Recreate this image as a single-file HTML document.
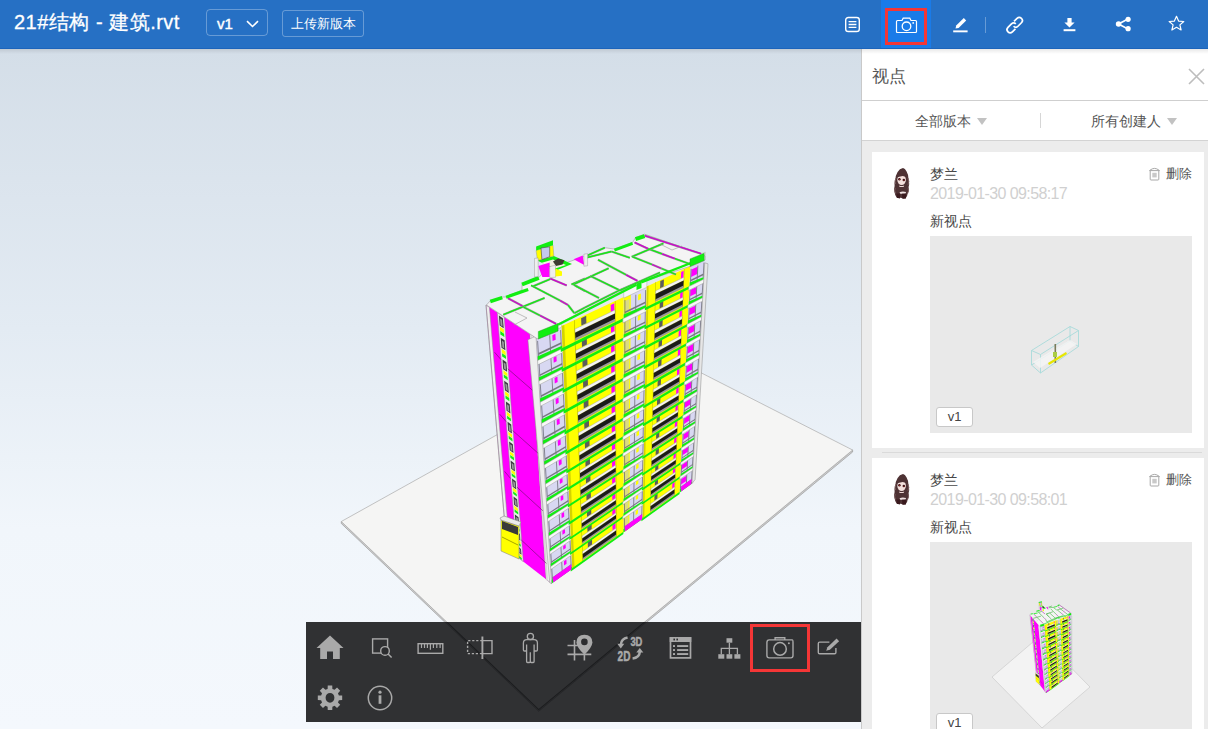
<!DOCTYPE html>
<html><head><meta charset="utf-8">
<style>
*{margin:0;padding:0;box-sizing:border-box}
html,body{width:1208px;height:729px;overflow:hidden;font-family:"Liberation Sans",sans-serif;background:#f3f7fc}
.abs{position:absolute}
#hdr{position:absolute;left:0;top:0;width:1208px;height:49px;background:#2670c4;border-bottom:1px solid #1c64bb}
#title{position:absolute;left:14px;top:9px;font-size:20px;letter-spacing:0.5px;-webkit-text-stroke:0.3px #fff;color:#fff;white-space:nowrap;line-height:26px}
#ver{position:absolute;left:206px;top:9px;width:62px;height:27px;border:1px solid rgba(255,255,255,.3);border-radius:4px}
#ver span{position:absolute;left:10px;top:5px;font-size:15px;font-weight:normal;-webkit-text-stroke:0.45px #fff;color:#fff;line-height:18px}
#upl{position:absolute;left:282px;top:10px;width:82px;height:27px;border:1px solid rgba(255,255,255,.3);border-radius:3px;color:#fff;font-size:12.5px;line-height:27px;text-align:center;white-space:nowrap}
#actbg{position:absolute;left:881px;top:0;width:50px;height:48px;background:#1a7be8}
#redtop{position:absolute;left:885px;top:8px;width:42px;height:37px;border:3px solid #f43636}
#vp{position:absolute;left:0;top:49px;width:861px;height:680px;background:linear-gradient(#d4dee8 0px,#e3ebf3 280px,#f1f6fb 480px,#f4f8fd 680px);overflow:hidden}
#shadow{position:absolute;left:0;top:49px;width:1208px;height:5px;background:linear-gradient(rgba(0,0,0,.09),rgba(0,0,0,0))}
#panel{position:absolute;left:861px;top:49px;width:347px;height:680px;background:#ececec;border-left:1px solid #c9c9c9;overflow:hidden}
#ph{position:absolute;left:0;top:0;width:346px;height:52px;background:#fff;border-bottom:1px solid #cfcfcf}
#ph .t{position:absolute;left:10px;top:18px;font-size:17px;color:#555;line-height:20px}
#pf{position:absolute;left:0;top:52px;width:346px;height:40px;background:#fff;border-bottom:1px solid #d3d3d3}
.ft{position:absolute;top:12px;font-size:14px;color:#555;line-height:16px;white-space:nowrap}
.tri{position:absolute;width:0;height:0;border-left:5px solid transparent;border-right:5px solid transparent;border-top:7px solid #c2c2c2}
.card{position:absolute;left:10px;width:332px;background:#fff}
.card .nm{position:absolute;left:58px;top:13px;font-size:14px;color:#484848;line-height:18px}
.card .dt{position:absolute;left:58px;top:33px;font-size:16px;letter-spacing:-0.6px;color:#d0d0d0;line-height:18px;white-space:nowrap}
.card .vn{position:absolute;left:58px;top:60px;font-size:14px;color:#484848;line-height:18px}
.card .del{position:absolute;left:294px;top:15px;font-size:12.5px;color:#555;line-height:14px}
.card .th{position:absolute;left:58px;top:84px;width:262px;height:197px;background:#e9e9e9;overflow:hidden}
.badge{position:absolute;left:6px;width:37px;height:20px;background:#fff;border:1px solid #c8c8c8;border-radius:3px;font-size:13px;color:#444;text-align:center;line-height:18px}
#tb{position:absolute;left:306px;top:622px;width:555px;height:100px;background:rgba(40,41,43,.96)}
#redtb{position:absolute;left:750px;top:624px;width:60px;height:48px;border:3px solid #f43636}
</style></head><body>
<div id="vp"></div><svg class="abs" style="left:0;top:49px" width="861" height="680" viewBox="0 49 861 680"><polygon points="341.3,523.5 538.7,711.6 852.6,452.0 852.6,450.0 538.7,709.6 341.3,521.5" fill="#cfcfcf" stroke="#9a9a9a" stroke-width="0.7"/><polygon points="341.3,521.5 652.6,348.1 852.6,450.0 538.7,709.6" fill="#f5f5f4" stroke="#aaaaaa" stroke-width="0.7"/><polygon points="486.0,305.0 536.0,338.0 551.6,583.6 507.0,549.0" fill="#ff00ff"/>
<polygon points="486.0,305.0 489.4,307.3 510.1,551.4 507.0,549.0" fill="#eeeeee" stroke="#8a8a8a" stroke-width="0.50"/>
<polygon points="497.3,312.4 504.2,317.0 523.3,561.6 517.1,556.8" fill="#ececec" stroke="#8a8a8a" stroke-width="0.50"/>
<polygon points="529.9,334.0 536.0,338.0 551.6,583.6 546.1,579.4" fill="#f0f0f0" stroke="#8a8a8a" stroke-width="0.50"/>
<polygon points="529.9,334.0 531.9,335.3 548.0,580.8 546.1,579.4" fill="#d8d8d8"/>
<polygon points="498.9,315.6 502.9,318.3 503.7,328.2 499.7,325.6" fill="#3a3a40"/>
<polygon points="500.1,318.5 502.1,319.8 502.6,326.5 500.6,325.2" fill="#9a9aa0"/>
<polygon points="499.8,326.7 503.8,329.3 504.1,333.3 500.1,330.7" fill="#ffff00"/>
<polygon points="500.2,331.1 504.1,333.7 504.4,337.0 500.4,334.4" fill="#11ee11"/>
<polygon points="500.7,337.7 504.6,340.3 505.4,350.3 501.5,347.7" fill="#3a3a40"/>
<polygon points="501.9,340.6 503.8,341.9 504.3,348.5 502.4,347.2" fill="#9a9aa0"/>
<polygon points="501.6,348.8 505.5,351.4 505.8,355.4 501.9,352.7" fill="#ffff00"/>
<polygon points="502.0,353.2 505.8,355.8 506.1,359.1 502.2,356.4" fill="#11ee11"/>
<polygon points="502.5,359.6 506.4,362.3 507.1,371.8 503.2,369.2" fill="#3a3a40"/>
<polygon points="503.6,362.4 505.6,363.8 506.1,370.1 504.1,368.8" fill="#9a9aa0"/>
<polygon points="503.3,370.2 507.2,372.9 507.5,376.6 503.6,374.0" fill="#ffff00"/>
<polygon points="503.7,374.4 507.5,377.1 507.8,380.2 503.9,377.5" fill="#11ee11"/>
<polygon points="504.2,380.7 508.0,383.4 508.8,392.9 504.9,390.2" fill="#3a3a40"/>
<polygon points="505.3,383.5 507.2,384.8 507.7,391.1 505.8,389.8" fill="#9a9aa0"/>
<polygon points="505.0,391.2 508.8,393.9 509.1,397.7 505.3,395.0" fill="#ffff00"/>
<polygon points="505.4,395.4 509.2,398.1 509.4,401.2 505.6,398.6" fill="#11ee11"/>
<polygon points="505.9,401.6 509.7,404.3 510.4,413.4 506.6,410.7" fill="#3a3a40"/>
<polygon points="507.0,404.3 508.9,405.7 509.3,411.7 507.4,410.4" fill="#9a9aa0"/>
<polygon points="506.7,411.7 510.4,414.4 510.7,418.0 506.9,415.3" fill="#ffff00"/>
<polygon points="507.0,415.7 510.8,418.4 511.0,421.3 507.2,418.7" fill="#11ee11"/>
<polygon points="507.5,421.7 511.2,424.4 511.9,433.4 508.2,430.7" fill="#3a3a40"/>
<polygon points="508.6,424.4 510.4,425.7 510.9,431.7 509.0,430.4" fill="#9a9aa0"/>
<polygon points="508.3,431.7 512.0,434.4 512.3,438.0 508.6,435.3" fill="#ffff00"/>
<polygon points="508.6,435.7 512.3,438.4 512.6,441.4 508.8,438.7" fill="#11ee11"/>
<polygon points="509.1,441.6 512.8,444.3 513.5,452.9 509.8,450.2" fill="#3a3a40"/>
<polygon points="510.1,444.2 512.0,445.5 512.5,451.3 510.6,449.9" fill="#9a9aa0"/>
<polygon points="509.8,451.2 513.6,453.9 513.8,457.3 510.1,454.6" fill="#ffff00"/>
<polygon points="510.1,454.9 513.9,457.6 514.1,460.5 510.4,457.8" fill="#11ee11"/>
<polygon points="510.6,460.5 514.3,463.2 514.9,471.4 511.2,468.7" fill="#3a3a40"/>
<polygon points="511.7,463.0 513.5,464.4 513.9,469.8 512.1,468.5" fill="#9a9aa0"/>
<polygon points="511.3,469.6 515.0,472.3 515.3,475.5 511.6,472.8" fill="#ffff00"/>
<polygon points="511.6,473.2 515.3,475.9 515.5,478.6 511.8,475.9" fill="#11ee11"/>
<polygon points="512.0,478.6 515.7,481.3 516.3,489.4 512.7,486.7" fill="#3a3a40"/>
<polygon points="513.1,481.1 514.9,482.4 515.4,487.8 513.5,486.5" fill="#9a9aa0"/>
<polygon points="512.8,487.6 516.4,490.3 516.7,493.6 513.0,490.8" fill="#ffff00"/>
<polygon points="513.0,491.2 516.7,493.9 516.9,496.6 513.3,493.9" fill="#11ee11"/>
<polygon points="513.5,496.6 517.1,499.3 517.8,507.5 514.1,504.7" fill="#3a3a40"/>
<polygon points="514.5,499.1 516.4,500.4 516.8,505.9 515.0,504.5" fill="#9a9aa0"/>
<polygon points="514.2,505.6 517.8,508.4 518.1,511.6 514.5,508.9" fill="#ffff00"/>
<polygon points="514.5,509.2 518.1,511.9 518.3,514.6 514.7,511.9" fill="#11ee11"/>
<polygon points="514.9,514.5 518.5,517.2 519.1,524.9 515.5,522.2" fill="#3a3a40"/>
<polygon points="516.0,516.9 517.8,518.3 518.2,523.4 516.4,522.0" fill="#9a9aa0"/>
<polygon points="515.6,523.0 519.2,525.8 519.4,528.8 515.9,526.1" fill="#ffff00"/>
<polygon points="515.9,526.4 519.5,529.2 519.7,531.7 516.1,529.0" fill="#11ee11"/>
<polygon points="516.3,531.3 519.9,534.1 520.4,540.8 516.8,538.1" fill="#3a3a40"/>
<polygon points="517.3,533.5 519.1,534.9 519.4,539.4 517.7,538.0" fill="#9a9aa0"/>
<polygon points="516.9,538.9 520.4,541.6 520.7,544.3 517.1,541.6" fill="#ffff00"/>
<polygon points="517.1,541.9 520.7,544.6 520.9,546.8 517.3,544.1" fill="#11ee11"/>
<polygon points="517.5,546.1 521.0,548.9 521.5,554.8 517.9,552.0" fill="#3a3a40"/>
<polygon points="518.5,548.1 520.2,549.5 520.5,553.4 518.8,552.0" fill="#9a9aa0"/>
<polygon points="518.0,552.7 521.5,555.4 521.7,557.7 518.2,555.0" fill="#ffff00"/>
<polygon points="518.2,555.3 521.7,558.0 521.9,559.9 518.4,557.2" fill="#11ee11"/>
<line x1="494.6" y1="352.3" x2="501.1" y2="359.7" stroke="#6a106a" stroke-width="0.60"/>
<line x1="507.8" y1="368.8" x2="535.2" y2="392.6" stroke="#6a106a" stroke-width="0.60"/>
<line x1="499.8" y1="414.3" x2="506.1" y2="421.6" stroke="#6a106a" stroke-width="0.60"/>
<line x1="512.6" y1="430.5" x2="539.2" y2="454.2" stroke="#6a106a" stroke-width="0.60"/>
<line x1="504.6" y1="471.4" x2="510.7" y2="478.6" stroke="#6a106a" stroke-width="0.60"/>
<line x1="517.0" y1="487.2" x2="542.9" y2="510.8" stroke="#6a106a" stroke-width="0.60"/>
<line x1="509.0" y1="524.4" x2="515.0" y2="531.5" stroke="#6a106a" stroke-width="0.60"/>
<line x1="521.2" y1="539.9" x2="546.4" y2="563.4" stroke="#6a106a" stroke-width="0.60"/>
<line x1="486.0" y1="305.0" x2="507.0" y2="549.0" stroke="#9a9a9a" stroke-width="0.60"/>
<polygon points="501.0,520.0 519.0,526.0 519.0,559.0 501.0,551.0" fill="#ffff00" stroke="#8a8a8a" stroke-width="0.60"/>
<polygon points="500.0,518.0 504.0,516.0 521.0,522.0 519.0,526.0 501.0,520.0" fill="#ececec" stroke="#8a8a8a" stroke-width="0.60"/>
<polygon points="502.0,521.0 518.0,527.0 518.0,535.0 502.0,529.0" fill="#3a3a3a"/>
<line x1="486.0" y1="305.0" x2="486.0" y2="305.0" stroke="#000" stroke-width="0" opacity="0"/>
<line x1="502" y1="537" x2="518" y2="545" stroke="#6a6a00" stroke-width="0.6"/>
<polygon points="536.0,336.0 705.0,257.5 692.0,483.6 551.6,583.6" fill="#e8e8e8"/>
<polygon points="550.6,567.0 571.6,552.4 572.3,568.8 551.6,583.6" fill="#d8d8f2"/>
<polygon points="563.9,561.2 566.4,559.5 566.6,563.8 564.1,565.5" fill="#ff00ff"/>
<line x1="551.8" y1="568.8" x2="552.5" y2="580.4" stroke="#6e6e78" stroke-width="0.80"/>
<line x1="561.7" y1="561.8" x2="562.3" y2="573.4" stroke="#6e6e78" stroke-width="0.80"/>
<line x1="570.7" y1="555.6" x2="571.2" y2="567.1" stroke="#6e6e78" stroke-width="0.80"/>
<polygon points="552.3,577.6 571.1,564.3 571.1,565.7 552.4,578.9" fill="#77777f"/>
<polygon points="551.4,580.3 572.2,566.6 572.3,568.8 551.6,583.6" fill="#11ee11"/>
<polygon points="549.6,552.0 570.9,537.5 571.6,552.4 550.6,567.0" fill="#d8d8f2"/>
<polygon points="563.1,546.0 565.6,544.2 565.8,548.1 563.3,549.8" fill="#ff00ff"/>
<line x1="550.8" y1="553.5" x2="551.5" y2="564.0" stroke="#6e6e78" stroke-width="0.80"/>
<line x1="560.9" y1="546.6" x2="561.5" y2="557.1" stroke="#6e6e78" stroke-width="0.80"/>
<line x1="570.0" y1="540.5" x2="570.5" y2="550.9" stroke="#6e6e78" stroke-width="0.80"/>
<polygon points="551.3,561.5 570.3,548.4 570.4,549.6 551.4,562.7" fill="#77777f"/>
<polygon points="550.4,564.0 571.5,550.3 571.6,552.4 550.6,567.0" fill="#11ee11"/>
<polygon points="549.7,567.3 573.2,551.0 573.3,553.8 549.9,570.1" fill="#f8f8f8" stroke="#9a9a9a" stroke-width="0.50"/>
<polygon points="548.6,536.5 570.3,522.1 570.9,537.5 549.6,552.0" fill="#d8d8f2"/>
<polygon points="562.3,530.6 564.9,528.9 565.1,532.9 562.5,534.7" fill="#ff00ff"/>
<line x1="549.9" y1="538.1" x2="550.6" y2="549.0" stroke="#6e6e78" stroke-width="0.80"/>
<line x1="560.1" y1="531.3" x2="560.7" y2="542.1" stroke="#6e6e78" stroke-width="0.80"/>
<line x1="569.3" y1="525.2" x2="569.8" y2="535.9" stroke="#6e6e78" stroke-width="0.80"/>
<polygon points="550.4,546.3 569.7,533.3 569.7,534.6 550.5,547.6" fill="#77777f"/>
<polygon points="549.4,548.9 570.8,535.4 570.9,537.5 549.6,552.0" fill="#11ee11"/>
<polygon points="548.8,552.3 572.5,536.1 572.6,539.0 548.9,555.2" fill="#f8f8f8" stroke="#9a9a9a" stroke-width="0.50"/>
<polygon points="547.5,519.0 569.5,504.8 570.3,522.1 548.6,536.5" fill="#d8d8f2"/>
<polygon points="561.4,513.6 564.0,511.9 564.3,516.5 561.7,518.2" fill="#ff00ff"/>
<line x1="548.8" y1="520.9" x2="549.6" y2="533.2" stroke="#6e6e78" stroke-width="0.80"/>
<line x1="559.2" y1="514.2" x2="559.9" y2="526.4" stroke="#6e6e78" stroke-width="0.80"/>
<line x1="568.5" y1="508.1" x2="569.1" y2="520.3" stroke="#6e6e78" stroke-width="0.80"/>
<polygon points="549.4,530.2 569.0,517.3 569.0,518.7 549.5,531.6" fill="#77777f"/>
<polygon points="548.4,533.0 570.2,519.7 570.3,522.1 548.6,536.5" fill="#11ee11"/>
<polygon points="547.8,536.7 571.9,520.7 572.0,523.9 548.0,540.0" fill="#f8f8f8" stroke="#9a9a9a" stroke-width="0.50"/>
<polygon points="546.5,502.0 568.8,488.0 569.5,504.8 547.5,519.0" fill="#d8d8f2"/>
<polygon points="560.6,496.6 563.2,495.0 563.4,499.4 560.8,501.1" fill="#ff00ff"/>
<line x1="547.8" y1="503.9" x2="548.5" y2="515.8" stroke="#6e6e78" stroke-width="0.80"/>
<line x1="558.3" y1="497.2" x2="558.9" y2="509.0" stroke="#6e6e78" stroke-width="0.80"/>
<line x1="567.8" y1="491.2" x2="568.3" y2="503.0" stroke="#6e6e78" stroke-width="0.80"/>
<polygon points="548.3,512.9 568.2,500.1 568.2,501.5 548.4,514.2" fill="#77777f"/>
<polygon points="547.3,515.6 569.4,502.5 569.5,504.8 547.5,519.0" fill="#11ee11"/>
<polygon points="546.6,519.2 571.1,503.4 571.3,506.5 546.8,522.4" fill="#f8f8f8" stroke="#9a9a9a" stroke-width="0.50"/>
<polygon points="545.4,484.6 568.0,470.7 568.8,488.0 546.5,502.0" fill="#d8d8f2"/>
<polygon points="559.7,479.4 562.4,477.8 562.6,482.3 559.9,483.9" fill="#ff00ff"/>
<line x1="546.7" y1="486.5" x2="547.4" y2="498.7" stroke="#6e6e78" stroke-width="0.80"/>
<line x1="557.4" y1="479.9" x2="558.0" y2="492.1" stroke="#6e6e78" stroke-width="0.80"/>
<line x1="567.0" y1="474.0" x2="567.6" y2="486.1" stroke="#6e6e78" stroke-width="0.80"/>
<polygon points="547.3,495.8 567.4,483.2 567.5,484.6 547.3,497.2" fill="#77777f"/>
<polygon points="546.2,498.6 568.7,485.6 568.8,488.0 546.5,502.0" fill="#11ee11"/>
<polygon points="545.6,502.2 570.4,486.6 570.6,489.8 545.8,505.5" fill="#f8f8f8" stroke="#9a9a9a" stroke-width="0.50"/>
<polygon points="544.2,465.4 567.2,451.7 568.0,470.7 545.4,484.6" fill="#d8d8f2"/>
<polygon points="558.7,460.7 561.5,459.1 561.7,464.1 559.0,465.7" fill="#ff00ff"/>
<line x1="545.5" y1="467.6" x2="546.3" y2="481.1" stroke="#6e6e78" stroke-width="0.80"/>
<line x1="556.4" y1="461.1" x2="557.1" y2="474.5" stroke="#6e6e78" stroke-width="0.80"/>
<line x1="566.2" y1="455.3" x2="566.8" y2="468.6" stroke="#6e6e78" stroke-width="0.80"/>
<polygon points="546.1,477.8 566.6,465.4 566.7,466.9 546.2,479.3" fill="#77777f"/>
<polygon points="545.1,480.8 567.9,468.1 568.0,470.7 545.4,484.6" fill="#11ee11"/>
<polygon points="544.4,484.8 569.7,469.3 569.8,472.9 544.7,488.4" fill="#f8f8f8" stroke="#9a9a9a" stroke-width="0.50"/>
<polygon points="542.9,445.0 566.3,431.6 567.2,451.7 544.2,465.4" fill="#d8d8f2"/>
<polygon points="557.7,440.7 560.5,439.1 560.8,444.4 558.0,446.0" fill="#ff00ff"/>
<line x1="544.3" y1="447.4" x2="545.1" y2="461.7" stroke="#6e6e78" stroke-width="0.80"/>
<line x1="555.3" y1="441.0" x2="556.1" y2="455.2" stroke="#6e6e78" stroke-width="0.80"/>
<line x1="565.3" y1="435.3" x2="565.9" y2="449.4" stroke="#6e6e78" stroke-width="0.80"/>
<polygon points="544.9,458.3 565.8,446.0 565.8,447.6 545.0,459.9" fill="#77777f"/>
<polygon points="543.9,461.4 567.0,449.0 567.2,451.7 544.2,465.4" fill="#11ee11"/>
<polygon points="543.2,465.5 568.9,450.3 569.0,454.1 543.5,469.3" fill="#f8f8f8" stroke="#9a9a9a" stroke-width="0.50"/>
<polygon points="541.5,423.8 565.4,410.7 566.3,431.6 542.9,445.0" fill="#d8d8f2"/>
<polygon points="556.7,419.8 559.5,418.3 559.8,423.8 556.9,425.3" fill="#ff00ff"/>
<line x1="543.0" y1="426.4" x2="543.9" y2="441.2" stroke="#6e6e78" stroke-width="0.80"/>
<line x1="554.2" y1="420.1" x2="555.0" y2="434.8" stroke="#6e6e78" stroke-width="0.80"/>
<line x1="564.3" y1="414.5" x2="565.0" y2="429.1" stroke="#6e6e78" stroke-width="0.80"/>
<polygon points="543.6,437.6 564.8,425.6 564.9,427.3 543.8,439.3" fill="#77777f"/>
<polygon points="542.6,440.8 566.2,428.7 566.3,431.6 542.9,445.0" fill="#11ee11"/>
<polygon points="541.9,445.1 568.0,430.2 568.2,434.1 542.2,449.1" fill="#f8f8f8" stroke="#9a9a9a" stroke-width="0.50"/>
<polygon points="540.2,402.7 564.5,389.8 565.4,410.7 541.5,423.8" fill="#d8d8f2"/>
<polygon points="555.6,398.9 558.5,397.4 558.7,402.8 555.9,404.4" fill="#ff00ff"/>
<line x1="541.6" y1="405.2" x2="542.6" y2="420.0" stroke="#6e6e78" stroke-width="0.80"/>
<line x1="553.1" y1="399.1" x2="553.9" y2="413.8" stroke="#6e6e78" stroke-width="0.80"/>
<line x1="563.4" y1="393.6" x2="564.1" y2="408.2" stroke="#6e6e78" stroke-width="0.80"/>
<polygon points="542.3,416.5 563.9,404.7 564.0,406.4 542.4,418.1" fill="#77777f"/>
<polygon points="541.3,419.6 565.2,407.8 565.4,410.7 541.5,423.8" fill="#11ee11"/>
<polygon points="540.6,423.9 567.1,409.3 567.3,413.1 540.8,427.8" fill="#f8f8f8" stroke="#9a9a9a" stroke-width="0.50"/>
<polygon points="538.9,381.5 563.5,368.9 564.5,389.8 540.2,402.7" fill="#d8d8f2"/>
<polygon points="554.5,377.9 557.4,376.4 557.7,381.9 554.8,383.4" fill="#ff00ff"/>
<line x1="540.3" y1="384.1" x2="541.2" y2="398.9" stroke="#6e6e78" stroke-width="0.80"/>
<line x1="552.0" y1="378.1" x2="552.8" y2="392.8" stroke="#6e6e78" stroke-width="0.80"/>
<line x1="562.5" y1="372.7" x2="563.1" y2="387.4" stroke="#6e6e78" stroke-width="0.80"/>
<polygon points="541.0,395.3 563.0,383.8 563.0,385.5 541.1,397.0" fill="#77777f"/>
<polygon points="539.9,398.5 564.3,386.9 564.5,389.8 540.2,402.7" fill="#11ee11"/>
<polygon points="539.2,402.8 566.3,388.5 566.4,392.4 539.5,406.7" fill="#f8f8f8" stroke="#9a9a9a" stroke-width="0.50"/>
<polygon points="537.6,361.0 562.7,348.7 563.5,368.9 538.9,381.5" fill="#d8d8f2"/>
<polygon points="553.5,357.4 556.4,356.0 556.7,361.3 553.7,362.7" fill="#ff00ff"/>
<line x1="539.1" y1="363.5" x2="539.9" y2="377.8" stroke="#6e6e78" stroke-width="0.80"/>
<line x1="550.9" y1="357.6" x2="551.7" y2="371.9" stroke="#6e6e78" stroke-width="0.80"/>
<line x1="561.6" y1="352.4" x2="562.2" y2="366.6" stroke="#6e6e78" stroke-width="0.80"/>
<polygon points="539.7,374.4 562.0,363.1 562.1,364.7 539.8,376.0" fill="#77777f"/>
<polygon points="538.6,377.5 563.4,366.1 563.5,368.9 538.9,381.5" fill="#11ee11"/>
<polygon points="537.9,381.6 565.4,367.6 565.5,371.4 538.1,385.4" fill="#f8f8f8" stroke="#9a9a9a" stroke-width="0.50"/>
<polygon points="536.1,338.0 561.7,326.1 562.7,348.7 537.6,361.0" fill="#d8d8f2"/>
<polygon points="552.3,335.2 555.4,333.7 555.7,339.7 552.6,341.1" fill="#ff00ff"/>
<line x1="537.6" y1="340.9" x2="538.6" y2="357.0" stroke="#6e6e78" stroke-width="0.80"/>
<line x1="549.7" y1="335.2" x2="550.6" y2="351.2" stroke="#6e6e78" stroke-width="0.80"/>
<line x1="560.6" y1="330.1" x2="561.3" y2="346.0" stroke="#6e6e78" stroke-width="0.80"/>
<polygon points="538.4,353.1 561.1,342.2 561.2,344.0 538.5,354.9" fill="#77777f"/>
<polygon points="537.3,356.5 562.5,345.6 562.7,348.7 537.6,361.0" fill="#11ee11"/>
<polygon points="536.6,361.0 564.5,347.4 564.7,351.6 536.8,365.3" fill="#f8f8f8" stroke="#9a9a9a" stroke-width="0.50"/>
<polygon points="535.6,329.9 561.3,318.1 561.7,327.1 536.2,339.0" fill="#f6f6f6" stroke="#999" stroke-width="0.40"/>
<polygon points="571.6,552.4 623.5,516.3 623.4,532.4 572.3,568.8" fill="#ffff00"/>
<polygon points="571.6,552.4 573.8,550.9 574.5,567.3 572.3,568.8" fill="#d4d400"/>
<polygon points="581.9,545.2 582.4,544.8 583.0,561.3 582.4,561.6" fill="#b8b800"/>
<polygon points="616.0,521.5 616.5,521.1 616.6,537.3 616.1,537.7" fill="#b8b800"/>
<polygon points="587.8,542.0 592.0,539.0 592.1,544.5 587.9,547.4" fill="#5c5c5c"/>
<polygon points="612.5,525.2 615.5,523.1 615.6,528.4 612.6,530.5" fill="#ff00ff"/>
<polygon points="582.6,551.5 616.1,528.0 616.1,530.6 582.7,554.1" fill="#f4f4f4" stroke="#9a9a9a" stroke-width="0.40"/>
<polygon points="582.7,554.1 616.1,530.6 616.1,535.4 582.9,559.0" fill="#1a1a1a"/>
<polygon points="582.9,558.0 616.1,534.5 616.1,536.4 582.9,560.0" fill="#9a9a9a"/>
<polygon points="570.7,569.3 623.4,531.8 623.4,534.0 570.8,571.6" fill="#11ee11"/>
<polygon points="570.9,537.5 623.5,501.8 623.5,516.3 571.6,552.4" fill="#ffff00"/>
<polygon points="570.9,537.5 573.1,536.0 573.8,550.9 571.6,552.4" fill="#d4d400"/>
<polygon points="581.4,530.4 581.9,530.0 582.4,544.8 581.9,545.2" fill="#b8b800"/>
<polygon points="615.9,506.9 616.5,506.5 616.5,521.1 616.0,521.5" fill="#b8b800"/>
<polygon points="587.3,527.1 591.6,524.2 591.7,529.1 587.5,532.0" fill="#5c5c5c"/>
<polygon points="612.4,510.5 615.4,508.4 615.5,513.1 612.4,515.2" fill="#ff00ff"/>
<polygon points="582.1,536.0 616.0,512.8 616.0,515.1 582.2,538.4" fill="#f4f4f4" stroke="#9a9a9a" stroke-width="0.40"/>
<polygon points="582.2,538.4 616.0,515.1 616.0,519.5 582.3,542.8" fill="#1a1a1a"/>
<polygon points="582.3,541.9 616.0,518.6 616.0,520.3 582.4,543.7" fill="#9a9a9a"/>
<polygon points="570.0,552.9 623.5,515.7 623.5,517.7 570.1,554.9" fill="#11ee11"/>
<polygon points="570.3,522.1 623.5,486.8 623.5,501.8 570.9,537.5" fill="#ffff00"/>
<polygon points="570.3,522.1 572.5,520.6 573.1,536.0 570.9,537.5" fill="#d4d400"/>
<polygon points="580.8,515.1 581.4,514.7 581.9,530.0 581.4,530.4" fill="#b8b800"/>
<polygon points="615.9,491.8 616.4,491.5 616.5,506.5 615.9,506.9" fill="#b8b800"/>
<polygon points="586.9,511.9 591.2,509.0 591.3,514.1 587.0,517.0" fill="#5c5c5c"/>
<polygon points="612.3,495.4 615.4,493.4 615.4,498.2 612.3,500.3" fill="#ff00ff"/>
<polygon points="581.6,520.9 615.9,497.9 615.9,500.3 581.7,523.4" fill="#f4f4f4" stroke="#9a9a9a" stroke-width="0.40"/>
<polygon points="581.7,523.4 615.9,500.3 615.9,504.8 581.8,527.9" fill="#1a1a1a"/>
<polygon points="581.8,527.0 615.9,503.9 615.9,505.7 581.9,528.8" fill="#9a9a9a"/>
<polygon points="569.3,538.0 623.5,501.2 623.5,503.2 569.4,540.1" fill="#11ee11"/>
<polygon points="569.5,504.8 623.5,469.8 623.5,486.8 570.3,522.1" fill="#ffff00"/>
<polygon points="569.5,504.8 571.8,503.3 572.5,520.6 570.3,522.1" fill="#d4d400"/>
<polygon points="580.2,497.8 580.8,497.5 581.4,514.7 580.8,515.1" fill="#b8b800"/>
<polygon points="615.8,474.8 616.3,474.5 616.4,491.5 615.9,491.8" fill="#b8b800"/>
<polygon points="586.4,494.8 590.8,491.9 590.9,497.6 586.5,500.5" fill="#5c5c5c"/>
<polygon points="612.1,478.6 615.3,476.6 615.3,482.0 612.2,484.1" fill="#ff00ff"/>
<polygon points="581.0,504.4 615.8,481.7 615.8,484.4 581.1,507.2" fill="#f4f4f4" stroke="#9a9a9a" stroke-width="0.40"/>
<polygon points="581.1,507.2 615.8,484.4 615.9,489.5 581.3,512.4" fill="#1a1a1a"/>
<polygon points="581.3,511.3 615.9,488.5 615.9,490.5 581.3,513.4" fill="#9a9a9a"/>
<polygon points="568.6,522.5 623.5,486.1 623.5,488.4 568.7,524.9" fill="#11ee11"/>
<polygon points="568.8,488.0 623.5,453.5 623.5,469.8 569.5,504.8" fill="#ffff00"/>
<polygon points="568.8,488.0 571.1,486.5 571.8,503.3 569.5,504.8" fill="#d4d400"/>
<polygon points="579.6,481.1 580.2,480.7 580.8,497.5 580.2,497.8" fill="#b8b800"/>
<polygon points="615.7,458.4 616.2,458.1 616.3,474.5 615.8,474.8" fill="#b8b800"/>
<polygon points="585.9,478.0 590.3,475.2 590.5,480.8 586.0,483.6" fill="#5c5c5c"/>
<polygon points="612.0,462.1 615.2,460.1 615.2,465.4 612.1,467.4" fill="#ff00ff"/>
<polygon points="580.4,487.5 615.7,465.0 615.7,467.7 580.5,490.2" fill="#f4f4f4" stroke="#9a9a9a" stroke-width="0.40"/>
<polygon points="580.5,490.2 615.7,467.7 615.8,472.6 580.7,495.2" fill="#1a1a1a"/>
<polygon points="580.7,494.2 615.8,471.6 615.8,473.5 580.7,496.2" fill="#9a9a9a"/>
<polygon points="567.8,505.2 623.5,469.2 623.5,471.5 567.9,507.5" fill="#11ee11"/>
<polygon points="568.0,470.7 623.6,436.7 623.5,453.5 568.8,488.0" fill="#ffff00"/>
<polygon points="568.0,470.7 570.4,469.3 571.1,486.5 568.8,488.0" fill="#d4d400"/>
<polygon points="579.1,464.0 579.6,463.6 580.2,480.7 579.6,481.1" fill="#b8b800"/>
<polygon points="615.6,441.6 616.1,441.3 616.2,458.1 615.7,458.4" fill="#b8b800"/>
<polygon points="585.4,461.0 589.9,458.2 590.0,463.9 585.5,466.7" fill="#5c5c5c"/>
<polygon points="611.9,445.2 615.1,443.3 615.1,448.7 611.9,450.7" fill="#ff00ff"/>
<polygon points="579.9,470.5 615.6,448.4 615.7,451.1 580.0,473.3" fill="#f4f4f4" stroke="#9a9a9a" stroke-width="0.40"/>
<polygon points="580.0,473.3 615.7,451.1 615.7,456.1 580.1,478.4" fill="#1a1a1a"/>
<polygon points="580.1,477.4 615.7,455.1 615.7,457.1 580.2,479.4" fill="#9a9a9a"/>
<polygon points="567.0,488.3 623.5,452.8 623.5,455.1 567.2,490.7" fill="#11ee11"/>
<polygon points="567.2,451.7 623.6,418.3 623.6,436.7 568.0,470.7" fill="#ffff00"/>
<polygon points="567.2,451.7 569.6,450.3 570.4,469.3 568.0,470.7" fill="#d4d400"/>
<polygon points="578.4,445.1 579.0,444.7 579.6,463.6 579.1,464.0" fill="#b8b800"/>
<polygon points="615.5,423.1 616.1,422.8 616.1,441.3 615.6,441.6" fill="#b8b800"/>
<polygon points="584.8,442.3 589.4,439.5 589.6,445.8 585.0,448.5" fill="#5c5c5c"/>
<polygon points="611.7,426.8 615.0,424.9 615.0,430.9 611.8,432.8" fill="#ff00ff"/>
<polygon points="579.2,452.4 615.6,430.5 615.6,433.5 579.3,455.4" fill="#f4f4f4" stroke="#9a9a9a" stroke-width="0.40"/>
<polygon points="579.3,455.4 615.6,433.5 615.6,439.0 579.5,461.0" fill="#1a1a1a"/>
<polygon points="579.5,459.9 615.6,437.9 615.6,440.1 579.6,462.1" fill="#9a9a9a"/>
<polygon points="566.3,471.0 623.6,436.0 623.6,438.5 566.4,473.6" fill="#11ee11"/>
<polygon points="566.3,431.6 623.6,398.8 623.6,418.3 567.2,451.7" fill="#ffff00"/>
<polygon points="566.3,431.6 568.7,430.2 569.6,450.3 567.2,451.7" fill="#d4d400"/>
<polygon points="577.7,425.1 578.3,424.7 579.0,444.7 578.4,445.1" fill="#b8b800"/>
<polygon points="615.4,403.5 616.0,403.1 616.1,422.8 615.5,423.1" fill="#b8b800"/>
<polygon points="584.2,422.4 588.9,419.7 589.1,426.3 584.4,429.0" fill="#5c5c5c"/>
<polygon points="611.6,407.3 614.9,405.4 614.9,411.7 611.6,413.6" fill="#ff00ff"/>
<polygon points="578.6,432.8 615.5,411.4 615.5,414.5 578.7,436.0" fill="#f4f4f4" stroke="#9a9a9a" stroke-width="0.40"/>
<polygon points="578.7,436.0 615.5,414.5 615.5,420.4 578.9,442.0" fill="#1a1a1a"/>
<polygon points="578.8,440.8 615.5,419.2 615.5,421.5 578.9,443.2" fill="#9a9a9a"/>
<polygon points="565.4,452.0 623.6,417.5 623.6,420.2 565.5,454.8" fill="#11ee11"/>
<polygon points="565.4,410.7 623.6,378.5 623.6,398.8 566.3,431.6" fill="#ffff00"/>
<polygon points="565.4,410.7 567.8,409.3 568.7,430.2 566.3,431.6" fill="#d4d400"/>
<polygon points="577.0,404.3 577.6,403.9 578.3,424.7 577.7,425.1" fill="#b8b800"/>
<polygon points="615.3,383.1 615.9,382.8 616.0,403.1 615.4,403.5" fill="#b8b800"/>
<polygon points="583.6,401.7 588.4,399.0 588.5,405.9 583.8,408.6" fill="#5c5c5c"/>
<polygon points="611.4,386.9 614.8,385.1 614.8,391.6 611.5,393.5" fill="#ff00ff"/>
<polygon points="577.9,412.3 615.4,391.3 615.4,394.6 578.0,415.6" fill="#f4f4f4" stroke="#9a9a9a" stroke-width="0.40"/>
<polygon points="578.0,415.6 615.4,394.6 615.4,400.6 578.2,421.8" fill="#1a1a1a"/>
<polygon points="578.2,420.6 615.4,399.4 615.4,401.8 578.2,423.1" fill="#9a9a9a"/>
<polygon points="564.5,431.8 623.6,398.0 623.6,400.8 564.6,434.7" fill="#11ee11"/>
<polygon points="564.5,389.8 623.7,358.4 623.6,378.5 565.4,410.7" fill="#ffff00"/>
<polygon points="564.5,389.8 567.0,388.5 567.8,409.3 565.4,410.7" fill="#d4d400"/>
<polygon points="576.3,383.6 576.9,383.2 577.6,403.9 577.0,404.3" fill="#b8b800"/>
<polygon points="615.2,362.9 615.8,362.6 615.9,382.8 615.3,383.1" fill="#b8b800"/>
<polygon points="583.0,381.1 587.8,378.5 588.0,385.3 583.2,387.9" fill="#5c5c5c"/>
<polygon points="611.2,366.7 614.7,364.8 614.7,371.4 611.3,373.2" fill="#ff00ff"/>
<polygon points="577.2,391.6 615.3,371.1 615.3,374.3 577.3,394.9" fill="#f4f4f4" stroke="#9a9a9a" stroke-width="0.40"/>
<polygon points="577.3,394.9 615.3,374.3 615.3,380.3 577.5,401.1" fill="#1a1a1a"/>
<polygon points="577.4,399.8 615.3,379.1 615.3,381.5 577.5,402.3" fill="#9a9a9a"/>
<polygon points="563.5,410.8 623.6,377.7 623.6,380.5 563.7,413.7" fill="#11ee11"/>
<polygon points="563.5,368.9 623.7,338.3 623.7,358.4 564.5,389.8" fill="#ffff00"/>
<polygon points="563.5,368.9 566.1,367.6 567.0,388.5 564.5,389.8" fill="#d4d400"/>
<polygon points="575.5,362.8 576.2,362.5 576.9,383.2 576.3,383.6" fill="#b8b800"/>
<polygon points="615.1,342.7 615.7,342.4 615.8,362.6 615.2,362.9" fill="#b8b800"/>
<polygon points="582.4,360.4 587.3,357.9 587.5,364.8 582.6,367.3" fill="#5c5c5c"/>
<polygon points="611.1,346.4 614.5,344.6 614.6,351.1 611.1,352.9" fill="#ff00ff"/>
<polygon points="576.4,370.9 615.2,350.8 615.2,354.1 576.6,374.2" fill="#f4f4f4" stroke="#9a9a9a" stroke-width="0.40"/>
<polygon points="576.6,374.2 615.2,354.1 615.2,360.1 576.8,380.4" fill="#1a1a1a"/>
<polygon points="576.7,379.1 615.2,358.9 615.2,361.3 576.8,381.6" fill="#9a9a9a"/>
<polygon points="562.6,390.0 623.7,357.6 623.6,360.4 562.7,392.9" fill="#11ee11"/>
<polygon points="562.7,348.7 623.7,318.9 623.7,338.3 563.5,368.9" fill="#ffff00"/>
<polygon points="562.7,348.7 565.2,347.5 566.1,367.6 563.5,368.9" fill="#d4d400"/>
<polygon points="574.8,342.8 575.5,342.5 576.2,362.5 575.5,362.8" fill="#b8b800"/>
<polygon points="615.0,323.1 615.6,322.8 615.7,342.4 615.1,342.7" fill="#b8b800"/>
<polygon points="581.8,340.4 586.8,338.0 586.9,344.6 582.0,347.0" fill="#5c5c5c"/>
<polygon points="610.9,326.7 614.4,325.0 614.5,331.3 611.0,333.0" fill="#ff00ff"/>
<polygon points="575.8,350.5 615.1,331.0 615.1,334.1 575.9,353.8" fill="#f4f4f4" stroke="#9a9a9a" stroke-width="0.40"/>
<polygon points="575.9,353.8 615.1,334.1 615.1,340.0 576.1,359.7" fill="#1a1a1a"/>
<polygon points="576.0,358.5 615.1,338.8 615.1,341.1 576.1,360.9" fill="#9a9a9a"/>
<polygon points="561.6,369.1 623.7,337.5 623.7,340.2 561.8,371.9" fill="#11ee11"/>
<polygon points="561.7,326.1 623.7,297.1 623.7,318.9 562.7,348.7" fill="#ffff00"/>
<polygon points="561.7,326.1 564.3,324.9 565.2,347.5 562.7,348.7" fill="#d4d400"/>
<polygon points="574.1,320.3 574.7,320.0 575.5,342.5 574.8,342.8" fill="#b8b800"/>
<polygon points="614.9,301.3 615.5,301.0 615.6,322.8 615.0,323.1" fill="#b8b800"/>
<polygon points="581.1,318.2 586.2,315.8 586.4,323.2 581.4,325.6" fill="#5c5c5c"/>
<polygon points="610.7,305.0 614.3,303.3 614.4,310.4 610.8,312.1" fill="#ff00ff"/>
<polygon points="575.0,329.1 614.9,310.1 615.0,313.6 575.1,332.7" fill="#f4f4f4" stroke="#9a9a9a" stroke-width="0.40"/>
<polygon points="575.1,332.7 615.0,313.6 615.0,320.1 575.4,339.4" fill="#1a1a1a"/>
<polygon points="575.3,338.0 615.0,318.8 615.0,321.4 575.4,340.7" fill="#9a9a9a"/>
<polygon points="560.7,348.8 623.7,318.0 623.7,321.0 560.9,351.9" fill="#11ee11"/>
<polygon points="623.5,516.3 643.0,502.7 642.7,518.7 623.4,532.4" fill="#d8d8f2"/>
<polygon points="635.6,511.0 638.0,509.4 637.9,513.6 635.6,515.2" fill="#ffff00"/>
<polygon points="623.5,516.3 629.4,512.2 629.3,528.3 623.4,532.4" fill="#ffff00"/>
<polygon points="624.4,518.9 628.4,516.1 628.4,525.8 624.4,528.5" fill="#dcdc80"/>
<line x1="624.4" y1="518.1" x2="624.4" y2="529.3" stroke="#6e6e78" stroke-width="0.80"/>
<line x1="633.7" y1="511.6" x2="633.6" y2="522.8" stroke="#6e6e78" stroke-width="0.80"/>
<line x1="642.0" y1="505.8" x2="641.8" y2="517.0" stroke="#6e6e78" stroke-width="0.80"/>
<polygon points="624.4,526.6 641.9,514.3 641.9,515.6 624.4,527.9" fill="#77777f"/>
<polygon points="623.4,529.2 642.8,516.5 642.7,518.7 623.4,532.4" fill="#11ee11"/>
<polygon points="623.5,501.8 643.3,488.3 643.0,502.7 623.5,516.3" fill="#d8d8f2"/>
<polygon points="635.8,496.3 638.2,494.7 638.1,498.4 635.8,500.0" fill="#ffff00"/>
<polygon points="623.5,501.8 629.5,497.7 629.4,512.2 623.5,516.3" fill="#ffff00"/>
<polygon points="624.5,504.0 628.5,501.3 628.4,510.0 624.5,512.7" fill="#dcdc80"/>
<line x1="624.5" y1="503.3" x2="624.5" y2="513.5" stroke="#6e6e78" stroke-width="0.80"/>
<line x1="633.8" y1="496.9" x2="633.7" y2="507.0" stroke="#6e6e78" stroke-width="0.80"/>
<line x1="642.3" y1="491.1" x2="642.1" y2="501.2" stroke="#6e6e78" stroke-width="0.80"/>
<polygon points="624.5,511.0 642.1,498.8 642.1,499.9 624.5,512.2" fill="#77777f"/>
<polygon points="623.5,513.4 643.1,500.7 643.0,502.7 623.5,516.3" fill="#11ee11"/>
<polygon points="622.7,516.5 644.4,501.5 644.3,504.2 622.7,519.2" fill="#f8f8f8" stroke="#9a9a9a" stroke-width="0.50"/>
<polygon points="623.5,486.8 643.5,473.4 643.3,488.3 623.5,501.8" fill="#d8d8f2"/>
<polygon points="636.0,481.4 638.4,479.9 638.3,483.7 635.9,485.3" fill="#ffff00"/>
<polygon points="623.5,486.8 629.6,482.7 629.5,497.7 623.5,501.8" fill="#ffff00"/>
<polygon points="624.5,489.1 628.6,486.4 628.5,495.4 624.5,498.1" fill="#dcdc80"/>
<line x1="624.5" y1="488.3" x2="624.5" y2="498.8" stroke="#6e6e78" stroke-width="0.80"/>
<line x1="634.0" y1="482.0" x2="633.9" y2="492.5" stroke="#6e6e78" stroke-width="0.80"/>
<line x1="642.5" y1="476.3" x2="642.3" y2="486.7" stroke="#6e6e78" stroke-width="0.80"/>
<polygon points="624.5,496.3 642.4,484.2 642.4,485.4 624.5,497.5" fill="#77777f"/>
<polygon points="623.5,498.8 643.3,486.2 643.3,488.3 623.5,501.8" fill="#11ee11"/>
<polygon points="622.8,501.9 644.7,487.1 644.6,489.8 622.8,504.8" fill="#f8f8f8" stroke="#9a9a9a" stroke-width="0.50"/>
<polygon points="623.5,469.8 643.8,456.7 643.5,473.4 623.5,486.8" fill="#d8d8f2"/>
<polygon points="636.2,465.0 638.6,463.5 638.5,467.8 636.1,469.4" fill="#ffff00"/>
<polygon points="623.5,469.8 629.7,465.8 629.6,482.7 623.5,486.8" fill="#ffff00"/>
<polygon points="624.5,472.6 628.7,469.9 628.6,480.0 624.5,482.7" fill="#dcdc80"/>
<line x1="624.5" y1="471.7" x2="624.5" y2="483.6" stroke="#6e6e78" stroke-width="0.80"/>
<line x1="634.2" y1="465.5" x2="634.0" y2="477.3" stroke="#6e6e78" stroke-width="0.80"/>
<line x1="642.8" y1="459.9" x2="642.6" y2="471.6" stroke="#6e6e78" stroke-width="0.80"/>
<polygon points="624.5,480.7 642.6,468.8 642.6,470.1 624.5,482.1" fill="#77777f"/>
<polygon points="623.5,483.4 643.6,471.1 643.5,473.4 623.5,486.8" fill="#11ee11"/>
<polygon points="622.8,486.9 644.9,472.2 644.9,475.3 622.8,490.1" fill="#f8f8f8" stroke="#9a9a9a" stroke-width="0.50"/>
<polygon points="623.5,453.5 644.1,440.5 643.8,456.7 623.5,469.8" fill="#d8d8f2"/>
<polygon points="636.4,448.7 638.8,447.1 638.7,451.3 636.3,452.9" fill="#ffff00"/>
<polygon points="623.5,453.5 629.8,449.5 629.7,465.8 623.5,469.8" fill="#ffff00"/>
<polygon points="624.6,456.1 628.7,453.5 628.7,463.3 624.6,465.9" fill="#dcdc80"/>
<line x1="624.6" y1="455.3" x2="624.6" y2="466.7" stroke="#6e6e78" stroke-width="0.80"/>
<line x1="634.3" y1="449.1" x2="634.2" y2="460.5" stroke="#6e6e78" stroke-width="0.80"/>
<line x1="643.1" y1="443.6" x2="642.9" y2="454.9" stroke="#6e6e78" stroke-width="0.80"/>
<polygon points="624.6,464.0 642.9,452.2 642.9,453.5 624.6,465.3" fill="#77777f"/>
<polygon points="623.5,466.6 643.9,454.5 643.8,456.7 623.5,469.8" fill="#11ee11"/>
<polygon points="622.8,470.0 645.2,455.5 645.2,458.5 622.8,473.1" fill="#f8f8f8" stroke="#9a9a9a" stroke-width="0.50"/>
<polygon points="623.6,436.7 644.4,424.0 644.1,440.5 623.5,453.5" fill="#d8d8f2"/>
<polygon points="636.5,432.1 639.0,430.6 639.0,434.9 636.5,436.4" fill="#ffff00"/>
<polygon points="623.6,436.7 629.9,432.8 629.8,449.5 623.5,453.5" fill="#ffff00"/>
<polygon points="624.6,439.5 628.8,436.9 628.8,446.9 624.6,449.5" fill="#dcdc80"/>
<line x1="624.6" y1="438.6" x2="624.6" y2="450.3" stroke="#6e6e78" stroke-width="0.80"/>
<line x1="634.5" y1="432.5" x2="634.4" y2="444.2" stroke="#6e6e78" stroke-width="0.80"/>
<line x1="643.3" y1="427.1" x2="643.1" y2="438.7" stroke="#6e6e78" stroke-width="0.80"/>
<polygon points="624.6,447.5 643.2,435.9 643.2,437.2 624.6,448.8" fill="#77777f"/>
<polygon points="623.5,450.1 644.1,438.2 644.1,440.5 623.5,453.5" fill="#11ee11"/>
<polygon points="622.8,453.6 645.5,439.3 645.5,442.4 622.8,456.7" fill="#f8f8f8" stroke="#9a9a9a" stroke-width="0.50"/>
<polygon points="623.6,418.3 644.7,405.8 644.4,424.0 623.6,436.7" fill="#d8d8f2"/>
<polygon points="636.8,414.2 639.3,412.7 639.2,417.4 636.7,418.9" fill="#ffff00"/>
<polygon points="623.6,418.3 630.0,414.5 629.9,432.8 623.6,436.7" fill="#ffff00"/>
<polygon points="624.6,421.4 628.9,418.8 628.9,429.8 624.6,432.4" fill="#dcdc80"/>
<line x1="624.7" y1="420.5" x2="624.6" y2="433.3" stroke="#6e6e78" stroke-width="0.80"/>
<line x1="634.7" y1="414.5" x2="634.5" y2="427.3" stroke="#6e6e78" stroke-width="0.80"/>
<line x1="643.6" y1="409.1" x2="643.4" y2="421.9" stroke="#6e6e78" stroke-width="0.80"/>
<polygon points="624.6,430.2 643.5,418.8 643.4,420.3 624.6,431.7" fill="#77777f"/>
<polygon points="623.6,433.1 644.4,421.4 644.4,424.0 623.6,436.7" fill="#11ee11"/>
<polygon points="622.8,436.8 645.9,422.7 645.8,426.1 622.8,440.3" fill="#f8f8f8" stroke="#9a9a9a" stroke-width="0.50"/>
<polygon points="623.6,398.8 645.1,386.5 644.7,405.8 623.6,418.3" fill="#d8d8f2"/>
<polygon points="637.0,395.0 639.5,393.5 639.4,398.6 636.9,400.1" fill="#ffff00"/>
<polygon points="623.6,398.8 630.1,395.0 630.0,414.5 623.6,418.3" fill="#ffff00"/>
<polygon points="624.7,402.1 629.0,399.6 629.0,411.3 624.7,413.8" fill="#dcdc80"/>
<line x1="624.7" y1="401.1" x2="624.7" y2="414.8" stroke="#6e6e78" stroke-width="0.80"/>
<line x1="634.8" y1="395.3" x2="634.7" y2="408.8" stroke="#6e6e78" stroke-width="0.80"/>
<line x1="644.0" y1="390.0" x2="643.7" y2="403.5" stroke="#6e6e78" stroke-width="0.80"/>
<polygon points="624.7,411.5 643.8,400.3 643.8,401.8 624.7,413.0" fill="#77777f"/>
<polygon points="623.6,414.4 644.8,403.1 644.7,405.8 623.6,418.3" fill="#11ee11"/>
<polygon points="622.8,418.4 646.2,404.5 646.1,408.1 622.8,422.0" fill="#f8f8f8" stroke="#9a9a9a" stroke-width="0.50"/>
<polygon points="623.6,378.5 645.4,366.5 645.1,386.5 623.6,398.8" fill="#d8d8f2"/>
<polygon points="637.2,375.1 639.8,373.6 639.7,378.9 637.1,380.3" fill="#ffff00"/>
<polygon points="623.6,378.5 630.3,374.9 630.1,395.0 623.6,398.8" fill="#ffff00"/>
<polygon points="624.7,382.0 629.1,379.6 629.1,391.7 624.7,394.1" fill="#dcdc80"/>
<line x1="624.7" y1="381.0" x2="624.7" y2="395.1" stroke="#6e6e78" stroke-width="0.80"/>
<line x1="635.0" y1="375.3" x2="634.9" y2="389.3" stroke="#6e6e78" stroke-width="0.80"/>
<line x1="644.3" y1="370.1" x2="644.1" y2="384.1" stroke="#6e6e78" stroke-width="0.80"/>
<polygon points="624.7,391.7 644.1,380.8 644.1,382.3 624.7,393.3" fill="#77777f"/>
<polygon points="623.6,394.8 645.1,383.7 645.1,386.5 623.6,398.8" fill="#11ee11"/>
<polygon points="622.8,398.8 646.6,385.2 646.5,389.0 622.8,402.6" fill="#f8f8f8" stroke="#9a9a9a" stroke-width="0.50"/>
<polygon points="623.7,358.4 645.8,346.7 645.4,366.5 623.6,378.5" fill="#d8d8f2"/>
<polygon points="637.4,355.1 640.0,353.7 640.0,358.9 637.4,360.3" fill="#ffff00"/>
<polygon points="623.7,358.4 630.4,354.9 630.3,374.9 623.6,378.5" fill="#ffff00"/>
<polygon points="624.8,361.9 629.3,359.5 629.2,371.5 624.7,373.9" fill="#dcdc80"/>
<line x1="624.8" y1="360.9" x2="624.7" y2="374.9" stroke="#6e6e78" stroke-width="0.80"/>
<line x1="635.2" y1="355.3" x2="635.1" y2="369.3" stroke="#6e6e78" stroke-width="0.80"/>
<line x1="644.6" y1="350.3" x2="644.4" y2="364.2" stroke="#6e6e78" stroke-width="0.80"/>
<polygon points="624.8,371.6 644.4,360.8 644.4,362.4 624.7,373.1" fill="#77777f"/>
<polygon points="623.6,374.6 645.5,363.8 645.4,366.5 623.6,378.5" fill="#11ee11"/>
<polygon points="622.8,378.6 646.9,365.3 646.9,369.0 622.8,382.3" fill="#f8f8f8" stroke="#9a9a9a" stroke-width="0.50"/>
<polygon points="623.7,338.3 646.1,326.9 645.8,346.7 623.7,358.4" fill="#d8d8f2"/>
<polygon points="637.7,335.2 640.3,333.8 640.2,339.0 637.6,340.4" fill="#ffff00"/>
<polygon points="623.7,338.3 630.5,334.8 630.4,354.9 623.7,358.4" fill="#ffff00"/>
<polygon points="624.8,341.8 629.4,339.4 629.3,351.5 624.8,353.9" fill="#dcdc80"/>
<line x1="624.8" y1="340.8" x2="624.8" y2="354.8" stroke="#6e6e78" stroke-width="0.80"/>
<line x1="635.4" y1="335.3" x2="635.3" y2="349.3" stroke="#6e6e78" stroke-width="0.80"/>
<line x1="645.0" y1="330.4" x2="644.7" y2="344.3" stroke="#6e6e78" stroke-width="0.80"/>
<polygon points="624.8,351.5 644.8,341.0 644.7,342.6 624.8,353.1" fill="#77777f"/>
<polygon points="623.7,354.4 645.8,344.0 645.8,346.7 623.7,358.4" fill="#11ee11"/>
<polygon points="622.8,358.5 647.3,345.5 647.2,349.2 622.8,362.2" fill="#f8f8f8" stroke="#9a9a9a" stroke-width="0.50"/>
<polygon points="623.7,318.9 646.4,307.7 646.1,326.9 623.7,338.3" fill="#d8d8f2"/>
<polygon points="637.9,315.8 640.6,314.5 640.5,319.5 637.8,320.8" fill="#ffff00"/>
<polygon points="623.7,318.9 630.6,315.5 630.5,334.8 623.7,338.3" fill="#ffff00"/>
<polygon points="624.9,322.2 629.5,320.0 629.4,331.6 624.8,333.9" fill="#dcdc80"/>
<line x1="624.9" y1="321.2" x2="624.8" y2="334.8" stroke="#6e6e78" stroke-width="0.80"/>
<line x1="635.6" y1="315.9" x2="635.5" y2="329.4" stroke="#6e6e78" stroke-width="0.80"/>
<line x1="645.3" y1="311.2" x2="645.1" y2="324.6" stroke="#6e6e78" stroke-width="0.80"/>
<polygon points="624.8,331.6 645.1,321.4 645.1,322.9 624.8,333.1" fill="#77777f"/>
<polygon points="623.7,334.5 646.1,324.2 646.1,326.9 623.7,338.3" fill="#11ee11"/>
<polygon points="622.9,338.3 647.7,325.7 647.6,329.3 622.9,342.0" fill="#f8f8f8" stroke="#9a9a9a" stroke-width="0.50"/>
<polygon points="623.7,297.1 646.8,286.4 646.4,307.7 623.7,318.9" fill="#d8d8f2"/>
<polygon points="638.1,294.8 640.9,293.5 640.8,299.1 638.1,300.4" fill="#ffff00"/>
<polygon points="623.7,297.1 630.8,293.9 630.6,315.5 623.7,318.9" fill="#ffff00"/>
<polygon points="624.9,301.0 629.6,298.8 629.5,311.8 624.9,314.0" fill="#dcdc80"/>
<line x1="624.9" y1="299.9" x2="624.9" y2="315.1" stroke="#6e6e78" stroke-width="0.80"/>
<line x1="635.8" y1="294.7" x2="635.7" y2="309.8" stroke="#6e6e78" stroke-width="0.80"/>
<line x1="645.6" y1="290.1" x2="645.4" y2="305.1" stroke="#6e6e78" stroke-width="0.80"/>
<polygon points="624.9,311.4 645.4,301.5 645.4,303.2 624.9,313.2" fill="#77777f"/>
<polygon points="623.7,314.6 646.5,304.8 646.4,307.7 623.7,318.9" fill="#11ee11"/>
<polygon points="622.9,318.8 648.0,306.6 648.0,310.5 622.9,322.9" fill="#f8f8f8" stroke="#9a9a9a" stroke-width="0.50"/>
<polygon points="623.7,289.5 646.9,278.9 646.8,287.3 623.7,298.1" fill="#f6f6f6" stroke="#999" stroke-width="0.40"/>
<polygon points="643.0,502.7 680.5,476.7 679.7,492.4 642.7,518.7" fill="#ffff00"/>
<polygon points="643.0,502.7 644.6,501.6 644.3,517.6 642.7,518.7" fill="#d4d400"/>
<polygon points="650.4,497.6 650.8,497.3 650.4,513.3 650.0,513.5" fill="#b8b800"/>
<polygon points="675.0,480.4 675.4,480.2 674.7,495.9 674.3,496.2" fill="#b8b800"/>
<polygon points="654.5,495.5 657.6,493.4 657.4,498.6 654.4,500.8" fill="#5c5c5c"/>
<polygon points="672.4,483.5 674.6,482.0 674.4,487.0 672.2,488.6" fill="#ff00ff"/>
<polygon points="650.6,503.7 674.8,486.8 674.6,489.3 650.5,506.3" fill="#f4f4f4" stroke="#9a9a9a" stroke-width="0.40"/>
<polygon points="650.5,506.3 674.6,489.3 674.4,494.0 650.4,511.0" fill="#1a1a1a"/>
<polygon points="650.4,510.1 674.5,493.1 674.4,494.9 650.4,512.0" fill="#9a9a9a"/>
<polygon points="641.4,519.0 679.7,491.7 679.6,493.9 641.4,521.2" fill="#11ee11"/>
<polygon points="643.3,488.3 681.1,462.5 680.5,476.7 643.0,502.7" fill="#ffff00"/>
<polygon points="643.3,488.3 644.8,487.2 644.6,501.6 643.0,502.7" fill="#d4d400"/>
<polygon points="650.7,483.2 651.1,483.0 650.8,497.3 650.4,497.6" fill="#b8b800"/>
<polygon points="675.6,466.3 676.0,466.0 675.4,480.2 675.0,480.4" fill="#b8b800"/>
<polygon points="654.9,481.1 658.0,479.0 657.9,483.7 654.8,485.8" fill="#5c5c5c"/>
<polygon points="673.0,469.2 675.2,467.7 675.0,472.2 672.8,473.7" fill="#ff00ff"/>
<polygon points="651.0,488.8 675.4,472.0 675.3,474.2 650.9,491.0" fill="#f4f4f4" stroke="#9a9a9a" stroke-width="0.40"/>
<polygon points="650.9,491.0 675.3,474.2 675.1,478.5 650.8,495.3" fill="#1a1a1a"/>
<polygon points="650.8,494.5 675.2,477.6 675.1,479.3 650.8,496.2" fill="#9a9a9a"/>
<polygon points="641.7,503.1 680.5,476.1 680.4,478.1 641.6,505.1" fill="#11ee11"/>
<polygon points="643.5,473.4 681.8,448.0 681.1,462.5 643.3,488.3" fill="#ffff00"/>
<polygon points="643.5,473.4 645.1,472.4 644.8,487.2 643.3,488.3" fill="#d4d400"/>
<polygon points="651.1,468.4 651.4,468.2 651.1,483.0 650.7,483.2" fill="#b8b800"/>
<polygon points="676.3,451.7 676.7,451.4 676.0,466.0 675.6,466.3" fill="#b8b800"/>
<polygon points="655.3,466.3 658.4,464.3 658.3,469.2 655.2,471.2" fill="#5c5c5c"/>
<polygon points="673.6,454.6 675.9,453.1 675.7,457.8 673.4,459.3" fill="#ff00ff"/>
<polygon points="651.3,474.1 676.0,457.5 675.9,459.9 651.2,476.5" fill="#f4f4f4" stroke="#9a9a9a" stroke-width="0.40"/>
<polygon points="651.2,476.5 675.9,459.9 675.7,464.2 651.1,480.9" fill="#1a1a1a"/>
<polygon points="651.2,480.0 675.8,463.4 675.7,465.1 651.1,481.8" fill="#9a9a9a"/>
<polygon points="641.9,488.6 681.2,462.0 681.1,464.0 641.9,490.7" fill="#11ee11"/>
<polygon points="643.8,456.7 682.6,431.6 681.8,448.0 643.5,473.4" fill="#ffff00"/>
<polygon points="643.8,456.7 645.4,455.7 645.1,472.4 643.5,473.4" fill="#d4d400"/>
<polygon points="651.4,451.8 651.8,451.5 651.4,468.2 651.1,468.4" fill="#b8b800"/>
<polygon points="677.0,435.2 677.4,435.0 676.7,451.4 676.3,451.7" fill="#b8b800"/>
<polygon points="655.8,449.8 658.9,447.8 658.8,453.3 655.6,455.3" fill="#5c5c5c"/>
<polygon points="674.3,438.3 676.6,436.8 676.3,442.1 674.1,443.6" fill="#ff00ff"/>
<polygon points="651.7,458.2 676.7,441.9 676.6,444.5 651.6,460.9" fill="#f4f4f4" stroke="#9a9a9a" stroke-width="0.40"/>
<polygon points="651.6,460.9 676.6,444.5 676.4,449.4 651.5,465.9" fill="#1a1a1a"/>
<polygon points="651.5,464.9 676.4,448.4 676.3,450.4 651.5,466.9" fill="#9a9a9a"/>
<polygon points="642.1,473.7 681.9,447.3 681.7,449.6 642.1,476.0" fill="#11ee11"/>
<polygon points="644.1,440.5 683.4,415.8 682.6,431.6 643.8,456.7" fill="#ffff00"/>
<polygon points="644.1,440.5 645.7,439.5 645.4,455.7 643.8,456.7" fill="#d4d400"/>
<polygon points="651.8,435.6 652.2,435.4 651.8,451.5 651.4,451.8" fill="#b8b800"/>
<polygon points="677.7,419.4 678.1,419.1 677.4,435.0 677.0,435.2" fill="#b8b800"/>
<polygon points="656.2,433.7 659.4,431.7 659.2,437.0 656.1,439.0" fill="#5c5c5c"/>
<polygon points="675.0,422.3 677.3,420.9 677.0,426.0 674.7,427.5" fill="#ff00ff"/>
<polygon points="652.1,441.9 677.4,425.8 677.3,428.3 652.0,444.5" fill="#f4f4f4" stroke="#9a9a9a" stroke-width="0.40"/>
<polygon points="652.0,444.5 677.3,428.3 677.1,433.0 651.9,449.3" fill="#1a1a1a"/>
<polygon points="651.9,448.3 677.1,432.1 677.1,434.0 651.9,450.2" fill="#9a9a9a"/>
<polygon points="642.4,457.0 682.6,431.0 682.5,433.2 642.4,459.2" fill="#11ee11"/>
<polygon points="644.4,424.0 684.1,399.6 683.4,415.8 644.1,440.5" fill="#ffff00"/>
<polygon points="644.4,424.0 646.1,422.9 645.7,439.5 644.1,440.5" fill="#d4d400"/>
<polygon points="652.2,419.2 652.6,418.9 652.2,435.4 651.8,435.6" fill="#b8b800"/>
<polygon points="678.4,403.1 678.8,402.9 678.1,419.1 677.7,419.4" fill="#b8b800"/>
<polygon points="656.7,417.3 659.9,415.3 659.7,420.7 656.5,422.7" fill="#5c5c5c"/>
<polygon points="675.6,406.1 677.9,404.7 677.7,409.9 675.4,411.3" fill="#ff00ff"/>
<polygon points="652.5,425.6 678.1,409.7 678.0,412.3 652.4,428.2" fill="#f4f4f4" stroke="#9a9a9a" stroke-width="0.40"/>
<polygon points="652.4,428.2 678.0,412.3 677.8,417.1 652.3,433.1" fill="#1a1a1a"/>
<polygon points="652.3,432.1 677.8,416.1 677.7,418.1 652.3,434.1" fill="#9a9a9a"/>
<polygon points="642.7,440.8 683.4,415.1 683.3,417.4 642.6,443.0" fill="#11ee11"/>
<polygon points="644.7,405.8 685.0,381.9 684.1,399.6 644.4,424.0" fill="#ffff00"/>
<polygon points="644.7,405.8 646.4,404.8 646.1,422.9 644.4,424.0" fill="#d4d400"/>
<polygon points="652.6,401.1 653.1,400.8 652.6,418.9 652.2,419.2" fill="#b8b800"/>
<polygon points="679.2,385.3 679.6,385.1 678.8,402.9 678.4,403.1" fill="#b8b800"/>
<polygon points="657.1,399.3 660.4,397.4 660.2,403.3 657.0,405.3" fill="#5c5c5c"/>
<polygon points="676.4,388.4 678.7,387.0 678.5,392.7 676.1,394.2" fill="#ff00ff"/>
<polygon points="652.9,408.1 678.9,392.5 678.7,395.4 652.8,411.0" fill="#f4f4f4" stroke="#9a9a9a" stroke-width="0.40"/>
<polygon points="652.8,411.0 678.7,395.4 678.5,400.7 652.7,416.4" fill="#1a1a1a"/>
<polygon points="652.7,415.3 678.5,399.6 678.5,401.7 652.7,417.5" fill="#9a9a9a"/>
<polygon points="642.9,424.1 684.2,398.9 684.1,401.4 642.9,426.6" fill="#11ee11"/>
<polygon points="645.1,386.5 685.9,363.1 685.0,381.9 644.7,405.8" fill="#ffff00"/>
<polygon points="645.1,386.5 646.8,385.5 646.4,404.8 644.7,405.8" fill="#d4d400"/>
<polygon points="653.1,381.9 653.5,381.6 653.1,400.8 652.6,401.1" fill="#b8b800"/>
<polygon points="680.0,366.5 680.4,366.3 679.6,385.1 679.2,385.3" fill="#b8b800"/>
<polygon points="657.7,380.2 661.0,378.3 660.8,384.7 657.5,386.6" fill="#5c5c5c"/>
<polygon points="677.1,369.6 679.5,368.2 679.3,374.3 676.9,375.7" fill="#ff00ff"/>
<polygon points="653.3,389.4 679.7,374.1 679.5,377.1 653.3,392.4" fill="#f4f4f4" stroke="#9a9a9a" stroke-width="0.40"/>
<polygon points="653.3,392.4 679.5,377.1 679.3,382.7 653.1,398.2" fill="#1a1a1a"/>
<polygon points="653.1,397.0 679.3,381.6 679.2,383.8 653.1,399.3" fill="#9a9a9a"/>
<polygon points="643.2,405.9 685.0,381.1 684.9,383.7 643.2,408.5" fill="#11ee11"/>
<polygon points="645.4,366.5 686.8,343.7 685.9,363.1 645.1,386.5" fill="#ffff00"/>
<polygon points="645.4,366.5 647.1,365.6 646.8,385.5 645.1,386.5" fill="#d4d400"/>
<polygon points="653.6,362.0 654.0,361.8 653.5,381.6 653.1,381.9" fill="#b8b800"/>
<polygon points="680.8,347.0 681.2,346.8 680.4,366.3 680.0,366.5" fill="#b8b800"/>
<polygon points="658.2,360.4 661.6,358.6 661.4,365.2 658.0,367.0" fill="#5c5c5c"/>
<polygon points="678.0,350.1 680.4,348.8 680.1,355.1 677.7,356.4" fill="#ff00ff"/>
<polygon points="653.8,369.8 680.5,354.8 680.4,358.0 653.7,373.0" fill="#f4f4f4" stroke="#9a9a9a" stroke-width="0.40"/>
<polygon points="653.7,373.0 680.4,358.0 680.1,363.8 653.6,378.9" fill="#1a1a1a"/>
<polygon points="653.6,377.7 680.2,362.6 680.1,364.9 653.6,380.1" fill="#9a9a9a"/>
<polygon points="643.6,386.6 685.9,362.3 685.8,365.0 643.5,389.3" fill="#11ee11"/>
<polygon points="645.8,346.7 687.7,324.4 686.8,343.7 645.4,366.5" fill="#ffff00"/>
<polygon points="645.8,346.7 647.5,345.8 647.1,365.6 645.4,366.5" fill="#d4d400"/>
<polygon points="654.0,342.3 654.5,342.1 654.0,361.8 653.6,362.0" fill="#b8b800"/>
<polygon points="681.7,327.6 682.1,327.4 681.2,346.8 680.8,347.0" fill="#b8b800"/>
<polygon points="658.7,340.8 662.1,339.0 661.9,345.5 658.5,347.3" fill="#5c5c5c"/>
<polygon points="678.8,330.7 681.2,329.4 680.9,335.7 678.5,337.0" fill="#ff00ff"/>
<polygon points="654.3,350.0 681.3,335.4 681.2,338.5 654.2,353.2" fill="#f4f4f4" stroke="#9a9a9a" stroke-width="0.40"/>
<polygon points="654.2,353.2 681.2,338.5 680.9,344.3 654.1,359.1" fill="#1a1a1a"/>
<polygon points="654.1,357.9 681.0,343.2 680.9,345.5 654.0,360.2" fill="#9a9a9a"/>
<polygon points="643.9,366.6 686.8,342.9 686.7,345.6 643.8,369.3" fill="#11ee11"/>
<polygon points="646.1,326.9 688.6,305.2 687.7,324.4 645.8,346.7" fill="#ffff00"/>
<polygon points="646.1,326.9 647.9,326.0 647.5,345.8 645.8,346.7" fill="#d4d400"/>
<polygon points="654.5,322.6 654.9,322.4 654.5,342.1 654.0,342.3" fill="#b8b800"/>
<polygon points="682.5,308.3 682.9,308.1 682.1,327.4 681.7,327.6" fill="#b8b800"/>
<polygon points="659.3,321.1 662.7,319.4 662.5,325.9 659.1,327.7" fill="#5c5c5c"/>
<polygon points="679.6,311.4 682.0,310.1 681.8,316.3 679.3,317.6" fill="#ff00ff"/>
<polygon points="654.7,330.3 682.2,316.1 682.0,319.2 654.7,333.5" fill="#f4f4f4" stroke="#9a9a9a" stroke-width="0.40"/>
<polygon points="654.7,333.5 682.0,319.2 681.8,325.0 654.5,339.4" fill="#1a1a1a"/>
<polygon points="654.6,338.2 681.8,323.8 681.7,326.1 654.5,340.5" fill="#9a9a9a"/>
<polygon points="644.2,346.7 687.8,323.7 687.6,326.3 644.2,349.5" fill="#11ee11"/>
<polygon points="646.4,307.7 689.5,286.7 688.6,305.2 646.1,326.9" fill="#ffff00"/>
<polygon points="646.4,307.7 648.2,306.9 647.9,326.0 646.1,326.9" fill="#d4d400"/>
<polygon points="654.9,303.6 655.4,303.4 654.9,322.4 654.5,322.6" fill="#b8b800"/>
<polygon points="683.3,289.7 683.7,289.5 682.9,308.1 682.5,308.3" fill="#b8b800"/>
<polygon points="659.8,302.2 663.3,300.5 663.1,306.7 659.6,308.5" fill="#5c5c5c"/>
<polygon points="680.3,292.6 682.8,291.4 682.6,297.4 680.1,298.7" fill="#ff00ff"/>
<polygon points="655.2,311.0 683.0,297.2 682.9,300.2 655.1,314.1" fill="#f4f4f4" stroke="#9a9a9a" stroke-width="0.40"/>
<polygon points="655.1,314.1 682.9,300.2 682.6,305.7 655.0,319.7" fill="#1a1a1a"/>
<polygon points="655.0,318.6 682.7,304.6 682.6,306.8 655.0,320.9" fill="#9a9a9a"/>
<polygon points="644.5,326.9 688.7,304.5 688.6,307.0 644.5,329.6" fill="#11ee11"/>
<polygon points="646.8,286.4 690.5,266.0 689.5,286.7 646.4,307.7" fill="#ffff00"/>
<polygon points="646.8,286.4 648.6,285.5 648.2,306.9 646.4,307.7" fill="#d4d400"/>
<polygon points="655.4,282.3 655.9,282.1 655.4,303.4 654.9,303.6" fill="#b8b800"/>
<polygon points="684.2,268.9 684.6,268.7 683.7,289.5 683.3,289.7" fill="#b8b800"/>
<polygon points="660.3,281.1 663.9,279.5 663.7,286.5 660.1,288.2" fill="#5c5c5c"/>
<polygon points="681.2,272.0 683.7,270.8 683.4,277.5 680.9,278.7" fill="#ff00ff"/>
<polygon points="655.7,290.7 683.9,277.3 683.7,280.6 655.6,294.1" fill="#f4f4f4" stroke="#9a9a9a" stroke-width="0.40"/>
<polygon points="655.6,294.1 683.7,280.6 683.4,286.8 655.5,300.4" fill="#1a1a1a"/>
<polygon points="655.5,299.2 683.5,285.6 683.4,288.1 655.4,301.7" fill="#9a9a9a"/>
<polygon points="644.9,307.7 689.6,285.9 689.4,288.7 644.8,310.6" fill="#11ee11"/>
<polygon points="680.5,476.7 692.9,468.0 692.0,483.6 679.7,492.4" fill="#d8d8f2"/>
<polygon points="681.3,479.1 686.6,475.5 686.3,481.0 681.0,484.6" fill="#ff00ff"/>
<line x1="681.0" y1="478.6" x2="680.4" y2="489.6" stroke="#6e6e78" stroke-width="0.80"/>
<line x1="686.8" y1="474.5" x2="686.3" y2="485.5" stroke="#6e6e78" stroke-width="0.80"/>
<line x1="692.1" y1="470.8" x2="691.5" y2="481.7" stroke="#6e6e78" stroke-width="0.80"/>
<polygon points="680.6,486.9 691.7,479.1 691.6,480.3 680.5,488.2" fill="#77777f"/>
<polygon points="679.9,489.2 692.1,481.4 692.0,483.6 679.7,492.4" fill="#11ee11"/>
<polygon points="681.1,462.5 693.7,454.0 692.9,468.0 680.5,476.7" fill="#d8d8f2"/>
<polygon points="682.0,464.7 687.3,461.1 687.1,466.0 681.8,469.6" fill="#ff00ff"/>
<line x1="681.7" y1="464.2" x2="681.2" y2="474.1" stroke="#6e6e78" stroke-width="0.80"/>
<line x1="687.6" y1="460.2" x2="687.1" y2="470.0" stroke="#6e6e78" stroke-width="0.80"/>
<line x1="693.0" y1="456.5" x2="692.4" y2="466.4" stroke="#6e6e78" stroke-width="0.80"/>
<polygon points="681.3,471.7 692.5,464.0 692.5,465.1 681.2,472.9" fill="#77777f"/>
<polygon points="680.6,473.9 693.0,466.1 692.9,468.0 680.5,476.7" fill="#11ee11"/>
<polygon points="679.8,476.8 694.1,466.9 694.0,469.5 679.7,479.5" fill="#f8f8f8" stroke="#9a9a9a" stroke-width="0.50"/>
<polygon points="681.8,448.0 694.5,439.5 693.7,454.0 681.1,462.5" fill="#d8d8f2"/>
<polygon points="682.7,450.2 688.1,446.7 687.8,451.7 682.5,455.3" fill="#ff00ff"/>
<line x1="682.4" y1="449.8" x2="681.9" y2="459.9" stroke="#6e6e78" stroke-width="0.80"/>
<line x1="688.4" y1="445.8" x2="687.8" y2="455.9" stroke="#6e6e78" stroke-width="0.80"/>
<line x1="693.8" y1="442.1" x2="693.2" y2="452.3" stroke="#6e6e78" stroke-width="0.80"/>
<polygon points="682.0,457.5 693.3,449.8 693.3,451.0 681.9,458.6" fill="#77777f"/>
<polygon points="681.3,459.7 693.8,452.0 693.7,454.0 681.1,462.5" fill="#11ee11"/>
<polygon points="680.5,462.7 695.0,452.9 694.8,455.6 680.4,465.4" fill="#f8f8f8" stroke="#9a9a9a" stroke-width="0.50"/>
<polygon points="682.6,431.6 695.5,423.3 694.5,439.5 681.8,448.0" fill="#d8d8f2"/>
<polygon points="683.5,434.3 688.9,430.7 688.6,436.4 683.2,440.0" fill="#ff00ff"/>
<line x1="683.1" y1="433.7" x2="682.6" y2="445.1" stroke="#6e6e78" stroke-width="0.80"/>
<line x1="689.2" y1="429.7" x2="688.6" y2="441.1" stroke="#6e6e78" stroke-width="0.80"/>
<line x1="694.7" y1="426.2" x2="694.0" y2="437.5" stroke="#6e6e78" stroke-width="0.80"/>
<polygon points="682.7,442.4 694.2,434.8 694.1,436.1 682.7,443.7" fill="#77777f"/>
<polygon points="682.0,444.7 694.7,437.3 694.5,439.5 681.8,448.0" fill="#11ee11"/>
<polygon points="681.2,448.1 695.8,438.4 695.6,441.4 681.1,451.2" fill="#f8f8f8" stroke="#9a9a9a" stroke-width="0.50"/>
<polygon points="683.4,415.8 696.4,407.6 695.5,423.3 682.6,431.6" fill="#d8d8f2"/>
<polygon points="684.3,418.3 689.7,414.8 689.5,420.4 684.0,423.9" fill="#ff00ff"/>
<line x1="683.9" y1="417.8" x2="683.4" y2="428.8" stroke="#6e6e78" stroke-width="0.80"/>
<line x1="690.0" y1="413.9" x2="689.5" y2="424.9" stroke="#6e6e78" stroke-width="0.80"/>
<line x1="695.6" y1="410.4" x2="695.0" y2="421.4" stroke="#6e6e78" stroke-width="0.80"/>
<polygon points="683.5,426.2 695.1,418.7 695.0,420.0 683.4,427.4" fill="#77777f"/>
<polygon points="682.8,428.5 695.6,421.1 695.5,423.3 682.6,431.6" fill="#11ee11"/>
<polygon points="682.0,431.7 696.8,422.2 696.6,425.1 681.8,434.7" fill="#f8f8f8" stroke="#9a9a9a" stroke-width="0.50"/>
<polygon points="684.1,399.6 697.3,391.6 696.4,407.6 683.4,415.8" fill="#d8d8f2"/>
<polygon points="685.0,402.2 690.6,398.8 690.3,404.5 684.8,407.9" fill="#ff00ff"/>
<line x1="684.7" y1="401.7" x2="684.1" y2="413.0" stroke="#6e6e78" stroke-width="0.80"/>
<line x1="690.9" y1="397.8" x2="690.3" y2="409.1" stroke="#6e6e78" stroke-width="0.80"/>
<line x1="696.5" y1="394.4" x2="695.9" y2="405.6" stroke="#6e6e78" stroke-width="0.80"/>
<polygon points="684.3,410.2 696.0,402.9 695.9,404.2 684.2,411.5" fill="#77777f"/>
<polygon points="683.5,412.6 696.5,405.4 696.4,407.6 683.4,415.8" fill="#11ee11"/>
<polygon points="682.7,415.9 697.7,406.5 697.5,409.5 682.6,418.9" fill="#f8f8f8" stroke="#9a9a9a" stroke-width="0.50"/>
<polygon points="685.0,381.9 698.3,374.0 697.3,391.6 684.1,399.6" fill="#d8d8f2"/>
<polygon points="685.9,384.8 691.5,381.5 691.2,387.7 685.6,391.1" fill="#ff00ff"/>
<line x1="685.5" y1="384.2" x2="684.9" y2="396.6" stroke="#6e6e78" stroke-width="0.80"/>
<line x1="691.8" y1="380.4" x2="691.2" y2="392.8" stroke="#6e6e78" stroke-width="0.80"/>
<line x1="697.5" y1="377.0" x2="696.8" y2="389.4" stroke="#6e6e78" stroke-width="0.80"/>
<polygon points="685.1,393.6 697.0,386.4 696.9,387.8 685.0,395.0" fill="#77777f"/>
<polygon points="684.3,396.1 697.4,389.1 697.3,391.6 684.1,399.6" fill="#11ee11"/>
<polygon points="683.5,399.7 698.6,390.4 698.4,393.7 683.3,403.0" fill="#f8f8f8" stroke="#9a9a9a" stroke-width="0.50"/>
<polygon points="685.9,363.1 699.4,355.4 698.3,374.0 685.0,381.9" fill="#d8d8f2"/>
<polygon points="686.8,366.3 692.5,363.0 692.1,369.6 686.5,372.9" fill="#ff00ff"/>
<line x1="686.4" y1="365.6" x2="685.8" y2="378.7" stroke="#6e6e78" stroke-width="0.80"/>
<line x1="692.8" y1="361.9" x2="692.1" y2="375.0" stroke="#6e6e78" stroke-width="0.80"/>
<line x1="698.5" y1="358.6" x2="697.8" y2="371.6" stroke="#6e6e78" stroke-width="0.80"/>
<polygon points="685.9,375.5 698.0,368.5 697.9,370.0 685.9,377.0" fill="#77777f"/>
<polygon points="685.2,378.2 698.5,371.4 698.3,374.0 685.0,381.9" fill="#11ee11"/>
<polygon points="684.3,381.9 699.6,372.8 699.4,376.3 684.2,385.4" fill="#f8f8f8" stroke="#9a9a9a" stroke-width="0.50"/>
<polygon points="686.8,343.7 700.5,336.1 699.4,355.4 685.9,363.1" fill="#d8d8f2"/>
<polygon points="687.7,347.0 693.5,343.8 693.1,350.6 687.4,353.8" fill="#ff00ff"/>
<line x1="687.4" y1="346.2" x2="686.7" y2="359.8" stroke="#6e6e78" stroke-width="0.80"/>
<line x1="693.8" y1="342.7" x2="693.1" y2="356.2" stroke="#6e6e78" stroke-width="0.80"/>
<line x1="699.6" y1="339.4" x2="698.9" y2="352.9" stroke="#6e6e78" stroke-width="0.80"/>
<polygon points="686.9,356.6 699.1,349.7 699.0,351.2 686.8,358.1" fill="#77777f"/>
<polygon points="686.1,359.3 699.5,352.7 699.4,355.4 685.9,363.1" fill="#11ee11"/>
<polygon points="685.2,363.1 700.7,354.2 700.5,357.8 685.0,366.7" fill="#f8f8f8" stroke="#9a9a9a" stroke-width="0.50"/>
<polygon points="687.7,324.4 701.6,317.1 700.5,336.1 686.8,343.7" fill="#d8d8f2"/>
<polygon points="688.7,327.7 694.5,324.6 694.1,331.3 688.3,334.5" fill="#ff00ff"/>
<line x1="688.3" y1="327.0" x2="687.6" y2="340.4" stroke="#6e6e78" stroke-width="0.80"/>
<line x1="694.8" y1="323.5" x2="694.1" y2="336.9" stroke="#6e6e78" stroke-width="0.80"/>
<line x1="700.7" y1="320.3" x2="700.0" y2="333.7" stroke="#6e6e78" stroke-width="0.80"/>
<polygon points="687.8,337.2 700.1,330.5 700.1,332.0 687.7,338.7" fill="#77777f"/>
<polygon points="687.0,339.9 700.6,333.5 700.5,336.1 686.8,343.7" fill="#11ee11"/>
<polygon points="686.1,343.7 701.8,335.0 701.6,338.6 686.0,347.3" fill="#f8f8f8" stroke="#9a9a9a" stroke-width="0.50"/>
<polygon points="688.6,305.2 702.7,298.0 701.6,317.1 687.7,324.4" fill="#d8d8f2"/>
<polygon points="689.6,308.5 695.5,305.5 695.2,312.2 689.3,315.3" fill="#ff00ff"/>
<line x1="689.2" y1="307.7" x2="688.6" y2="321.2" stroke="#6e6e78" stroke-width="0.80"/>
<line x1="695.8" y1="304.4" x2="695.1" y2="317.8" stroke="#6e6e78" stroke-width="0.80"/>
<line x1="701.8" y1="301.3" x2="701.1" y2="314.6" stroke="#6e6e78" stroke-width="0.80"/>
<polygon points="688.7,318.0 701.2,311.4 701.1,312.9 688.6,319.5" fill="#77777f"/>
<polygon points="687.9,320.6 701.7,314.5 701.6,317.1 687.7,324.4" fill="#11ee11"/>
<polygon points="687.0,324.4 703.0,316.0 702.7,319.6 686.9,328.0" fill="#f8f8f8" stroke="#9a9a9a" stroke-width="0.50"/>
<polygon points="689.5,286.7 703.7,279.7 702.7,298.0 688.6,305.2" fill="#d8d8f2"/>
<polygon points="690.5,289.8 696.5,286.9 696.1,293.4 690.2,296.3" fill="#ff00ff"/>
<line x1="690.1" y1="289.1" x2="689.5" y2="302.1" stroke="#6e6e78" stroke-width="0.80"/>
<line x1="696.8" y1="285.8" x2="696.1" y2="298.7" stroke="#6e6e78" stroke-width="0.80"/>
<line x1="702.9" y1="282.8" x2="702.1" y2="295.7" stroke="#6e6e78" stroke-width="0.80"/>
<polygon points="689.6,299.0 702.3,292.6 702.2,294.0 689.6,300.4" fill="#77777f"/>
<polygon points="688.8,301.5 702.8,295.5 702.7,298.0 688.6,305.2" fill="#11ee11"/>
<polygon points="687.9,305.2 704.1,297.0 703.9,300.4 687.8,308.7" fill="#f8f8f8" stroke="#9a9a9a" stroke-width="0.50"/>
<polygon points="690.5,266.0 704.9,259.3 703.7,279.7 689.5,286.7" fill="#d8d8f2"/>
<polygon points="691.5,269.6 697.5,266.8 697.2,274.0 691.1,276.9" fill="#ff00ff"/>
<line x1="691.1" y1="268.8" x2="690.4" y2="283.3" stroke="#6e6e78" stroke-width="0.80"/>
<line x1="697.9" y1="265.6" x2="697.1" y2="280.0" stroke="#6e6e78" stroke-width="0.80"/>
<line x1="704.0" y1="262.7" x2="703.2" y2="277.0" stroke="#6e6e78" stroke-width="0.80"/>
<polygon points="690.6,279.8 703.4,273.6 703.3,275.2 690.5,281.4" fill="#77777f"/>
<polygon points="689.7,282.6 703.9,276.9 703.7,279.7 689.5,286.7" fill="#11ee11"/>
<polygon points="688.8,286.6 705.1,278.6 704.9,282.5 688.6,290.5" fill="#f8f8f8" stroke="#9a9a9a" stroke-width="0.50"/>
<polygon points="690.9,258.7 705.3,252.1 704.8,260.2 690.5,266.9" fill="#f6f6f6" stroke="#999" stroke-width="0.40"/>
<polygon points="527.9,339.8 536.0,336.0 551.6,583.6 549.8,582.7" fill="#eeeeee" stroke="#8a8a8a" stroke-width="0.50"/>
<polygon points="704.7,262.8 708.0,263.8 695.1,479.5 692.0,483.6" fill="#e6e6e6" stroke="#8a8a8a" stroke-width="0.50"/>
<polygon points="552.9,577.2 571.3,564.2 571.5,569.4 553.2,582.4" fill="#ff00ff"/>
<polygon points="624.9,526.3 642.1,514.1 642.1,519.2 624.8,531.4" fill="#ff00ff"/>
<polygon points="681.2,486.5 691.7,479.1 691.4,484.0 681.0,491.5" fill="#ff00ff"/>
<polygon points="486.5,305.0 490.0,301.0 502.0,297.0 506.0,297.0 522.0,290.0 522.0,284.0 539.0,277.5 545.0,270.0 587.5,255.4 604.8,247.7 614.0,249.0 632.6,242.5 635.5,237.5 644.6,234.2 701.0,253.7 705.0,256.0 705.0,260.0 691.0,266.0 636.5,283.7 558.0,323.8 558.0,331.0 538.0,339.0 536.0,338.0" fill="#f4f4f4" stroke="#9a9a9a" stroke-width="0.60"/>
<line x1="503.3" y1="314.7" x2="544.6" y2="297.9" stroke="#9a9a9a" stroke-width="2.20"/>
<line x1="503.3" y1="314.7" x2="544.6" y2="297.9" stroke="#11ee11" stroke-width="1.30"/>
<line x1="508.0" y1="298.3" x2="522.5" y2="306.0" stroke="#9a9a9a" stroke-width="2.20"/>
<line x1="508.0" y1="298.3" x2="522.5" y2="306.0" stroke="#d000d0" stroke-width="1.30"/>
<line x1="523.4" y1="307.0" x2="540.0" y2="315.5" stroke="#9a9a9a" stroke-width="2.20"/>
<line x1="523.4" y1="307.0" x2="540.0" y2="315.5" stroke="#11ee11" stroke-width="1.30"/>
<line x1="540.0" y1="315.5" x2="556.1" y2="323.8" stroke="#9a9a9a" stroke-width="2.20"/>
<line x1="540.0" y1="315.5" x2="556.1" y2="323.8" stroke="#d000d0" stroke-width="1.30"/>
<line x1="531.1" y1="285.4" x2="560.0" y2="300.5" stroke="#9a9a9a" stroke-width="2.20"/>
<line x1="531.1" y1="285.4" x2="560.0" y2="300.5" stroke="#11ee11" stroke-width="1.30"/>
<line x1="560.0" y1="300.5" x2="568.0" y2="305.0" stroke="#9a9a9a" stroke-width="2.20"/>
<line x1="560.0" y1="300.5" x2="568.0" y2="305.0" stroke="#d000d0" stroke-width="1.30"/>
<line x1="568.0" y1="305.0" x2="574.3" y2="313.2" stroke="#9a9a9a" stroke-width="2.20"/>
<line x1="568.0" y1="305.0" x2="574.3" y2="313.2" stroke="#11ee11" stroke-width="1.30"/>
<line x1="533.0" y1="286.3" x2="550.3" y2="279.1" stroke="#9a9a9a" stroke-width="2.20"/>
<line x1="533.0" y1="286.3" x2="550.3" y2="279.1" stroke="#11ee11" stroke-width="1.30"/>
<line x1="550.3" y1="278.6" x2="566.7" y2="285.4" stroke="#9a9a9a" stroke-width="2.20"/>
<line x1="550.3" y1="278.6" x2="566.7" y2="285.4" stroke="#d000d0" stroke-width="1.30"/>
<line x1="571.5" y1="284.4" x2="585.0" y2="278.6" stroke="#9a9a9a" stroke-width="2.20"/>
<line x1="571.5" y1="284.4" x2="585.0" y2="278.6" stroke="#11ee11" stroke-width="1.30"/>
<line x1="573.4" y1="284.4" x2="585.0" y2="291.1" stroke="#9a9a9a" stroke-width="2.20"/>
<line x1="573.4" y1="284.4" x2="585.0" y2="291.1" stroke="#11ee11" stroke-width="1.30"/>
<line x1="574.3" y1="313.2" x2="585.0" y2="307.5" stroke="#9a9a9a" stroke-width="2.20"/>
<line x1="574.3" y1="313.2" x2="585.0" y2="307.5" stroke="#11ee11" stroke-width="1.30"/>
<line x1="587.5" y1="255.4" x2="604.8" y2="247.7" stroke="#9a9a9a" stroke-width="2.20"/>
<line x1="587.5" y1="255.4" x2="604.8" y2="247.7" stroke="#11ee11" stroke-width="1.30"/>
<line x1="644.6" y1="235.6" x2="701.0" y2="253.7" stroke="#9a9a9a" stroke-width="2.20"/>
<line x1="644.6" y1="235.6" x2="701.0" y2="253.7" stroke="#d000d0" stroke-width="1.30"/>
<line x1="634.6" y1="242.4" x2="648.0" y2="248.7" stroke="#9a9a9a" stroke-width="2.20"/>
<line x1="634.6" y1="242.4" x2="648.0" y2="248.7" stroke="#d000d0" stroke-width="1.30"/>
<line x1="648.0" y1="248.7" x2="662.0" y2="253.9" stroke="#9a9a9a" stroke-width="2.20"/>
<line x1="648.0" y1="248.7" x2="662.0" y2="253.9" stroke="#11ee11" stroke-width="1.30"/>
<line x1="662.0" y1="253.9" x2="675.0" y2="258.7" stroke="#9a9a9a" stroke-width="2.20"/>
<line x1="662.0" y1="253.9" x2="675.0" y2="258.7" stroke="#d000d0" stroke-width="1.30"/>
<line x1="675.0" y1="258.7" x2="690.0" y2="264.0" stroke="#9a9a9a" stroke-width="2.20"/>
<line x1="675.0" y1="258.7" x2="690.0" y2="264.0" stroke="#11ee11" stroke-width="1.30"/>
<line x1="631.7" y1="256.8" x2="663.4" y2="243.4" stroke="#9a9a9a" stroke-width="2.20"/>
<line x1="631.7" y1="256.8" x2="663.4" y2="243.4" stroke="#11ee11" stroke-width="1.30"/>
<line x1="611.5" y1="251.5" x2="629.8" y2="257.8" stroke="#9a9a9a" stroke-width="2.20"/>
<line x1="611.5" y1="251.5" x2="629.8" y2="257.8" stroke="#11ee11" stroke-width="1.30"/>
<line x1="585.0" y1="258.0" x2="611.5" y2="251.5" stroke="#9a9a9a" stroke-width="2.20"/>
<line x1="585.0" y1="258.0" x2="611.5" y2="251.5" stroke="#11ee11" stroke-width="1.30"/>
<line x1="598.0" y1="259.7" x2="626.0" y2="274.8" stroke="#9a9a9a" stroke-width="2.20"/>
<line x1="598.0" y1="259.7" x2="626.0" y2="274.8" stroke="#11ee11" stroke-width="1.30"/>
<line x1="626.0" y1="274.8" x2="637.4" y2="280.8" stroke="#9a9a9a" stroke-width="2.20"/>
<line x1="626.0" y1="274.8" x2="637.4" y2="280.8" stroke="#d000d0" stroke-width="1.30"/>
<line x1="575.0" y1="283.7" x2="608.6" y2="268.3" stroke="#9a9a9a" stroke-width="2.20"/>
<line x1="575.0" y1="283.7" x2="608.6" y2="268.3" stroke="#11ee11" stroke-width="1.30"/>
<line x1="590.4" y1="276.0" x2="620.1" y2="290.4" stroke="#9a9a9a" stroke-width="2.20"/>
<line x1="590.4" y1="276.0" x2="620.1" y2="290.4" stroke="#11ee11" stroke-width="1.30"/>
<line x1="632.6" y1="256.8" x2="652.0" y2="264.5" stroke="#9a9a9a" stroke-width="2.20"/>
<line x1="632.6" y1="256.8" x2="652.0" y2="264.5" stroke="#11ee11" stroke-width="1.30"/>
<line x1="652.0" y1="264.5" x2="661.5" y2="268.5" stroke="#9a9a9a" stroke-width="2.20"/>
<line x1="652.0" y1="264.5" x2="661.5" y2="268.5" stroke="#d000d0" stroke-width="1.30"/>
<line x1="661.5" y1="268.5" x2="676.0" y2="274.5" stroke="#9a9a9a" stroke-width="2.20"/>
<line x1="661.5" y1="268.5" x2="676.0" y2="274.5" stroke="#11ee11" stroke-width="1.30"/>
<line x1="585.0" y1="307.5" x2="618.0" y2="291.0" stroke="#9a9a9a" stroke-width="2.20"/>
<line x1="585.0" y1="307.5" x2="618.0" y2="291.0" stroke="#11ee11" stroke-width="1.30"/>
<line x1="618.0" y1="291.0" x2="660.0" y2="272.5" stroke="#9a9a9a" stroke-width="2.20"/>
<line x1="618.0" y1="291.0" x2="660.0" y2="272.5" stroke="#11ee11" stroke-width="1.30"/>
<line x1="575.0" y1="285.6" x2="599.0" y2="298.0" stroke="#9a9a9a" stroke-width="2.20"/>
<line x1="575.0" y1="285.6" x2="599.0" y2="298.0" stroke="#11ee11" stroke-width="1.30"/>
<line x1="620.0" y1="290.4" x2="641.0" y2="281.0" stroke="#9a9a9a" stroke-width="2.20"/>
<line x1="620.0" y1="290.4" x2="641.0" y2="281.0" stroke="#11ee11" stroke-width="1.30"/>
<polyline points="515.0,312.0 527.0,318.0 514.0,325.0" fill="none" stroke="#999" stroke-width="0.60"/>
<polyline points="660.0,244.0 672.0,250.0 682.0,246.0" fill="none" stroke="#999" stroke-width="0.60"/>
<line x1="490.3" y1="301.5" x2="502.3" y2="297.6" stroke="#11ee11" stroke-width="3.50"/>
<line x1="506.1" y1="297.2" x2="528.2" y2="289.5" stroke="#11ee11" stroke-width="3.20"/>
<line x1="522.0" y1="284.5" x2="538.8" y2="277.8" stroke="#11ee11" stroke-width="4.00"/>
<line x1="614.4" y1="250.2" x2="632.6" y2="243.4" stroke="#11ee11" stroke-width="3.00"/>
<line x1="635.5" y1="239.1" x2="644.6" y2="236.2" stroke="#11ee11" stroke-width="4.00"/>
<polygon points="538.3,331.5 558.0,323.5 558.0,331.0 538.3,339.0" fill="#11ee11" stroke="#2a8a2a" stroke-width="0.40"/>
<line x1="558.0" y1="324.8" x2="636.5" y2="284.8" stroke="#11ee11" stroke-width="2.40"/>
<line x1="641.3" y1="282.3" x2="691.0" y2="263.0" stroke="#11ee11" stroke-width="2.40"/>
<polygon points="690.0,258.9 704.2,253.3 704.2,260.5 690.0,266.5" fill="#11ee11" stroke="#2a8a2a" stroke-width="0.40"/>
<polygon points="636.5,283.7 641.5,281.5 641.5,288.0 636.5,290.0" fill="#11ee11"/>
<polygon points="537.4,260.4 553.8,255.9 572.0,264.0 556.0,270.5" fill="#11ee11"/>
<polygon points="541.0,263.0 553.0,259.6 566.0,265.0 556.0,268.2" fill="#f0f0e0"/>
<polygon points="553.0,261.5 558.0,258.6 564.5,260.2 562.5,264.5 556.0,266.0" fill="#3c3c30"/>
<polygon points="536.1,250.5 553.0,245.2 553.8,255.9 537.4,260.4" fill="#ffff00" stroke="#8a8a8a" stroke-width="0.40"/>
<polygon points="536.1,246.4 553.0,240.2 553.0,245.2 536.1,250.5" fill="#11ee11"/>
<polygon points="541.0,248.0 549.7,246.8 549.7,256.7 541.9,259.6" fill="#c4c8f0" stroke="#444" stroke-width="0.60"/>
<line opacity="0" x1="536.0" y1="336.0" x2="536.0" y2="336.0" stroke="#000" stroke-width="0.00"/>
<polygon points="538.2,266.0 549.7,262.5 549.7,277.0 542.3,277.0" fill="#ff00ff"/>
<polygon points="534.5,258.4 538.2,258.0 538.2,276.5 534.5,276.8" fill="#eeeeee" stroke="#8a8a8a" stroke-width="0.40"/>
<polygon points="549.7,266.6 555.5,265.2 555.5,277.3 549.7,277.5" fill="#eeeeee" stroke="#8a8a8a" stroke-width="0.40"/>
<polygon points="555.5,268.5 562.0,271.5 562.0,275.7 555.5,276.5" fill="#ffff00"/>
<polygon points="573.6,259.2 582.7,255.5 584.3,265.0" fill="#ff00ff"/>
<polygon points="583.9,254.2 587.6,253.6 587.6,265.8 583.9,266.2" fill="#eeeeee" stroke="#8a8a8a" stroke-width="0.40"/></svg><div id="tb"></div>
<svg class="abs" style="left:306px;top:622px" width="555" height="100" viewBox="306 622 555 100"><path d="M341.3 521.5L538.7 709.6L852.6 450" fill="none" stroke="#1c1d1f" stroke-width="1.1"/><path d="M341.3 523L538.7 711.1L852.6 451.5" fill="none" stroke="#252628" stroke-width="1"/></svg>
<svg class="abs" style="left:306px;top:622px" width="555" height="100" viewBox="306 622 555 100">
<g fill="#a9a9a9" stroke="none">
<!-- home -->
<path d="M330 635.5L343.5 648H339.8V659H333V651.5H327V659H320.2V648H316.5Z"/>
</g>
<g fill="none" stroke="#a9a9a9" stroke-width="1.4">
<!-- zoom-fit -->
<rect x="372.6" y="638.9" width="15" height="14.2"/>
<circle cx="385" cy="650.9" r="4.3" fill="#2c2d2f"/><path d="M388.1 654L391.6 657.6" stroke-width="1.5"/>
<!-- ruler -->
<rect x="418.1" y="643.7" width="24.7" height="9.6"/>
<path d="M421.5 643.7V648M424.5 643.7V648M427.4 643.7V648M430.4 643.7V649.8M433.4 643.7V648M436.8 643.7V648M440.1 643.7V648" stroke-width="1.2"/>
<!-- section -->
<path d="M482.4 636.5V659" stroke-width="1.9"/>
<path d="M482.4 640.6H492V653.6H482.4"/>
<path d="M482.4 640.6H467.6V653.6H482.4" stroke-dasharray="2.2 1.8"/>
<!-- person -->
<circle cx="530.4" cy="636.4" r="3.1" stroke-width="1.3"/>
<path d="M526.6 644.5V661.6Q526.6 662.5 527.5 662.5H529.4Q530.3 662.5 530.3 661.6V652.3V661.6Q530.3 662.5 531.2 662.5H533.2Q534.1 662.5 534.1 661.6V644.5M526.6 651H524.5Q523.4 651 523.4 649.9V643.2Q523.4 639.7 526.8 639.7H534Q537.4 639.7 537.4 643.2V649.9Q537.4 651 536.3 651H534.1" stroke-width="1.3"/>
<!-- grid + pin -->
<path d="M567.5 645.5H578M567.5 654.4H591.3M574.5 640V660.6M584.4 654V660.6" stroke-width="1.6"/>
</g>
<path d="M584.4 634.8Q592.2 635 592.4 642.4Q592.2 647 584.4 654.8Q576.6 647 576.4 642.4Q576.6 635 584.4 634.8Z" fill="#a9a9a9"/>
<circle cx="584.4" cy="641.9" r="3.3" fill="#2c2d2f"/>
<!-- 3D/2D -->
<text x="630.4" y="646.2" font-family="Liberation Sans" font-weight="bold" font-size="13.6" fill="#a9a9a9" stroke="#a9a9a9" stroke-width="0.5" textLength="12" lengthAdjust="spacingAndGlyphs">3D</text>
<text x="617.6" y="661.2" font-family="Liberation Sans" font-weight="bold" font-size="15.4" fill="#a9a9a9" stroke="#a9a9a9" stroke-width="0.5" textLength="12.8" lengthAdjust="spacingAndGlyphs">2D</text>
<path d="M627.6 637.6Q621.4 638.8 620.8 644.6" fill="none" stroke="#a9a9a9" stroke-width="2.5"/><path d="M617.3 643.8L620.8 648.4L624.3 643.8Z" fill="#a9a9a9"/>
<path d="M632.6 658.4Q639.4 657.6 639.8 651.8" fill="none" stroke="#a9a9a9" stroke-width="2.5"/><path d="M636.3 652.6L639.8 648L643.3 652.6Z" fill="#a9a9a9"/>
<!-- list window -->
<rect x="670.5" y="637.9" width="20" height="20" fill="none" stroke="#a9a9a9" stroke-width="1.7"/>
<rect x="669.7" y="637.1" width="21.6" height="4.9" fill="#a9a9a9"/>
<rect x="673.4" y="638.6" width="1.6" height="1.8" fill="#2c2d2f"/><rect x="676.4" y="638.6" width="1.6" height="1.8" fill="#2c2d2f"/>
<g fill="#a9a9a9"><rect x="673" y="645.1" width="2" height="1.9"/><rect x="677.1" y="645.1" width="11.1" height="1.9"/><rect x="673" y="649.1" width="2" height="1.9"/><rect x="677.1" y="649.1" width="11.1" height="1.9"/><rect x="673" y="653.1" width="2" height="1.9"/><rect x="677.1" y="653.1" width="11.1" height="1.9"/></g>
<!-- tree -->
<g fill="#a9a9a9"><rect x="726.5" y="638.2" width="5.8" height="4.5"/><rect x="718.3" y="654.2" width="6" height="4.5"/><rect x="726.5" y="654.2" width="5.8" height="4.5"/><rect x="734.4" y="654.2" width="6" height="4.5"/></g>
<path d="M729.4 642.7V654.2M721.3 654.2V648.3H737.4V654.2" fill="none" stroke="#a9a9a9" stroke-width="1.3"/>
<!-- camera -->
<g fill="none" stroke="#a9a9a9" stroke-width="1.4">
<path d="M769.2 639.9H792.2Q793 639.9 793 642.6V655.6Q793 657.9 790.7 657.9H769.2Q766.9 657.9 766.9 655.6V642.6Q766.9 639.9 769.2 639.9Z"/>
<path d="M775.1 639.9V637.7H784.8V639.9"/>
<circle cx="780" cy="648.9" r="6.3" stroke-width="1.5"/>
</g>
<circle cx="788.9" cy="643.3" r="1" fill="#a9a9a9"/>
<!-- edit -->
<path d="M829.4 642.1H819.6Q818.3 642.1 818.3 643.4V652.5Q818.3 653.8 819.6 653.8H834.6Q835.9 653.8 835.9 652.5V648" fill="none" stroke="#a9a9a9" stroke-width="1.4"/>
<path d="M826.2 650.8L827.4 647.2L836.6 638.6L839.1 641.2L829.9 649.8Z" fill="#a9a9a9"/>
<!-- gear -->
<g transform="translate(330 697.8)">
<path fill="#a9a9a9" fill-rule="evenodd" d="M-2.38 -8.89 L-2.26 -12.19 L2.26 -12.19 L2.38 -8.89 L4.60 -7.97 L7.02 -10.22 L10.22 -7.02 L7.97 -4.60 L8.89 -2.38 L12.19 -2.26 L12.19 2.26 L8.89 2.38 L7.97 4.60 L10.22 7.02 L7.02 10.22 L4.60 7.97 L2.38 8.89 L2.26 12.19 L-2.26 12.19 L-2.38 8.89 L-4.60 7.97 L-7.02 10.22 L-10.22 7.02 L-7.97 4.60 L-8.89 2.38 L-12.19 2.26 L-12.19 -2.26 L-8.89 -2.38 L-7.97 -4.60 L-10.22 -7.02 L-7.02 -10.22 L-4.60 -7.97Z M0 -4.9 A4.4 4.9 0 1 0 0 4.9 A4.4 4.9 0 1 0 0 -4.9Z"/>
</g>
<!-- info -->
<circle cx="380" cy="698" r="11.7" fill="none" stroke="#a9a9a9" stroke-width="1.5"/>
<circle cx="380" cy="692.2" r="1.6" fill="#a9a9a9"/>
<rect x="378.6" y="695.3" width="2.8" height="8.5" fill="#a9a9a9"/>
</svg>

<div id="redtb"></div>
<div id="panel">
<div id="ph"><div class="t">视点</div>
<svg class="abs" style="left:326px;top:19px" width="17" height="17" viewBox="0 0 17 17"><path d="M1 1L16 16M16 1L1 16" stroke="#bdbdbd" stroke-width="1.6"/></svg>
</div>
<div id="pf">
<div class="ft" style="left:53px">全部版本</div><div class="tri" style="left:115px;top:17px"></div>
<div class="abs" style="left:178px;top:12px;width:1px;height:15px;background:#d6d6d6"></div>
<div class="ft" style="left:229px">所有创建人</div><div class="tri" style="left:305px;top:17px"></div>
</div>
<div class="card" style="top:103px;height:296px">
<svg class="abs" style="left:19px;top:14px" width="22" height="34" viewBox="0 0 22 34">
<path d="M12 2Q8.5 2.6 6.6 6Q4.4 9.5 4.3 14Q3 17 3.6 20Q2.6 23 3.5 26Q4 29.5 5.6 31.5Q7 32.6 8.3 31.4L10.5 32Q12.5 33.4 14.5 32.3Q16.6 30 16.8 27Q18.6 24.5 17.6 21Q18.7 17.5 17.6 14Q17.8 9 15.6 5.5Q14 2.2 12 2Z" fill="#4e3234"/>
<path d="M5 12Q3.2 15 4.5 18M17 12Q18.6 15.5 17 19M4.2 22Q3 25 4.6 27.5M17.2 22Q18.4 25 16.4 28" stroke="#7a5c5e" stroke-width="0.9" fill="none"/>
<ellipse cx="10.6" cy="13.8" rx="4.3" ry="5.2" fill="#f4e0dc"/>
<path d="M6 11.5Q7.5 7.5 11.5 7.6Q14.8 8 15.6 11.6Q13 9.6 10.5 10.2Q8 10.6 6 11.5Z" fill="#4e3234"/>
<circle cx="8.4" cy="13.2" r="1.25" fill="#3a1416"/><circle cx="12.8" cy="13.9" r="1.25" fill="#3a1416"/>
<circle cx="8.6" cy="13.6" r="0.5" fill="#b03030"/><circle cx="13" cy="14.3" r="0.5" fill="#b03030"/>
<path d="M8 19.6Q10.6 20.6 13.2 19.6L12.6 21H8.6Z" fill="#eed8d6"/>
<path d="M8.6 26.2Q11.5 25 15 26L14.6 27.8H9Z" fill="#efe2e2"/>
<path d="M5.4 27.5L9.2 27.6L9 32.4L6 31.8Z M11 27.8L15.2 27.6L15 32.6L11.4 32.4Z" fill="#3a1a1e"/>
</svg>
<div class="nm">梦兰</div>
<div class="dt">2019-01-30 09:58:17</div>
<div class="vn">新视点</div>
<svg class="abs" style="left:276px;top:14px" width="13" height="15" viewBox="0 0 13 15"><path d="M2 4.2Q6.5 0.6 11 4.2" fill="none" stroke="#a8a8a8" stroke-width="1"/><path d="M1.2 4.6H11.8" stroke="#a8a8a8" stroke-width="1"/><path d="M2.2 4.8V13.2Q2.2 14 3 14H10Q10.8 14 10.8 13.2V4.8" fill="none" stroke="#a8a8a8" stroke-width="1"/><rect x="4.3" y="6.8" width="4.4" height="4.6" fill="#c9c9c9"/></svg><div class="del">删除</div>
<div class="th"><svg class="abs" style="left:0;top:0" width="262" height="197" viewBox="930 236 262 197">
<g fill="none" stroke="#9fd8d8" stroke-width="0.8">
<path d="M1031.5 350.5L1070 326.5L1078.5 330.5L1040.5 354.5Z"/>
<path d="M1031.5 350.5V365L1040.5 373V354.5M1078.5 330.5V346.5L1040.5 373"/>
<path d="M1031.5 365L1070 341L1078.5 346.5M1070 326.5V341"/>
</g>
<path d="M1033 362L1070 340L1077 344L1040 368Z" fill="#f4f4f4" opacity=".85"/>
<rect x="1054.5" y="344" width="1.6" height="19" fill="#7a7a5a"/>
<path d="M1048 363L1066 352L1067 354L1049 365Z" fill="#e6e600"/>
<rect x="1053" y="352" width="4" height="5" fill="#aacc44"/>
</svg><div class="badge" style="top:171px">v1</div></div>
</div><div class="card" style="top:409px;height:296px">
<svg class="abs" style="left:19px;top:14px" width="22" height="34" viewBox="0 0 22 34">
<path d="M12 2Q8.5 2.6 6.6 6Q4.4 9.5 4.3 14Q3 17 3.6 20Q2.6 23 3.5 26Q4 29.5 5.6 31.5Q7 32.6 8.3 31.4L10.5 32Q12.5 33.4 14.5 32.3Q16.6 30 16.8 27Q18.6 24.5 17.6 21Q18.7 17.5 17.6 14Q17.8 9 15.6 5.5Q14 2.2 12 2Z" fill="#4e3234"/>
<path d="M5 12Q3.2 15 4.5 18M17 12Q18.6 15.5 17 19M4.2 22Q3 25 4.6 27.5M17.2 22Q18.4 25 16.4 28" stroke="#7a5c5e" stroke-width="0.9" fill="none"/>
<ellipse cx="10.6" cy="13.8" rx="4.3" ry="5.2" fill="#f4e0dc"/>
<path d="M6 11.5Q7.5 7.5 11.5 7.6Q14.8 8 15.6 11.6Q13 9.6 10.5 10.2Q8 10.6 6 11.5Z" fill="#4e3234"/>
<circle cx="8.4" cy="13.2" r="1.25" fill="#3a1416"/><circle cx="12.8" cy="13.9" r="1.25" fill="#3a1416"/>
<circle cx="8.6" cy="13.6" r="0.5" fill="#b03030"/><circle cx="13" cy="14.3" r="0.5" fill="#b03030"/>
<path d="M8 19.6Q10.6 20.6 13.2 19.6L12.6 21H8.6Z" fill="#eed8d6"/>
<path d="M8.6 26.2Q11.5 25 15 26L14.6 27.8H9Z" fill="#efe2e2"/>
<path d="M5.4 27.5L9.2 27.6L9 32.4L6 31.8Z M11 27.8L15.2 27.6L15 32.6L11.4 32.4Z" fill="#3a1a1e"/>
</svg>
<div class="nm">梦兰</div>
<div class="dt">2019-01-30 09:58:01</div>
<div class="vn">新视点</div>
<svg class="abs" style="left:276px;top:14px" width="13" height="15" viewBox="0 0 13 15"><path d="M2 4.2Q6.5 0.6 11 4.2" fill="none" stroke="#a8a8a8" stroke-width="1"/><path d="M1.2 4.6H11.8" stroke="#a8a8a8" stroke-width="1"/><path d="M2.2 4.8V13.2Q2.2 14 3 14H10Q10.8 14 10.8 13.2V4.8" fill="none" stroke="#a8a8a8" stroke-width="1"/><rect x="4.3" y="6.8" width="4.4" height="4.6" fill="#c9c9c9"/></svg><div class="del">删除</div>
<div class="th"><svg class="abs" style="left:0;top:0" width="262" height="197" viewBox="0 0 262 197"><polygon points="62,135 110,94 160,145 112,186" fill="#f3f3f3" stroke="#cfcfcf" stroke-width="0.8"/><g transform="matrix(0.19223 0.05532 0.01289 0.26766 2.448 -35.721)"><polygon points="486.0,305.0 536.0,338.0 551.6,583.6 507.0,549.0" fill="#ff00ff"/>
<polygon points="486.0,305.0 489.4,307.3 510.1,551.4 507.0,549.0" fill="#eeeeee" stroke="#8a8a8a" stroke-width="0.50"/>
<polygon points="497.3,312.4 504.2,317.0 523.3,561.6 517.1,556.8" fill="#ececec" stroke="#8a8a8a" stroke-width="0.50"/>
<polygon points="529.9,334.0 536.0,338.0 551.6,583.6 546.1,579.4" fill="#f0f0f0" stroke="#8a8a8a" stroke-width="0.50"/>
<polygon points="529.9,334.0 531.9,335.3 548.0,580.8 546.1,579.4" fill="#d8d8d8"/>
<polygon points="498.9,315.6 502.9,318.3 503.7,328.2 499.7,325.6" fill="#3a3a40"/>
<polygon points="500.1,318.5 502.1,319.8 502.6,326.5 500.6,325.2" fill="#9a9aa0"/>
<polygon points="499.8,326.7 503.8,329.3 504.1,333.3 500.1,330.7" fill="#ffff00"/>
<polygon points="500.2,331.1 504.1,333.7 504.4,337.0 500.4,334.4" fill="#11ee11"/>
<polygon points="500.7,337.7 504.6,340.3 505.4,350.3 501.5,347.7" fill="#3a3a40"/>
<polygon points="501.9,340.6 503.8,341.9 504.3,348.5 502.4,347.2" fill="#9a9aa0"/>
<polygon points="501.6,348.8 505.5,351.4 505.8,355.4 501.9,352.7" fill="#ffff00"/>
<polygon points="502.0,353.2 505.8,355.8 506.1,359.1 502.2,356.4" fill="#11ee11"/>
<polygon points="502.5,359.6 506.4,362.3 507.1,371.8 503.2,369.2" fill="#3a3a40"/>
<polygon points="503.6,362.4 505.6,363.8 506.1,370.1 504.1,368.8" fill="#9a9aa0"/>
<polygon points="503.3,370.2 507.2,372.9 507.5,376.6 503.6,374.0" fill="#ffff00"/>
<polygon points="503.7,374.4 507.5,377.1 507.8,380.2 503.9,377.5" fill="#11ee11"/>
<polygon points="504.2,380.7 508.0,383.4 508.8,392.9 504.9,390.2" fill="#3a3a40"/>
<polygon points="505.3,383.5 507.2,384.8 507.7,391.1 505.8,389.8" fill="#9a9aa0"/>
<polygon points="505.0,391.2 508.8,393.9 509.1,397.7 505.3,395.0" fill="#ffff00"/>
<polygon points="505.4,395.4 509.2,398.1 509.4,401.2 505.6,398.6" fill="#11ee11"/>
<polygon points="505.9,401.6 509.7,404.3 510.4,413.4 506.6,410.7" fill="#3a3a40"/>
<polygon points="507.0,404.3 508.9,405.7 509.3,411.7 507.4,410.4" fill="#9a9aa0"/>
<polygon points="506.7,411.7 510.4,414.4 510.7,418.0 506.9,415.3" fill="#ffff00"/>
<polygon points="507.0,415.7 510.8,418.4 511.0,421.3 507.2,418.7" fill="#11ee11"/>
<polygon points="507.5,421.7 511.2,424.4 511.9,433.4 508.2,430.7" fill="#3a3a40"/>
<polygon points="508.6,424.4 510.4,425.7 510.9,431.7 509.0,430.4" fill="#9a9aa0"/>
<polygon points="508.3,431.7 512.0,434.4 512.3,438.0 508.6,435.3" fill="#ffff00"/>
<polygon points="508.6,435.7 512.3,438.4 512.6,441.4 508.8,438.7" fill="#11ee11"/>
<polygon points="509.1,441.6 512.8,444.3 513.5,452.9 509.8,450.2" fill="#3a3a40"/>
<polygon points="510.1,444.2 512.0,445.5 512.5,451.3 510.6,449.9" fill="#9a9aa0"/>
<polygon points="509.8,451.2 513.6,453.9 513.8,457.3 510.1,454.6" fill="#ffff00"/>
<polygon points="510.1,454.9 513.9,457.6 514.1,460.5 510.4,457.8" fill="#11ee11"/>
<polygon points="510.6,460.5 514.3,463.2 514.9,471.4 511.2,468.7" fill="#3a3a40"/>
<polygon points="511.7,463.0 513.5,464.4 513.9,469.8 512.1,468.5" fill="#9a9aa0"/>
<polygon points="511.3,469.6 515.0,472.3 515.3,475.5 511.6,472.8" fill="#ffff00"/>
<polygon points="511.6,473.2 515.3,475.9 515.5,478.6 511.8,475.9" fill="#11ee11"/>
<polygon points="512.0,478.6 515.7,481.3 516.3,489.4 512.7,486.7" fill="#3a3a40"/>
<polygon points="513.1,481.1 514.9,482.4 515.4,487.8 513.5,486.5" fill="#9a9aa0"/>
<polygon points="512.8,487.6 516.4,490.3 516.7,493.6 513.0,490.8" fill="#ffff00"/>
<polygon points="513.0,491.2 516.7,493.9 516.9,496.6 513.3,493.9" fill="#11ee11"/>
<polygon points="513.5,496.6 517.1,499.3 517.8,507.5 514.1,504.7" fill="#3a3a40"/>
<polygon points="514.5,499.1 516.4,500.4 516.8,505.9 515.0,504.5" fill="#9a9aa0"/>
<polygon points="514.2,505.6 517.8,508.4 518.1,511.6 514.5,508.9" fill="#ffff00"/>
<polygon points="514.5,509.2 518.1,511.9 518.3,514.6 514.7,511.9" fill="#11ee11"/>
<polygon points="514.9,514.5 518.5,517.2 519.1,524.9 515.5,522.2" fill="#3a3a40"/>
<polygon points="516.0,516.9 517.8,518.3 518.2,523.4 516.4,522.0" fill="#9a9aa0"/>
<polygon points="515.6,523.0 519.2,525.8 519.4,528.8 515.9,526.1" fill="#ffff00"/>
<polygon points="515.9,526.4 519.5,529.2 519.7,531.7 516.1,529.0" fill="#11ee11"/>
<polygon points="516.3,531.3 519.9,534.1 520.4,540.8 516.8,538.1" fill="#3a3a40"/>
<polygon points="517.3,533.5 519.1,534.9 519.4,539.4 517.7,538.0" fill="#9a9aa0"/>
<polygon points="516.9,538.9 520.4,541.6 520.7,544.3 517.1,541.6" fill="#ffff00"/>
<polygon points="517.1,541.9 520.7,544.6 520.9,546.8 517.3,544.1" fill="#11ee11"/>
<polygon points="517.5,546.1 521.0,548.9 521.5,554.8 517.9,552.0" fill="#3a3a40"/>
<polygon points="518.5,548.1 520.2,549.5 520.5,553.4 518.8,552.0" fill="#9a9aa0"/>
<polygon points="518.0,552.7 521.5,555.4 521.7,557.7 518.2,555.0" fill="#ffff00"/>
<polygon points="518.2,555.3 521.7,558.0 521.9,559.9 518.4,557.2" fill="#11ee11"/>
<line x1="494.6" y1="352.3" x2="501.1" y2="359.7" stroke="#6a106a" stroke-width="0.60"/>
<line x1="507.8" y1="368.8" x2="535.2" y2="392.6" stroke="#6a106a" stroke-width="0.60"/>
<line x1="499.8" y1="414.3" x2="506.1" y2="421.6" stroke="#6a106a" stroke-width="0.60"/>
<line x1="512.6" y1="430.5" x2="539.2" y2="454.2" stroke="#6a106a" stroke-width="0.60"/>
<line x1="504.6" y1="471.4" x2="510.7" y2="478.6" stroke="#6a106a" stroke-width="0.60"/>
<line x1="517.0" y1="487.2" x2="542.9" y2="510.8" stroke="#6a106a" stroke-width="0.60"/>
<line x1="509.0" y1="524.4" x2="515.0" y2="531.5" stroke="#6a106a" stroke-width="0.60"/>
<line x1="521.2" y1="539.9" x2="546.4" y2="563.4" stroke="#6a106a" stroke-width="0.60"/>
<line x1="486.0" y1="305.0" x2="507.0" y2="549.0" stroke="#9a9a9a" stroke-width="0.60"/>
<polygon points="501.0,520.0 519.0,526.0 519.0,559.0 501.0,551.0" fill="#ffff00" stroke="#8a8a8a" stroke-width="0.60"/>
<polygon points="500.0,518.0 504.0,516.0 521.0,522.0 519.0,526.0 501.0,520.0" fill="#ececec" stroke="#8a8a8a" stroke-width="0.60"/>
<polygon points="502.0,521.0 518.0,527.0 518.0,535.0 502.0,529.0" fill="#3a3a3a"/>
<line x1="486.0" y1="305.0" x2="486.0" y2="305.0" stroke="#000" stroke-width="0" opacity="0"/>
<line x1="502" y1="537" x2="518" y2="545" stroke="#6a6a00" stroke-width="0.6"/>
<polygon points="536.0,336.0 705.0,257.5 692.0,483.6 551.6,583.6" fill="#e8e8e8"/>
<polygon points="550.6,567.0 571.6,552.4 572.3,568.8 551.6,583.6" fill="#d8d8f2"/>
<polygon points="563.9,561.2 566.4,559.5 566.6,563.8 564.1,565.5" fill="#ff00ff"/>
<line x1="551.8" y1="568.8" x2="552.5" y2="580.4" stroke="#6e6e78" stroke-width="0.80"/>
<line x1="561.7" y1="561.8" x2="562.3" y2="573.4" stroke="#6e6e78" stroke-width="0.80"/>
<line x1="570.7" y1="555.6" x2="571.2" y2="567.1" stroke="#6e6e78" stroke-width="0.80"/>
<polygon points="552.3,577.6 571.1,564.3 571.1,565.7 552.4,578.9" fill="#77777f"/>
<polygon points="551.4,580.3 572.2,566.6 572.3,568.8 551.6,583.6" fill="#11ee11"/>
<polygon points="549.6,552.0 570.9,537.5 571.6,552.4 550.6,567.0" fill="#d8d8f2"/>
<polygon points="563.1,546.0 565.6,544.2 565.8,548.1 563.3,549.8" fill="#ff00ff"/>
<line x1="550.8" y1="553.5" x2="551.5" y2="564.0" stroke="#6e6e78" stroke-width="0.80"/>
<line x1="560.9" y1="546.6" x2="561.5" y2="557.1" stroke="#6e6e78" stroke-width="0.80"/>
<line x1="570.0" y1="540.5" x2="570.5" y2="550.9" stroke="#6e6e78" stroke-width="0.80"/>
<polygon points="551.3,561.5 570.3,548.4 570.4,549.6 551.4,562.7" fill="#77777f"/>
<polygon points="550.4,564.0 571.5,550.3 571.6,552.4 550.6,567.0" fill="#11ee11"/>
<polygon points="549.7,567.3 573.2,551.0 573.3,553.8 549.9,570.1" fill="#f8f8f8" stroke="#9a9a9a" stroke-width="0.50"/>
<polygon points="548.6,536.5 570.3,522.1 570.9,537.5 549.6,552.0" fill="#d8d8f2"/>
<polygon points="562.3,530.6 564.9,528.9 565.1,532.9 562.5,534.7" fill="#ff00ff"/>
<line x1="549.9" y1="538.1" x2="550.6" y2="549.0" stroke="#6e6e78" stroke-width="0.80"/>
<line x1="560.1" y1="531.3" x2="560.7" y2="542.1" stroke="#6e6e78" stroke-width="0.80"/>
<line x1="569.3" y1="525.2" x2="569.8" y2="535.9" stroke="#6e6e78" stroke-width="0.80"/>
<polygon points="550.4,546.3 569.7,533.3 569.7,534.6 550.5,547.6" fill="#77777f"/>
<polygon points="549.4,548.9 570.8,535.4 570.9,537.5 549.6,552.0" fill="#11ee11"/>
<polygon points="548.8,552.3 572.5,536.1 572.6,539.0 548.9,555.2" fill="#f8f8f8" stroke="#9a9a9a" stroke-width="0.50"/>
<polygon points="547.5,519.0 569.5,504.8 570.3,522.1 548.6,536.5" fill="#d8d8f2"/>
<polygon points="561.4,513.6 564.0,511.9 564.3,516.5 561.7,518.2" fill="#ff00ff"/>
<line x1="548.8" y1="520.9" x2="549.6" y2="533.2" stroke="#6e6e78" stroke-width="0.80"/>
<line x1="559.2" y1="514.2" x2="559.9" y2="526.4" stroke="#6e6e78" stroke-width="0.80"/>
<line x1="568.5" y1="508.1" x2="569.1" y2="520.3" stroke="#6e6e78" stroke-width="0.80"/>
<polygon points="549.4,530.2 569.0,517.3 569.0,518.7 549.5,531.6" fill="#77777f"/>
<polygon points="548.4,533.0 570.2,519.7 570.3,522.1 548.6,536.5" fill="#11ee11"/>
<polygon points="547.8,536.7 571.9,520.7 572.0,523.9 548.0,540.0" fill="#f8f8f8" stroke="#9a9a9a" stroke-width="0.50"/>
<polygon points="546.5,502.0 568.8,488.0 569.5,504.8 547.5,519.0" fill="#d8d8f2"/>
<polygon points="560.6,496.6 563.2,495.0 563.4,499.4 560.8,501.1" fill="#ff00ff"/>
<line x1="547.8" y1="503.9" x2="548.5" y2="515.8" stroke="#6e6e78" stroke-width="0.80"/>
<line x1="558.3" y1="497.2" x2="558.9" y2="509.0" stroke="#6e6e78" stroke-width="0.80"/>
<line x1="567.8" y1="491.2" x2="568.3" y2="503.0" stroke="#6e6e78" stroke-width="0.80"/>
<polygon points="548.3,512.9 568.2,500.1 568.2,501.5 548.4,514.2" fill="#77777f"/>
<polygon points="547.3,515.6 569.4,502.5 569.5,504.8 547.5,519.0" fill="#11ee11"/>
<polygon points="546.6,519.2 571.1,503.4 571.3,506.5 546.8,522.4" fill="#f8f8f8" stroke="#9a9a9a" stroke-width="0.50"/>
<polygon points="545.4,484.6 568.0,470.7 568.8,488.0 546.5,502.0" fill="#d8d8f2"/>
<polygon points="559.7,479.4 562.4,477.8 562.6,482.3 559.9,483.9" fill="#ff00ff"/>
<line x1="546.7" y1="486.5" x2="547.4" y2="498.7" stroke="#6e6e78" stroke-width="0.80"/>
<line x1="557.4" y1="479.9" x2="558.0" y2="492.1" stroke="#6e6e78" stroke-width="0.80"/>
<line x1="567.0" y1="474.0" x2="567.6" y2="486.1" stroke="#6e6e78" stroke-width="0.80"/>
<polygon points="547.3,495.8 567.4,483.2 567.5,484.6 547.3,497.2" fill="#77777f"/>
<polygon points="546.2,498.6 568.7,485.6 568.8,488.0 546.5,502.0" fill="#11ee11"/>
<polygon points="545.6,502.2 570.4,486.6 570.6,489.8 545.8,505.5" fill="#f8f8f8" stroke="#9a9a9a" stroke-width="0.50"/>
<polygon points="544.2,465.4 567.2,451.7 568.0,470.7 545.4,484.6" fill="#d8d8f2"/>
<polygon points="558.7,460.7 561.5,459.1 561.7,464.1 559.0,465.7" fill="#ff00ff"/>
<line x1="545.5" y1="467.6" x2="546.3" y2="481.1" stroke="#6e6e78" stroke-width="0.80"/>
<line x1="556.4" y1="461.1" x2="557.1" y2="474.5" stroke="#6e6e78" stroke-width="0.80"/>
<line x1="566.2" y1="455.3" x2="566.8" y2="468.6" stroke="#6e6e78" stroke-width="0.80"/>
<polygon points="546.1,477.8 566.6,465.4 566.7,466.9 546.2,479.3" fill="#77777f"/>
<polygon points="545.1,480.8 567.9,468.1 568.0,470.7 545.4,484.6" fill="#11ee11"/>
<polygon points="544.4,484.8 569.7,469.3 569.8,472.9 544.7,488.4" fill="#f8f8f8" stroke="#9a9a9a" stroke-width="0.50"/>
<polygon points="542.9,445.0 566.3,431.6 567.2,451.7 544.2,465.4" fill="#d8d8f2"/>
<polygon points="557.7,440.7 560.5,439.1 560.8,444.4 558.0,446.0" fill="#ff00ff"/>
<line x1="544.3" y1="447.4" x2="545.1" y2="461.7" stroke="#6e6e78" stroke-width="0.80"/>
<line x1="555.3" y1="441.0" x2="556.1" y2="455.2" stroke="#6e6e78" stroke-width="0.80"/>
<line x1="565.3" y1="435.3" x2="565.9" y2="449.4" stroke="#6e6e78" stroke-width="0.80"/>
<polygon points="544.9,458.3 565.8,446.0 565.8,447.6 545.0,459.9" fill="#77777f"/>
<polygon points="543.9,461.4 567.0,449.0 567.2,451.7 544.2,465.4" fill="#11ee11"/>
<polygon points="543.2,465.5 568.9,450.3 569.0,454.1 543.5,469.3" fill="#f8f8f8" stroke="#9a9a9a" stroke-width="0.50"/>
<polygon points="541.5,423.8 565.4,410.7 566.3,431.6 542.9,445.0" fill="#d8d8f2"/>
<polygon points="556.7,419.8 559.5,418.3 559.8,423.8 556.9,425.3" fill="#ff00ff"/>
<line x1="543.0" y1="426.4" x2="543.9" y2="441.2" stroke="#6e6e78" stroke-width="0.80"/>
<line x1="554.2" y1="420.1" x2="555.0" y2="434.8" stroke="#6e6e78" stroke-width="0.80"/>
<line x1="564.3" y1="414.5" x2="565.0" y2="429.1" stroke="#6e6e78" stroke-width="0.80"/>
<polygon points="543.6,437.6 564.8,425.6 564.9,427.3 543.8,439.3" fill="#77777f"/>
<polygon points="542.6,440.8 566.2,428.7 566.3,431.6 542.9,445.0" fill="#11ee11"/>
<polygon points="541.9,445.1 568.0,430.2 568.2,434.1 542.2,449.1" fill="#f8f8f8" stroke="#9a9a9a" stroke-width="0.50"/>
<polygon points="540.2,402.7 564.5,389.8 565.4,410.7 541.5,423.8" fill="#d8d8f2"/>
<polygon points="555.6,398.9 558.5,397.4 558.7,402.8 555.9,404.4" fill="#ff00ff"/>
<line x1="541.6" y1="405.2" x2="542.6" y2="420.0" stroke="#6e6e78" stroke-width="0.80"/>
<line x1="553.1" y1="399.1" x2="553.9" y2="413.8" stroke="#6e6e78" stroke-width="0.80"/>
<line x1="563.4" y1="393.6" x2="564.1" y2="408.2" stroke="#6e6e78" stroke-width="0.80"/>
<polygon points="542.3,416.5 563.9,404.7 564.0,406.4 542.4,418.1" fill="#77777f"/>
<polygon points="541.3,419.6 565.2,407.8 565.4,410.7 541.5,423.8" fill="#11ee11"/>
<polygon points="540.6,423.9 567.1,409.3 567.3,413.1 540.8,427.8" fill="#f8f8f8" stroke="#9a9a9a" stroke-width="0.50"/>
<polygon points="538.9,381.5 563.5,368.9 564.5,389.8 540.2,402.7" fill="#d8d8f2"/>
<polygon points="554.5,377.9 557.4,376.4 557.7,381.9 554.8,383.4" fill="#ff00ff"/>
<line x1="540.3" y1="384.1" x2="541.2" y2="398.9" stroke="#6e6e78" stroke-width="0.80"/>
<line x1="552.0" y1="378.1" x2="552.8" y2="392.8" stroke="#6e6e78" stroke-width="0.80"/>
<line x1="562.5" y1="372.7" x2="563.1" y2="387.4" stroke="#6e6e78" stroke-width="0.80"/>
<polygon points="541.0,395.3 563.0,383.8 563.0,385.5 541.1,397.0" fill="#77777f"/>
<polygon points="539.9,398.5 564.3,386.9 564.5,389.8 540.2,402.7" fill="#11ee11"/>
<polygon points="539.2,402.8 566.3,388.5 566.4,392.4 539.5,406.7" fill="#f8f8f8" stroke="#9a9a9a" stroke-width="0.50"/>
<polygon points="537.6,361.0 562.7,348.7 563.5,368.9 538.9,381.5" fill="#d8d8f2"/>
<polygon points="553.5,357.4 556.4,356.0 556.7,361.3 553.7,362.7" fill="#ff00ff"/>
<line x1="539.1" y1="363.5" x2="539.9" y2="377.8" stroke="#6e6e78" stroke-width="0.80"/>
<line x1="550.9" y1="357.6" x2="551.7" y2="371.9" stroke="#6e6e78" stroke-width="0.80"/>
<line x1="561.6" y1="352.4" x2="562.2" y2="366.6" stroke="#6e6e78" stroke-width="0.80"/>
<polygon points="539.7,374.4 562.0,363.1 562.1,364.7 539.8,376.0" fill="#77777f"/>
<polygon points="538.6,377.5 563.4,366.1 563.5,368.9 538.9,381.5" fill="#11ee11"/>
<polygon points="537.9,381.6 565.4,367.6 565.5,371.4 538.1,385.4" fill="#f8f8f8" stroke="#9a9a9a" stroke-width="0.50"/>
<polygon points="536.1,338.0 561.7,326.1 562.7,348.7 537.6,361.0" fill="#d8d8f2"/>
<polygon points="552.3,335.2 555.4,333.7 555.7,339.7 552.6,341.1" fill="#ff00ff"/>
<line x1="537.6" y1="340.9" x2="538.6" y2="357.0" stroke="#6e6e78" stroke-width="0.80"/>
<line x1="549.7" y1="335.2" x2="550.6" y2="351.2" stroke="#6e6e78" stroke-width="0.80"/>
<line x1="560.6" y1="330.1" x2="561.3" y2="346.0" stroke="#6e6e78" stroke-width="0.80"/>
<polygon points="538.4,353.1 561.1,342.2 561.2,344.0 538.5,354.9" fill="#77777f"/>
<polygon points="537.3,356.5 562.5,345.6 562.7,348.7 537.6,361.0" fill="#11ee11"/>
<polygon points="536.6,361.0 564.5,347.4 564.7,351.6 536.8,365.3" fill="#f8f8f8" stroke="#9a9a9a" stroke-width="0.50"/>
<polygon points="535.6,329.9 561.3,318.1 561.7,327.1 536.2,339.0" fill="#f6f6f6" stroke="#999" stroke-width="0.40"/>
<polygon points="571.6,552.4 623.5,516.3 623.4,532.4 572.3,568.8" fill="#ffff00"/>
<polygon points="571.6,552.4 573.8,550.9 574.5,567.3 572.3,568.8" fill="#d4d400"/>
<polygon points="581.9,545.2 582.4,544.8 583.0,561.3 582.4,561.6" fill="#b8b800"/>
<polygon points="616.0,521.5 616.5,521.1 616.6,537.3 616.1,537.7" fill="#b8b800"/>
<polygon points="587.8,542.0 592.0,539.0 592.1,544.5 587.9,547.4" fill="#5c5c5c"/>
<polygon points="612.5,525.2 615.5,523.1 615.6,528.4 612.6,530.5" fill="#ff00ff"/>
<polygon points="582.6,551.5 616.1,528.0 616.1,530.6 582.7,554.1" fill="#f4f4f4" stroke="#9a9a9a" stroke-width="0.40"/>
<polygon points="582.7,554.1 616.1,530.6 616.1,535.4 582.9,559.0" fill="#1a1a1a"/>
<polygon points="582.9,558.0 616.1,534.5 616.1,536.4 582.9,560.0" fill="#9a9a9a"/>
<polygon points="570.7,569.3 623.4,531.8 623.4,534.0 570.8,571.6" fill="#11ee11"/>
<polygon points="570.9,537.5 623.5,501.8 623.5,516.3 571.6,552.4" fill="#ffff00"/>
<polygon points="570.9,537.5 573.1,536.0 573.8,550.9 571.6,552.4" fill="#d4d400"/>
<polygon points="581.4,530.4 581.9,530.0 582.4,544.8 581.9,545.2" fill="#b8b800"/>
<polygon points="615.9,506.9 616.5,506.5 616.5,521.1 616.0,521.5" fill="#b8b800"/>
<polygon points="587.3,527.1 591.6,524.2 591.7,529.1 587.5,532.0" fill="#5c5c5c"/>
<polygon points="612.4,510.5 615.4,508.4 615.5,513.1 612.4,515.2" fill="#ff00ff"/>
<polygon points="582.1,536.0 616.0,512.8 616.0,515.1 582.2,538.4" fill="#f4f4f4" stroke="#9a9a9a" stroke-width="0.40"/>
<polygon points="582.2,538.4 616.0,515.1 616.0,519.5 582.3,542.8" fill="#1a1a1a"/>
<polygon points="582.3,541.9 616.0,518.6 616.0,520.3 582.4,543.7" fill="#9a9a9a"/>
<polygon points="570.0,552.9 623.5,515.7 623.5,517.7 570.1,554.9" fill="#11ee11"/>
<polygon points="570.3,522.1 623.5,486.8 623.5,501.8 570.9,537.5" fill="#ffff00"/>
<polygon points="570.3,522.1 572.5,520.6 573.1,536.0 570.9,537.5" fill="#d4d400"/>
<polygon points="580.8,515.1 581.4,514.7 581.9,530.0 581.4,530.4" fill="#b8b800"/>
<polygon points="615.9,491.8 616.4,491.5 616.5,506.5 615.9,506.9" fill="#b8b800"/>
<polygon points="586.9,511.9 591.2,509.0 591.3,514.1 587.0,517.0" fill="#5c5c5c"/>
<polygon points="612.3,495.4 615.4,493.4 615.4,498.2 612.3,500.3" fill="#ff00ff"/>
<polygon points="581.6,520.9 615.9,497.9 615.9,500.3 581.7,523.4" fill="#f4f4f4" stroke="#9a9a9a" stroke-width="0.40"/>
<polygon points="581.7,523.4 615.9,500.3 615.9,504.8 581.8,527.9" fill="#1a1a1a"/>
<polygon points="581.8,527.0 615.9,503.9 615.9,505.7 581.9,528.8" fill="#9a9a9a"/>
<polygon points="569.3,538.0 623.5,501.2 623.5,503.2 569.4,540.1" fill="#11ee11"/>
<polygon points="569.5,504.8 623.5,469.8 623.5,486.8 570.3,522.1" fill="#ffff00"/>
<polygon points="569.5,504.8 571.8,503.3 572.5,520.6 570.3,522.1" fill="#d4d400"/>
<polygon points="580.2,497.8 580.8,497.5 581.4,514.7 580.8,515.1" fill="#b8b800"/>
<polygon points="615.8,474.8 616.3,474.5 616.4,491.5 615.9,491.8" fill="#b8b800"/>
<polygon points="586.4,494.8 590.8,491.9 590.9,497.6 586.5,500.5" fill="#5c5c5c"/>
<polygon points="612.1,478.6 615.3,476.6 615.3,482.0 612.2,484.1" fill="#ff00ff"/>
<polygon points="581.0,504.4 615.8,481.7 615.8,484.4 581.1,507.2" fill="#f4f4f4" stroke="#9a9a9a" stroke-width="0.40"/>
<polygon points="581.1,507.2 615.8,484.4 615.9,489.5 581.3,512.4" fill="#1a1a1a"/>
<polygon points="581.3,511.3 615.9,488.5 615.9,490.5 581.3,513.4" fill="#9a9a9a"/>
<polygon points="568.6,522.5 623.5,486.1 623.5,488.4 568.7,524.9" fill="#11ee11"/>
<polygon points="568.8,488.0 623.5,453.5 623.5,469.8 569.5,504.8" fill="#ffff00"/>
<polygon points="568.8,488.0 571.1,486.5 571.8,503.3 569.5,504.8" fill="#d4d400"/>
<polygon points="579.6,481.1 580.2,480.7 580.8,497.5 580.2,497.8" fill="#b8b800"/>
<polygon points="615.7,458.4 616.2,458.1 616.3,474.5 615.8,474.8" fill="#b8b800"/>
<polygon points="585.9,478.0 590.3,475.2 590.5,480.8 586.0,483.6" fill="#5c5c5c"/>
<polygon points="612.0,462.1 615.2,460.1 615.2,465.4 612.1,467.4" fill="#ff00ff"/>
<polygon points="580.4,487.5 615.7,465.0 615.7,467.7 580.5,490.2" fill="#f4f4f4" stroke="#9a9a9a" stroke-width="0.40"/>
<polygon points="580.5,490.2 615.7,467.7 615.8,472.6 580.7,495.2" fill="#1a1a1a"/>
<polygon points="580.7,494.2 615.8,471.6 615.8,473.5 580.7,496.2" fill="#9a9a9a"/>
<polygon points="567.8,505.2 623.5,469.2 623.5,471.5 567.9,507.5" fill="#11ee11"/>
<polygon points="568.0,470.7 623.6,436.7 623.5,453.5 568.8,488.0" fill="#ffff00"/>
<polygon points="568.0,470.7 570.4,469.3 571.1,486.5 568.8,488.0" fill="#d4d400"/>
<polygon points="579.1,464.0 579.6,463.6 580.2,480.7 579.6,481.1" fill="#b8b800"/>
<polygon points="615.6,441.6 616.1,441.3 616.2,458.1 615.7,458.4" fill="#b8b800"/>
<polygon points="585.4,461.0 589.9,458.2 590.0,463.9 585.5,466.7" fill="#5c5c5c"/>
<polygon points="611.9,445.2 615.1,443.3 615.1,448.7 611.9,450.7" fill="#ff00ff"/>
<polygon points="579.9,470.5 615.6,448.4 615.7,451.1 580.0,473.3" fill="#f4f4f4" stroke="#9a9a9a" stroke-width="0.40"/>
<polygon points="580.0,473.3 615.7,451.1 615.7,456.1 580.1,478.4" fill="#1a1a1a"/>
<polygon points="580.1,477.4 615.7,455.1 615.7,457.1 580.2,479.4" fill="#9a9a9a"/>
<polygon points="567.0,488.3 623.5,452.8 623.5,455.1 567.2,490.7" fill="#11ee11"/>
<polygon points="567.2,451.7 623.6,418.3 623.6,436.7 568.0,470.7" fill="#ffff00"/>
<polygon points="567.2,451.7 569.6,450.3 570.4,469.3 568.0,470.7" fill="#d4d400"/>
<polygon points="578.4,445.1 579.0,444.7 579.6,463.6 579.1,464.0" fill="#b8b800"/>
<polygon points="615.5,423.1 616.1,422.8 616.1,441.3 615.6,441.6" fill="#b8b800"/>
<polygon points="584.8,442.3 589.4,439.5 589.6,445.8 585.0,448.5" fill="#5c5c5c"/>
<polygon points="611.7,426.8 615.0,424.9 615.0,430.9 611.8,432.8" fill="#ff00ff"/>
<polygon points="579.2,452.4 615.6,430.5 615.6,433.5 579.3,455.4" fill="#f4f4f4" stroke="#9a9a9a" stroke-width="0.40"/>
<polygon points="579.3,455.4 615.6,433.5 615.6,439.0 579.5,461.0" fill="#1a1a1a"/>
<polygon points="579.5,459.9 615.6,437.9 615.6,440.1 579.6,462.1" fill="#9a9a9a"/>
<polygon points="566.3,471.0 623.6,436.0 623.6,438.5 566.4,473.6" fill="#11ee11"/>
<polygon points="566.3,431.6 623.6,398.8 623.6,418.3 567.2,451.7" fill="#ffff00"/>
<polygon points="566.3,431.6 568.7,430.2 569.6,450.3 567.2,451.7" fill="#d4d400"/>
<polygon points="577.7,425.1 578.3,424.7 579.0,444.7 578.4,445.1" fill="#b8b800"/>
<polygon points="615.4,403.5 616.0,403.1 616.1,422.8 615.5,423.1" fill="#b8b800"/>
<polygon points="584.2,422.4 588.9,419.7 589.1,426.3 584.4,429.0" fill="#5c5c5c"/>
<polygon points="611.6,407.3 614.9,405.4 614.9,411.7 611.6,413.6" fill="#ff00ff"/>
<polygon points="578.6,432.8 615.5,411.4 615.5,414.5 578.7,436.0" fill="#f4f4f4" stroke="#9a9a9a" stroke-width="0.40"/>
<polygon points="578.7,436.0 615.5,414.5 615.5,420.4 578.9,442.0" fill="#1a1a1a"/>
<polygon points="578.8,440.8 615.5,419.2 615.5,421.5 578.9,443.2" fill="#9a9a9a"/>
<polygon points="565.4,452.0 623.6,417.5 623.6,420.2 565.5,454.8" fill="#11ee11"/>
<polygon points="565.4,410.7 623.6,378.5 623.6,398.8 566.3,431.6" fill="#ffff00"/>
<polygon points="565.4,410.7 567.8,409.3 568.7,430.2 566.3,431.6" fill="#d4d400"/>
<polygon points="577.0,404.3 577.6,403.9 578.3,424.7 577.7,425.1" fill="#b8b800"/>
<polygon points="615.3,383.1 615.9,382.8 616.0,403.1 615.4,403.5" fill="#b8b800"/>
<polygon points="583.6,401.7 588.4,399.0 588.5,405.9 583.8,408.6" fill="#5c5c5c"/>
<polygon points="611.4,386.9 614.8,385.1 614.8,391.6 611.5,393.5" fill="#ff00ff"/>
<polygon points="577.9,412.3 615.4,391.3 615.4,394.6 578.0,415.6" fill="#f4f4f4" stroke="#9a9a9a" stroke-width="0.40"/>
<polygon points="578.0,415.6 615.4,394.6 615.4,400.6 578.2,421.8" fill="#1a1a1a"/>
<polygon points="578.2,420.6 615.4,399.4 615.4,401.8 578.2,423.1" fill="#9a9a9a"/>
<polygon points="564.5,431.8 623.6,398.0 623.6,400.8 564.6,434.7" fill="#11ee11"/>
<polygon points="564.5,389.8 623.7,358.4 623.6,378.5 565.4,410.7" fill="#ffff00"/>
<polygon points="564.5,389.8 567.0,388.5 567.8,409.3 565.4,410.7" fill="#d4d400"/>
<polygon points="576.3,383.6 576.9,383.2 577.6,403.9 577.0,404.3" fill="#b8b800"/>
<polygon points="615.2,362.9 615.8,362.6 615.9,382.8 615.3,383.1" fill="#b8b800"/>
<polygon points="583.0,381.1 587.8,378.5 588.0,385.3 583.2,387.9" fill="#5c5c5c"/>
<polygon points="611.2,366.7 614.7,364.8 614.7,371.4 611.3,373.2" fill="#ff00ff"/>
<polygon points="577.2,391.6 615.3,371.1 615.3,374.3 577.3,394.9" fill="#f4f4f4" stroke="#9a9a9a" stroke-width="0.40"/>
<polygon points="577.3,394.9 615.3,374.3 615.3,380.3 577.5,401.1" fill="#1a1a1a"/>
<polygon points="577.4,399.8 615.3,379.1 615.3,381.5 577.5,402.3" fill="#9a9a9a"/>
<polygon points="563.5,410.8 623.6,377.7 623.6,380.5 563.7,413.7" fill="#11ee11"/>
<polygon points="563.5,368.9 623.7,338.3 623.7,358.4 564.5,389.8" fill="#ffff00"/>
<polygon points="563.5,368.9 566.1,367.6 567.0,388.5 564.5,389.8" fill="#d4d400"/>
<polygon points="575.5,362.8 576.2,362.5 576.9,383.2 576.3,383.6" fill="#b8b800"/>
<polygon points="615.1,342.7 615.7,342.4 615.8,362.6 615.2,362.9" fill="#b8b800"/>
<polygon points="582.4,360.4 587.3,357.9 587.5,364.8 582.6,367.3" fill="#5c5c5c"/>
<polygon points="611.1,346.4 614.5,344.6 614.6,351.1 611.1,352.9" fill="#ff00ff"/>
<polygon points="576.4,370.9 615.2,350.8 615.2,354.1 576.6,374.2" fill="#f4f4f4" stroke="#9a9a9a" stroke-width="0.40"/>
<polygon points="576.6,374.2 615.2,354.1 615.2,360.1 576.8,380.4" fill="#1a1a1a"/>
<polygon points="576.7,379.1 615.2,358.9 615.2,361.3 576.8,381.6" fill="#9a9a9a"/>
<polygon points="562.6,390.0 623.7,357.6 623.6,360.4 562.7,392.9" fill="#11ee11"/>
<polygon points="562.7,348.7 623.7,318.9 623.7,338.3 563.5,368.9" fill="#ffff00"/>
<polygon points="562.7,348.7 565.2,347.5 566.1,367.6 563.5,368.9" fill="#d4d400"/>
<polygon points="574.8,342.8 575.5,342.5 576.2,362.5 575.5,362.8" fill="#b8b800"/>
<polygon points="615.0,323.1 615.6,322.8 615.7,342.4 615.1,342.7" fill="#b8b800"/>
<polygon points="581.8,340.4 586.8,338.0 586.9,344.6 582.0,347.0" fill="#5c5c5c"/>
<polygon points="610.9,326.7 614.4,325.0 614.5,331.3 611.0,333.0" fill="#ff00ff"/>
<polygon points="575.8,350.5 615.1,331.0 615.1,334.1 575.9,353.8" fill="#f4f4f4" stroke="#9a9a9a" stroke-width="0.40"/>
<polygon points="575.9,353.8 615.1,334.1 615.1,340.0 576.1,359.7" fill="#1a1a1a"/>
<polygon points="576.0,358.5 615.1,338.8 615.1,341.1 576.1,360.9" fill="#9a9a9a"/>
<polygon points="561.6,369.1 623.7,337.5 623.7,340.2 561.8,371.9" fill="#11ee11"/>
<polygon points="561.7,326.1 623.7,297.1 623.7,318.9 562.7,348.7" fill="#ffff00"/>
<polygon points="561.7,326.1 564.3,324.9 565.2,347.5 562.7,348.7" fill="#d4d400"/>
<polygon points="574.1,320.3 574.7,320.0 575.5,342.5 574.8,342.8" fill="#b8b800"/>
<polygon points="614.9,301.3 615.5,301.0 615.6,322.8 615.0,323.1" fill="#b8b800"/>
<polygon points="581.1,318.2 586.2,315.8 586.4,323.2 581.4,325.6" fill="#5c5c5c"/>
<polygon points="610.7,305.0 614.3,303.3 614.4,310.4 610.8,312.1" fill="#ff00ff"/>
<polygon points="575.0,329.1 614.9,310.1 615.0,313.6 575.1,332.7" fill="#f4f4f4" stroke="#9a9a9a" stroke-width="0.40"/>
<polygon points="575.1,332.7 615.0,313.6 615.0,320.1 575.4,339.4" fill="#1a1a1a"/>
<polygon points="575.3,338.0 615.0,318.8 615.0,321.4 575.4,340.7" fill="#9a9a9a"/>
<polygon points="560.7,348.8 623.7,318.0 623.7,321.0 560.9,351.9" fill="#11ee11"/>
<polygon points="623.5,516.3 643.0,502.7 642.7,518.7 623.4,532.4" fill="#d8d8f2"/>
<polygon points="635.6,511.0 638.0,509.4 637.9,513.6 635.6,515.2" fill="#ffff00"/>
<polygon points="623.5,516.3 629.4,512.2 629.3,528.3 623.4,532.4" fill="#ffff00"/>
<polygon points="624.4,518.9 628.4,516.1 628.4,525.8 624.4,528.5" fill="#dcdc80"/>
<line x1="624.4" y1="518.1" x2="624.4" y2="529.3" stroke="#6e6e78" stroke-width="0.80"/>
<line x1="633.7" y1="511.6" x2="633.6" y2="522.8" stroke="#6e6e78" stroke-width="0.80"/>
<line x1="642.0" y1="505.8" x2="641.8" y2="517.0" stroke="#6e6e78" stroke-width="0.80"/>
<polygon points="624.4,526.6 641.9,514.3 641.9,515.6 624.4,527.9" fill="#77777f"/>
<polygon points="623.4,529.2 642.8,516.5 642.7,518.7 623.4,532.4" fill="#11ee11"/>
<polygon points="623.5,501.8 643.3,488.3 643.0,502.7 623.5,516.3" fill="#d8d8f2"/>
<polygon points="635.8,496.3 638.2,494.7 638.1,498.4 635.8,500.0" fill="#ffff00"/>
<polygon points="623.5,501.8 629.5,497.7 629.4,512.2 623.5,516.3" fill="#ffff00"/>
<polygon points="624.5,504.0 628.5,501.3 628.4,510.0 624.5,512.7" fill="#dcdc80"/>
<line x1="624.5" y1="503.3" x2="624.5" y2="513.5" stroke="#6e6e78" stroke-width="0.80"/>
<line x1="633.8" y1="496.9" x2="633.7" y2="507.0" stroke="#6e6e78" stroke-width="0.80"/>
<line x1="642.3" y1="491.1" x2="642.1" y2="501.2" stroke="#6e6e78" stroke-width="0.80"/>
<polygon points="624.5,511.0 642.1,498.8 642.1,499.9 624.5,512.2" fill="#77777f"/>
<polygon points="623.5,513.4 643.1,500.7 643.0,502.7 623.5,516.3" fill="#11ee11"/>
<polygon points="622.7,516.5 644.4,501.5 644.3,504.2 622.7,519.2" fill="#f8f8f8" stroke="#9a9a9a" stroke-width="0.50"/>
<polygon points="623.5,486.8 643.5,473.4 643.3,488.3 623.5,501.8" fill="#d8d8f2"/>
<polygon points="636.0,481.4 638.4,479.9 638.3,483.7 635.9,485.3" fill="#ffff00"/>
<polygon points="623.5,486.8 629.6,482.7 629.5,497.7 623.5,501.8" fill="#ffff00"/>
<polygon points="624.5,489.1 628.6,486.4 628.5,495.4 624.5,498.1" fill="#dcdc80"/>
<line x1="624.5" y1="488.3" x2="624.5" y2="498.8" stroke="#6e6e78" stroke-width="0.80"/>
<line x1="634.0" y1="482.0" x2="633.9" y2="492.5" stroke="#6e6e78" stroke-width="0.80"/>
<line x1="642.5" y1="476.3" x2="642.3" y2="486.7" stroke="#6e6e78" stroke-width="0.80"/>
<polygon points="624.5,496.3 642.4,484.2 642.4,485.4 624.5,497.5" fill="#77777f"/>
<polygon points="623.5,498.8 643.3,486.2 643.3,488.3 623.5,501.8" fill="#11ee11"/>
<polygon points="622.8,501.9 644.7,487.1 644.6,489.8 622.8,504.8" fill="#f8f8f8" stroke="#9a9a9a" stroke-width="0.50"/>
<polygon points="623.5,469.8 643.8,456.7 643.5,473.4 623.5,486.8" fill="#d8d8f2"/>
<polygon points="636.2,465.0 638.6,463.5 638.5,467.8 636.1,469.4" fill="#ffff00"/>
<polygon points="623.5,469.8 629.7,465.8 629.6,482.7 623.5,486.8" fill="#ffff00"/>
<polygon points="624.5,472.6 628.7,469.9 628.6,480.0 624.5,482.7" fill="#dcdc80"/>
<line x1="624.5" y1="471.7" x2="624.5" y2="483.6" stroke="#6e6e78" stroke-width="0.80"/>
<line x1="634.2" y1="465.5" x2="634.0" y2="477.3" stroke="#6e6e78" stroke-width="0.80"/>
<line x1="642.8" y1="459.9" x2="642.6" y2="471.6" stroke="#6e6e78" stroke-width="0.80"/>
<polygon points="624.5,480.7 642.6,468.8 642.6,470.1 624.5,482.1" fill="#77777f"/>
<polygon points="623.5,483.4 643.6,471.1 643.5,473.4 623.5,486.8" fill="#11ee11"/>
<polygon points="622.8,486.9 644.9,472.2 644.9,475.3 622.8,490.1" fill="#f8f8f8" stroke="#9a9a9a" stroke-width="0.50"/>
<polygon points="623.5,453.5 644.1,440.5 643.8,456.7 623.5,469.8" fill="#d8d8f2"/>
<polygon points="636.4,448.7 638.8,447.1 638.7,451.3 636.3,452.9" fill="#ffff00"/>
<polygon points="623.5,453.5 629.8,449.5 629.7,465.8 623.5,469.8" fill="#ffff00"/>
<polygon points="624.6,456.1 628.7,453.5 628.7,463.3 624.6,465.9" fill="#dcdc80"/>
<line x1="624.6" y1="455.3" x2="624.6" y2="466.7" stroke="#6e6e78" stroke-width="0.80"/>
<line x1="634.3" y1="449.1" x2="634.2" y2="460.5" stroke="#6e6e78" stroke-width="0.80"/>
<line x1="643.1" y1="443.6" x2="642.9" y2="454.9" stroke="#6e6e78" stroke-width="0.80"/>
<polygon points="624.6,464.0 642.9,452.2 642.9,453.5 624.6,465.3" fill="#77777f"/>
<polygon points="623.5,466.6 643.9,454.5 643.8,456.7 623.5,469.8" fill="#11ee11"/>
<polygon points="622.8,470.0 645.2,455.5 645.2,458.5 622.8,473.1" fill="#f8f8f8" stroke="#9a9a9a" stroke-width="0.50"/>
<polygon points="623.6,436.7 644.4,424.0 644.1,440.5 623.5,453.5" fill="#d8d8f2"/>
<polygon points="636.5,432.1 639.0,430.6 639.0,434.9 636.5,436.4" fill="#ffff00"/>
<polygon points="623.6,436.7 629.9,432.8 629.8,449.5 623.5,453.5" fill="#ffff00"/>
<polygon points="624.6,439.5 628.8,436.9 628.8,446.9 624.6,449.5" fill="#dcdc80"/>
<line x1="624.6" y1="438.6" x2="624.6" y2="450.3" stroke="#6e6e78" stroke-width="0.80"/>
<line x1="634.5" y1="432.5" x2="634.4" y2="444.2" stroke="#6e6e78" stroke-width="0.80"/>
<line x1="643.3" y1="427.1" x2="643.1" y2="438.7" stroke="#6e6e78" stroke-width="0.80"/>
<polygon points="624.6,447.5 643.2,435.9 643.2,437.2 624.6,448.8" fill="#77777f"/>
<polygon points="623.5,450.1 644.1,438.2 644.1,440.5 623.5,453.5" fill="#11ee11"/>
<polygon points="622.8,453.6 645.5,439.3 645.5,442.4 622.8,456.7" fill="#f8f8f8" stroke="#9a9a9a" stroke-width="0.50"/>
<polygon points="623.6,418.3 644.7,405.8 644.4,424.0 623.6,436.7" fill="#d8d8f2"/>
<polygon points="636.8,414.2 639.3,412.7 639.2,417.4 636.7,418.9" fill="#ffff00"/>
<polygon points="623.6,418.3 630.0,414.5 629.9,432.8 623.6,436.7" fill="#ffff00"/>
<polygon points="624.6,421.4 628.9,418.8 628.9,429.8 624.6,432.4" fill="#dcdc80"/>
<line x1="624.7" y1="420.5" x2="624.6" y2="433.3" stroke="#6e6e78" stroke-width="0.80"/>
<line x1="634.7" y1="414.5" x2="634.5" y2="427.3" stroke="#6e6e78" stroke-width="0.80"/>
<line x1="643.6" y1="409.1" x2="643.4" y2="421.9" stroke="#6e6e78" stroke-width="0.80"/>
<polygon points="624.6,430.2 643.5,418.8 643.4,420.3 624.6,431.7" fill="#77777f"/>
<polygon points="623.6,433.1 644.4,421.4 644.4,424.0 623.6,436.7" fill="#11ee11"/>
<polygon points="622.8,436.8 645.9,422.7 645.8,426.1 622.8,440.3" fill="#f8f8f8" stroke="#9a9a9a" stroke-width="0.50"/>
<polygon points="623.6,398.8 645.1,386.5 644.7,405.8 623.6,418.3" fill="#d8d8f2"/>
<polygon points="637.0,395.0 639.5,393.5 639.4,398.6 636.9,400.1" fill="#ffff00"/>
<polygon points="623.6,398.8 630.1,395.0 630.0,414.5 623.6,418.3" fill="#ffff00"/>
<polygon points="624.7,402.1 629.0,399.6 629.0,411.3 624.7,413.8" fill="#dcdc80"/>
<line x1="624.7" y1="401.1" x2="624.7" y2="414.8" stroke="#6e6e78" stroke-width="0.80"/>
<line x1="634.8" y1="395.3" x2="634.7" y2="408.8" stroke="#6e6e78" stroke-width="0.80"/>
<line x1="644.0" y1="390.0" x2="643.7" y2="403.5" stroke="#6e6e78" stroke-width="0.80"/>
<polygon points="624.7,411.5 643.8,400.3 643.8,401.8 624.7,413.0" fill="#77777f"/>
<polygon points="623.6,414.4 644.8,403.1 644.7,405.8 623.6,418.3" fill="#11ee11"/>
<polygon points="622.8,418.4 646.2,404.5 646.1,408.1 622.8,422.0" fill="#f8f8f8" stroke="#9a9a9a" stroke-width="0.50"/>
<polygon points="623.6,378.5 645.4,366.5 645.1,386.5 623.6,398.8" fill="#d8d8f2"/>
<polygon points="637.2,375.1 639.8,373.6 639.7,378.9 637.1,380.3" fill="#ffff00"/>
<polygon points="623.6,378.5 630.3,374.9 630.1,395.0 623.6,398.8" fill="#ffff00"/>
<polygon points="624.7,382.0 629.1,379.6 629.1,391.7 624.7,394.1" fill="#dcdc80"/>
<line x1="624.7" y1="381.0" x2="624.7" y2="395.1" stroke="#6e6e78" stroke-width="0.80"/>
<line x1="635.0" y1="375.3" x2="634.9" y2="389.3" stroke="#6e6e78" stroke-width="0.80"/>
<line x1="644.3" y1="370.1" x2="644.1" y2="384.1" stroke="#6e6e78" stroke-width="0.80"/>
<polygon points="624.7,391.7 644.1,380.8 644.1,382.3 624.7,393.3" fill="#77777f"/>
<polygon points="623.6,394.8 645.1,383.7 645.1,386.5 623.6,398.8" fill="#11ee11"/>
<polygon points="622.8,398.8 646.6,385.2 646.5,389.0 622.8,402.6" fill="#f8f8f8" stroke="#9a9a9a" stroke-width="0.50"/>
<polygon points="623.7,358.4 645.8,346.7 645.4,366.5 623.6,378.5" fill="#d8d8f2"/>
<polygon points="637.4,355.1 640.0,353.7 640.0,358.9 637.4,360.3" fill="#ffff00"/>
<polygon points="623.7,358.4 630.4,354.9 630.3,374.9 623.6,378.5" fill="#ffff00"/>
<polygon points="624.8,361.9 629.3,359.5 629.2,371.5 624.7,373.9" fill="#dcdc80"/>
<line x1="624.8" y1="360.9" x2="624.7" y2="374.9" stroke="#6e6e78" stroke-width="0.80"/>
<line x1="635.2" y1="355.3" x2="635.1" y2="369.3" stroke="#6e6e78" stroke-width="0.80"/>
<line x1="644.6" y1="350.3" x2="644.4" y2="364.2" stroke="#6e6e78" stroke-width="0.80"/>
<polygon points="624.8,371.6 644.4,360.8 644.4,362.4 624.7,373.1" fill="#77777f"/>
<polygon points="623.6,374.6 645.5,363.8 645.4,366.5 623.6,378.5" fill="#11ee11"/>
<polygon points="622.8,378.6 646.9,365.3 646.9,369.0 622.8,382.3" fill="#f8f8f8" stroke="#9a9a9a" stroke-width="0.50"/>
<polygon points="623.7,338.3 646.1,326.9 645.8,346.7 623.7,358.4" fill="#d8d8f2"/>
<polygon points="637.7,335.2 640.3,333.8 640.2,339.0 637.6,340.4" fill="#ffff00"/>
<polygon points="623.7,338.3 630.5,334.8 630.4,354.9 623.7,358.4" fill="#ffff00"/>
<polygon points="624.8,341.8 629.4,339.4 629.3,351.5 624.8,353.9" fill="#dcdc80"/>
<line x1="624.8" y1="340.8" x2="624.8" y2="354.8" stroke="#6e6e78" stroke-width="0.80"/>
<line x1="635.4" y1="335.3" x2="635.3" y2="349.3" stroke="#6e6e78" stroke-width="0.80"/>
<line x1="645.0" y1="330.4" x2="644.7" y2="344.3" stroke="#6e6e78" stroke-width="0.80"/>
<polygon points="624.8,351.5 644.8,341.0 644.7,342.6 624.8,353.1" fill="#77777f"/>
<polygon points="623.7,354.4 645.8,344.0 645.8,346.7 623.7,358.4" fill="#11ee11"/>
<polygon points="622.8,358.5 647.3,345.5 647.2,349.2 622.8,362.2" fill="#f8f8f8" stroke="#9a9a9a" stroke-width="0.50"/>
<polygon points="623.7,318.9 646.4,307.7 646.1,326.9 623.7,338.3" fill="#d8d8f2"/>
<polygon points="637.9,315.8 640.6,314.5 640.5,319.5 637.8,320.8" fill="#ffff00"/>
<polygon points="623.7,318.9 630.6,315.5 630.5,334.8 623.7,338.3" fill="#ffff00"/>
<polygon points="624.9,322.2 629.5,320.0 629.4,331.6 624.8,333.9" fill="#dcdc80"/>
<line x1="624.9" y1="321.2" x2="624.8" y2="334.8" stroke="#6e6e78" stroke-width="0.80"/>
<line x1="635.6" y1="315.9" x2="635.5" y2="329.4" stroke="#6e6e78" stroke-width="0.80"/>
<line x1="645.3" y1="311.2" x2="645.1" y2="324.6" stroke="#6e6e78" stroke-width="0.80"/>
<polygon points="624.8,331.6 645.1,321.4 645.1,322.9 624.8,333.1" fill="#77777f"/>
<polygon points="623.7,334.5 646.1,324.2 646.1,326.9 623.7,338.3" fill="#11ee11"/>
<polygon points="622.9,338.3 647.7,325.7 647.6,329.3 622.9,342.0" fill="#f8f8f8" stroke="#9a9a9a" stroke-width="0.50"/>
<polygon points="623.7,297.1 646.8,286.4 646.4,307.7 623.7,318.9" fill="#d8d8f2"/>
<polygon points="638.1,294.8 640.9,293.5 640.8,299.1 638.1,300.4" fill="#ffff00"/>
<polygon points="623.7,297.1 630.8,293.9 630.6,315.5 623.7,318.9" fill="#ffff00"/>
<polygon points="624.9,301.0 629.6,298.8 629.5,311.8 624.9,314.0" fill="#dcdc80"/>
<line x1="624.9" y1="299.9" x2="624.9" y2="315.1" stroke="#6e6e78" stroke-width="0.80"/>
<line x1="635.8" y1="294.7" x2="635.7" y2="309.8" stroke="#6e6e78" stroke-width="0.80"/>
<line x1="645.6" y1="290.1" x2="645.4" y2="305.1" stroke="#6e6e78" stroke-width="0.80"/>
<polygon points="624.9,311.4 645.4,301.5 645.4,303.2 624.9,313.2" fill="#77777f"/>
<polygon points="623.7,314.6 646.5,304.8 646.4,307.7 623.7,318.9" fill="#11ee11"/>
<polygon points="622.9,318.8 648.0,306.6 648.0,310.5 622.9,322.9" fill="#f8f8f8" stroke="#9a9a9a" stroke-width="0.50"/>
<polygon points="623.7,289.5 646.9,278.9 646.8,287.3 623.7,298.1" fill="#f6f6f6" stroke="#999" stroke-width="0.40"/>
<polygon points="643.0,502.7 680.5,476.7 679.7,492.4 642.7,518.7" fill="#ffff00"/>
<polygon points="643.0,502.7 644.6,501.6 644.3,517.6 642.7,518.7" fill="#d4d400"/>
<polygon points="650.4,497.6 650.8,497.3 650.4,513.3 650.0,513.5" fill="#b8b800"/>
<polygon points="675.0,480.4 675.4,480.2 674.7,495.9 674.3,496.2" fill="#b8b800"/>
<polygon points="654.5,495.5 657.6,493.4 657.4,498.6 654.4,500.8" fill="#5c5c5c"/>
<polygon points="672.4,483.5 674.6,482.0 674.4,487.0 672.2,488.6" fill="#ff00ff"/>
<polygon points="650.6,503.7 674.8,486.8 674.6,489.3 650.5,506.3" fill="#f4f4f4" stroke="#9a9a9a" stroke-width="0.40"/>
<polygon points="650.5,506.3 674.6,489.3 674.4,494.0 650.4,511.0" fill="#1a1a1a"/>
<polygon points="650.4,510.1 674.5,493.1 674.4,494.9 650.4,512.0" fill="#9a9a9a"/>
<polygon points="641.4,519.0 679.7,491.7 679.6,493.9 641.4,521.2" fill="#11ee11"/>
<polygon points="643.3,488.3 681.1,462.5 680.5,476.7 643.0,502.7" fill="#ffff00"/>
<polygon points="643.3,488.3 644.8,487.2 644.6,501.6 643.0,502.7" fill="#d4d400"/>
<polygon points="650.7,483.2 651.1,483.0 650.8,497.3 650.4,497.6" fill="#b8b800"/>
<polygon points="675.6,466.3 676.0,466.0 675.4,480.2 675.0,480.4" fill="#b8b800"/>
<polygon points="654.9,481.1 658.0,479.0 657.9,483.7 654.8,485.8" fill="#5c5c5c"/>
<polygon points="673.0,469.2 675.2,467.7 675.0,472.2 672.8,473.7" fill="#ff00ff"/>
<polygon points="651.0,488.8 675.4,472.0 675.3,474.2 650.9,491.0" fill="#f4f4f4" stroke="#9a9a9a" stroke-width="0.40"/>
<polygon points="650.9,491.0 675.3,474.2 675.1,478.5 650.8,495.3" fill="#1a1a1a"/>
<polygon points="650.8,494.5 675.2,477.6 675.1,479.3 650.8,496.2" fill="#9a9a9a"/>
<polygon points="641.7,503.1 680.5,476.1 680.4,478.1 641.6,505.1" fill="#11ee11"/>
<polygon points="643.5,473.4 681.8,448.0 681.1,462.5 643.3,488.3" fill="#ffff00"/>
<polygon points="643.5,473.4 645.1,472.4 644.8,487.2 643.3,488.3" fill="#d4d400"/>
<polygon points="651.1,468.4 651.4,468.2 651.1,483.0 650.7,483.2" fill="#b8b800"/>
<polygon points="676.3,451.7 676.7,451.4 676.0,466.0 675.6,466.3" fill="#b8b800"/>
<polygon points="655.3,466.3 658.4,464.3 658.3,469.2 655.2,471.2" fill="#5c5c5c"/>
<polygon points="673.6,454.6 675.9,453.1 675.7,457.8 673.4,459.3" fill="#ff00ff"/>
<polygon points="651.3,474.1 676.0,457.5 675.9,459.9 651.2,476.5" fill="#f4f4f4" stroke="#9a9a9a" stroke-width="0.40"/>
<polygon points="651.2,476.5 675.9,459.9 675.7,464.2 651.1,480.9" fill="#1a1a1a"/>
<polygon points="651.2,480.0 675.8,463.4 675.7,465.1 651.1,481.8" fill="#9a9a9a"/>
<polygon points="641.9,488.6 681.2,462.0 681.1,464.0 641.9,490.7" fill="#11ee11"/>
<polygon points="643.8,456.7 682.6,431.6 681.8,448.0 643.5,473.4" fill="#ffff00"/>
<polygon points="643.8,456.7 645.4,455.7 645.1,472.4 643.5,473.4" fill="#d4d400"/>
<polygon points="651.4,451.8 651.8,451.5 651.4,468.2 651.1,468.4" fill="#b8b800"/>
<polygon points="677.0,435.2 677.4,435.0 676.7,451.4 676.3,451.7" fill="#b8b800"/>
<polygon points="655.8,449.8 658.9,447.8 658.8,453.3 655.6,455.3" fill="#5c5c5c"/>
<polygon points="674.3,438.3 676.6,436.8 676.3,442.1 674.1,443.6" fill="#ff00ff"/>
<polygon points="651.7,458.2 676.7,441.9 676.6,444.5 651.6,460.9" fill="#f4f4f4" stroke="#9a9a9a" stroke-width="0.40"/>
<polygon points="651.6,460.9 676.6,444.5 676.4,449.4 651.5,465.9" fill="#1a1a1a"/>
<polygon points="651.5,464.9 676.4,448.4 676.3,450.4 651.5,466.9" fill="#9a9a9a"/>
<polygon points="642.1,473.7 681.9,447.3 681.7,449.6 642.1,476.0" fill="#11ee11"/>
<polygon points="644.1,440.5 683.4,415.8 682.6,431.6 643.8,456.7" fill="#ffff00"/>
<polygon points="644.1,440.5 645.7,439.5 645.4,455.7 643.8,456.7" fill="#d4d400"/>
<polygon points="651.8,435.6 652.2,435.4 651.8,451.5 651.4,451.8" fill="#b8b800"/>
<polygon points="677.7,419.4 678.1,419.1 677.4,435.0 677.0,435.2" fill="#b8b800"/>
<polygon points="656.2,433.7 659.4,431.7 659.2,437.0 656.1,439.0" fill="#5c5c5c"/>
<polygon points="675.0,422.3 677.3,420.9 677.0,426.0 674.7,427.5" fill="#ff00ff"/>
<polygon points="652.1,441.9 677.4,425.8 677.3,428.3 652.0,444.5" fill="#f4f4f4" stroke="#9a9a9a" stroke-width="0.40"/>
<polygon points="652.0,444.5 677.3,428.3 677.1,433.0 651.9,449.3" fill="#1a1a1a"/>
<polygon points="651.9,448.3 677.1,432.1 677.1,434.0 651.9,450.2" fill="#9a9a9a"/>
<polygon points="642.4,457.0 682.6,431.0 682.5,433.2 642.4,459.2" fill="#11ee11"/>
<polygon points="644.4,424.0 684.1,399.6 683.4,415.8 644.1,440.5" fill="#ffff00"/>
<polygon points="644.4,424.0 646.1,422.9 645.7,439.5 644.1,440.5" fill="#d4d400"/>
<polygon points="652.2,419.2 652.6,418.9 652.2,435.4 651.8,435.6" fill="#b8b800"/>
<polygon points="678.4,403.1 678.8,402.9 678.1,419.1 677.7,419.4" fill="#b8b800"/>
<polygon points="656.7,417.3 659.9,415.3 659.7,420.7 656.5,422.7" fill="#5c5c5c"/>
<polygon points="675.6,406.1 677.9,404.7 677.7,409.9 675.4,411.3" fill="#ff00ff"/>
<polygon points="652.5,425.6 678.1,409.7 678.0,412.3 652.4,428.2" fill="#f4f4f4" stroke="#9a9a9a" stroke-width="0.40"/>
<polygon points="652.4,428.2 678.0,412.3 677.8,417.1 652.3,433.1" fill="#1a1a1a"/>
<polygon points="652.3,432.1 677.8,416.1 677.7,418.1 652.3,434.1" fill="#9a9a9a"/>
<polygon points="642.7,440.8 683.4,415.1 683.3,417.4 642.6,443.0" fill="#11ee11"/>
<polygon points="644.7,405.8 685.0,381.9 684.1,399.6 644.4,424.0" fill="#ffff00"/>
<polygon points="644.7,405.8 646.4,404.8 646.1,422.9 644.4,424.0" fill="#d4d400"/>
<polygon points="652.6,401.1 653.1,400.8 652.6,418.9 652.2,419.2" fill="#b8b800"/>
<polygon points="679.2,385.3 679.6,385.1 678.8,402.9 678.4,403.1" fill="#b8b800"/>
<polygon points="657.1,399.3 660.4,397.4 660.2,403.3 657.0,405.3" fill="#5c5c5c"/>
<polygon points="676.4,388.4 678.7,387.0 678.5,392.7 676.1,394.2" fill="#ff00ff"/>
<polygon points="652.9,408.1 678.9,392.5 678.7,395.4 652.8,411.0" fill="#f4f4f4" stroke="#9a9a9a" stroke-width="0.40"/>
<polygon points="652.8,411.0 678.7,395.4 678.5,400.7 652.7,416.4" fill="#1a1a1a"/>
<polygon points="652.7,415.3 678.5,399.6 678.5,401.7 652.7,417.5" fill="#9a9a9a"/>
<polygon points="642.9,424.1 684.2,398.9 684.1,401.4 642.9,426.6" fill="#11ee11"/>
<polygon points="645.1,386.5 685.9,363.1 685.0,381.9 644.7,405.8" fill="#ffff00"/>
<polygon points="645.1,386.5 646.8,385.5 646.4,404.8 644.7,405.8" fill="#d4d400"/>
<polygon points="653.1,381.9 653.5,381.6 653.1,400.8 652.6,401.1" fill="#b8b800"/>
<polygon points="680.0,366.5 680.4,366.3 679.6,385.1 679.2,385.3" fill="#b8b800"/>
<polygon points="657.7,380.2 661.0,378.3 660.8,384.7 657.5,386.6" fill="#5c5c5c"/>
<polygon points="677.1,369.6 679.5,368.2 679.3,374.3 676.9,375.7" fill="#ff00ff"/>
<polygon points="653.3,389.4 679.7,374.1 679.5,377.1 653.3,392.4" fill="#f4f4f4" stroke="#9a9a9a" stroke-width="0.40"/>
<polygon points="653.3,392.4 679.5,377.1 679.3,382.7 653.1,398.2" fill="#1a1a1a"/>
<polygon points="653.1,397.0 679.3,381.6 679.2,383.8 653.1,399.3" fill="#9a9a9a"/>
<polygon points="643.2,405.9 685.0,381.1 684.9,383.7 643.2,408.5" fill="#11ee11"/>
<polygon points="645.4,366.5 686.8,343.7 685.9,363.1 645.1,386.5" fill="#ffff00"/>
<polygon points="645.4,366.5 647.1,365.6 646.8,385.5 645.1,386.5" fill="#d4d400"/>
<polygon points="653.6,362.0 654.0,361.8 653.5,381.6 653.1,381.9" fill="#b8b800"/>
<polygon points="680.8,347.0 681.2,346.8 680.4,366.3 680.0,366.5" fill="#b8b800"/>
<polygon points="658.2,360.4 661.6,358.6 661.4,365.2 658.0,367.0" fill="#5c5c5c"/>
<polygon points="678.0,350.1 680.4,348.8 680.1,355.1 677.7,356.4" fill="#ff00ff"/>
<polygon points="653.8,369.8 680.5,354.8 680.4,358.0 653.7,373.0" fill="#f4f4f4" stroke="#9a9a9a" stroke-width="0.40"/>
<polygon points="653.7,373.0 680.4,358.0 680.1,363.8 653.6,378.9" fill="#1a1a1a"/>
<polygon points="653.6,377.7 680.2,362.6 680.1,364.9 653.6,380.1" fill="#9a9a9a"/>
<polygon points="643.6,386.6 685.9,362.3 685.8,365.0 643.5,389.3" fill="#11ee11"/>
<polygon points="645.8,346.7 687.7,324.4 686.8,343.7 645.4,366.5" fill="#ffff00"/>
<polygon points="645.8,346.7 647.5,345.8 647.1,365.6 645.4,366.5" fill="#d4d400"/>
<polygon points="654.0,342.3 654.5,342.1 654.0,361.8 653.6,362.0" fill="#b8b800"/>
<polygon points="681.7,327.6 682.1,327.4 681.2,346.8 680.8,347.0" fill="#b8b800"/>
<polygon points="658.7,340.8 662.1,339.0 661.9,345.5 658.5,347.3" fill="#5c5c5c"/>
<polygon points="678.8,330.7 681.2,329.4 680.9,335.7 678.5,337.0" fill="#ff00ff"/>
<polygon points="654.3,350.0 681.3,335.4 681.2,338.5 654.2,353.2" fill="#f4f4f4" stroke="#9a9a9a" stroke-width="0.40"/>
<polygon points="654.2,353.2 681.2,338.5 680.9,344.3 654.1,359.1" fill="#1a1a1a"/>
<polygon points="654.1,357.9 681.0,343.2 680.9,345.5 654.0,360.2" fill="#9a9a9a"/>
<polygon points="643.9,366.6 686.8,342.9 686.7,345.6 643.8,369.3" fill="#11ee11"/>
<polygon points="646.1,326.9 688.6,305.2 687.7,324.4 645.8,346.7" fill="#ffff00"/>
<polygon points="646.1,326.9 647.9,326.0 647.5,345.8 645.8,346.7" fill="#d4d400"/>
<polygon points="654.5,322.6 654.9,322.4 654.5,342.1 654.0,342.3" fill="#b8b800"/>
<polygon points="682.5,308.3 682.9,308.1 682.1,327.4 681.7,327.6" fill="#b8b800"/>
<polygon points="659.3,321.1 662.7,319.4 662.5,325.9 659.1,327.7" fill="#5c5c5c"/>
<polygon points="679.6,311.4 682.0,310.1 681.8,316.3 679.3,317.6" fill="#ff00ff"/>
<polygon points="654.7,330.3 682.2,316.1 682.0,319.2 654.7,333.5" fill="#f4f4f4" stroke="#9a9a9a" stroke-width="0.40"/>
<polygon points="654.7,333.5 682.0,319.2 681.8,325.0 654.5,339.4" fill="#1a1a1a"/>
<polygon points="654.6,338.2 681.8,323.8 681.7,326.1 654.5,340.5" fill="#9a9a9a"/>
<polygon points="644.2,346.7 687.8,323.7 687.6,326.3 644.2,349.5" fill="#11ee11"/>
<polygon points="646.4,307.7 689.5,286.7 688.6,305.2 646.1,326.9" fill="#ffff00"/>
<polygon points="646.4,307.7 648.2,306.9 647.9,326.0 646.1,326.9" fill="#d4d400"/>
<polygon points="654.9,303.6 655.4,303.4 654.9,322.4 654.5,322.6" fill="#b8b800"/>
<polygon points="683.3,289.7 683.7,289.5 682.9,308.1 682.5,308.3" fill="#b8b800"/>
<polygon points="659.8,302.2 663.3,300.5 663.1,306.7 659.6,308.5" fill="#5c5c5c"/>
<polygon points="680.3,292.6 682.8,291.4 682.6,297.4 680.1,298.7" fill="#ff00ff"/>
<polygon points="655.2,311.0 683.0,297.2 682.9,300.2 655.1,314.1" fill="#f4f4f4" stroke="#9a9a9a" stroke-width="0.40"/>
<polygon points="655.1,314.1 682.9,300.2 682.6,305.7 655.0,319.7" fill="#1a1a1a"/>
<polygon points="655.0,318.6 682.7,304.6 682.6,306.8 655.0,320.9" fill="#9a9a9a"/>
<polygon points="644.5,326.9 688.7,304.5 688.6,307.0 644.5,329.6" fill="#11ee11"/>
<polygon points="646.8,286.4 690.5,266.0 689.5,286.7 646.4,307.7" fill="#ffff00"/>
<polygon points="646.8,286.4 648.6,285.5 648.2,306.9 646.4,307.7" fill="#d4d400"/>
<polygon points="655.4,282.3 655.9,282.1 655.4,303.4 654.9,303.6" fill="#b8b800"/>
<polygon points="684.2,268.9 684.6,268.7 683.7,289.5 683.3,289.7" fill="#b8b800"/>
<polygon points="660.3,281.1 663.9,279.5 663.7,286.5 660.1,288.2" fill="#5c5c5c"/>
<polygon points="681.2,272.0 683.7,270.8 683.4,277.5 680.9,278.7" fill="#ff00ff"/>
<polygon points="655.7,290.7 683.9,277.3 683.7,280.6 655.6,294.1" fill="#f4f4f4" stroke="#9a9a9a" stroke-width="0.40"/>
<polygon points="655.6,294.1 683.7,280.6 683.4,286.8 655.5,300.4" fill="#1a1a1a"/>
<polygon points="655.5,299.2 683.5,285.6 683.4,288.1 655.4,301.7" fill="#9a9a9a"/>
<polygon points="644.9,307.7 689.6,285.9 689.4,288.7 644.8,310.6" fill="#11ee11"/>
<polygon points="680.5,476.7 692.9,468.0 692.0,483.6 679.7,492.4" fill="#d8d8f2"/>
<polygon points="681.3,479.1 686.6,475.5 686.3,481.0 681.0,484.6" fill="#ff00ff"/>
<line x1="681.0" y1="478.6" x2="680.4" y2="489.6" stroke="#6e6e78" stroke-width="0.80"/>
<line x1="686.8" y1="474.5" x2="686.3" y2="485.5" stroke="#6e6e78" stroke-width="0.80"/>
<line x1="692.1" y1="470.8" x2="691.5" y2="481.7" stroke="#6e6e78" stroke-width="0.80"/>
<polygon points="680.6,486.9 691.7,479.1 691.6,480.3 680.5,488.2" fill="#77777f"/>
<polygon points="679.9,489.2 692.1,481.4 692.0,483.6 679.7,492.4" fill="#11ee11"/>
<polygon points="681.1,462.5 693.7,454.0 692.9,468.0 680.5,476.7" fill="#d8d8f2"/>
<polygon points="682.0,464.7 687.3,461.1 687.1,466.0 681.8,469.6" fill="#ff00ff"/>
<line x1="681.7" y1="464.2" x2="681.2" y2="474.1" stroke="#6e6e78" stroke-width="0.80"/>
<line x1="687.6" y1="460.2" x2="687.1" y2="470.0" stroke="#6e6e78" stroke-width="0.80"/>
<line x1="693.0" y1="456.5" x2="692.4" y2="466.4" stroke="#6e6e78" stroke-width="0.80"/>
<polygon points="681.3,471.7 692.5,464.0 692.5,465.1 681.2,472.9" fill="#77777f"/>
<polygon points="680.6,473.9 693.0,466.1 692.9,468.0 680.5,476.7" fill="#11ee11"/>
<polygon points="679.8,476.8 694.1,466.9 694.0,469.5 679.7,479.5" fill="#f8f8f8" stroke="#9a9a9a" stroke-width="0.50"/>
<polygon points="681.8,448.0 694.5,439.5 693.7,454.0 681.1,462.5" fill="#d8d8f2"/>
<polygon points="682.7,450.2 688.1,446.7 687.8,451.7 682.5,455.3" fill="#ff00ff"/>
<line x1="682.4" y1="449.8" x2="681.9" y2="459.9" stroke="#6e6e78" stroke-width="0.80"/>
<line x1="688.4" y1="445.8" x2="687.8" y2="455.9" stroke="#6e6e78" stroke-width="0.80"/>
<line x1="693.8" y1="442.1" x2="693.2" y2="452.3" stroke="#6e6e78" stroke-width="0.80"/>
<polygon points="682.0,457.5 693.3,449.8 693.3,451.0 681.9,458.6" fill="#77777f"/>
<polygon points="681.3,459.7 693.8,452.0 693.7,454.0 681.1,462.5" fill="#11ee11"/>
<polygon points="680.5,462.7 695.0,452.9 694.8,455.6 680.4,465.4" fill="#f8f8f8" stroke="#9a9a9a" stroke-width="0.50"/>
<polygon points="682.6,431.6 695.5,423.3 694.5,439.5 681.8,448.0" fill="#d8d8f2"/>
<polygon points="683.5,434.3 688.9,430.7 688.6,436.4 683.2,440.0" fill="#ff00ff"/>
<line x1="683.1" y1="433.7" x2="682.6" y2="445.1" stroke="#6e6e78" stroke-width="0.80"/>
<line x1="689.2" y1="429.7" x2="688.6" y2="441.1" stroke="#6e6e78" stroke-width="0.80"/>
<line x1="694.7" y1="426.2" x2="694.0" y2="437.5" stroke="#6e6e78" stroke-width="0.80"/>
<polygon points="682.7,442.4 694.2,434.8 694.1,436.1 682.7,443.7" fill="#77777f"/>
<polygon points="682.0,444.7 694.7,437.3 694.5,439.5 681.8,448.0" fill="#11ee11"/>
<polygon points="681.2,448.1 695.8,438.4 695.6,441.4 681.1,451.2" fill="#f8f8f8" stroke="#9a9a9a" stroke-width="0.50"/>
<polygon points="683.4,415.8 696.4,407.6 695.5,423.3 682.6,431.6" fill="#d8d8f2"/>
<polygon points="684.3,418.3 689.7,414.8 689.5,420.4 684.0,423.9" fill="#ff00ff"/>
<line x1="683.9" y1="417.8" x2="683.4" y2="428.8" stroke="#6e6e78" stroke-width="0.80"/>
<line x1="690.0" y1="413.9" x2="689.5" y2="424.9" stroke="#6e6e78" stroke-width="0.80"/>
<line x1="695.6" y1="410.4" x2="695.0" y2="421.4" stroke="#6e6e78" stroke-width="0.80"/>
<polygon points="683.5,426.2 695.1,418.7 695.0,420.0 683.4,427.4" fill="#77777f"/>
<polygon points="682.8,428.5 695.6,421.1 695.5,423.3 682.6,431.6" fill="#11ee11"/>
<polygon points="682.0,431.7 696.8,422.2 696.6,425.1 681.8,434.7" fill="#f8f8f8" stroke="#9a9a9a" stroke-width="0.50"/>
<polygon points="684.1,399.6 697.3,391.6 696.4,407.6 683.4,415.8" fill="#d8d8f2"/>
<polygon points="685.0,402.2 690.6,398.8 690.3,404.5 684.8,407.9" fill="#ff00ff"/>
<line x1="684.7" y1="401.7" x2="684.1" y2="413.0" stroke="#6e6e78" stroke-width="0.80"/>
<line x1="690.9" y1="397.8" x2="690.3" y2="409.1" stroke="#6e6e78" stroke-width="0.80"/>
<line x1="696.5" y1="394.4" x2="695.9" y2="405.6" stroke="#6e6e78" stroke-width="0.80"/>
<polygon points="684.3,410.2 696.0,402.9 695.9,404.2 684.2,411.5" fill="#77777f"/>
<polygon points="683.5,412.6 696.5,405.4 696.4,407.6 683.4,415.8" fill="#11ee11"/>
<polygon points="682.7,415.9 697.7,406.5 697.5,409.5 682.6,418.9" fill="#f8f8f8" stroke="#9a9a9a" stroke-width="0.50"/>
<polygon points="685.0,381.9 698.3,374.0 697.3,391.6 684.1,399.6" fill="#d8d8f2"/>
<polygon points="685.9,384.8 691.5,381.5 691.2,387.7 685.6,391.1" fill="#ff00ff"/>
<line x1="685.5" y1="384.2" x2="684.9" y2="396.6" stroke="#6e6e78" stroke-width="0.80"/>
<line x1="691.8" y1="380.4" x2="691.2" y2="392.8" stroke="#6e6e78" stroke-width="0.80"/>
<line x1="697.5" y1="377.0" x2="696.8" y2="389.4" stroke="#6e6e78" stroke-width="0.80"/>
<polygon points="685.1,393.6 697.0,386.4 696.9,387.8 685.0,395.0" fill="#77777f"/>
<polygon points="684.3,396.1 697.4,389.1 697.3,391.6 684.1,399.6" fill="#11ee11"/>
<polygon points="683.5,399.7 698.6,390.4 698.4,393.7 683.3,403.0" fill="#f8f8f8" stroke="#9a9a9a" stroke-width="0.50"/>
<polygon points="685.9,363.1 699.4,355.4 698.3,374.0 685.0,381.9" fill="#d8d8f2"/>
<polygon points="686.8,366.3 692.5,363.0 692.1,369.6 686.5,372.9" fill="#ff00ff"/>
<line x1="686.4" y1="365.6" x2="685.8" y2="378.7" stroke="#6e6e78" stroke-width="0.80"/>
<line x1="692.8" y1="361.9" x2="692.1" y2="375.0" stroke="#6e6e78" stroke-width="0.80"/>
<line x1="698.5" y1="358.6" x2="697.8" y2="371.6" stroke="#6e6e78" stroke-width="0.80"/>
<polygon points="685.9,375.5 698.0,368.5 697.9,370.0 685.9,377.0" fill="#77777f"/>
<polygon points="685.2,378.2 698.5,371.4 698.3,374.0 685.0,381.9" fill="#11ee11"/>
<polygon points="684.3,381.9 699.6,372.8 699.4,376.3 684.2,385.4" fill="#f8f8f8" stroke="#9a9a9a" stroke-width="0.50"/>
<polygon points="686.8,343.7 700.5,336.1 699.4,355.4 685.9,363.1" fill="#d8d8f2"/>
<polygon points="687.7,347.0 693.5,343.8 693.1,350.6 687.4,353.8" fill="#ff00ff"/>
<line x1="687.4" y1="346.2" x2="686.7" y2="359.8" stroke="#6e6e78" stroke-width="0.80"/>
<line x1="693.8" y1="342.7" x2="693.1" y2="356.2" stroke="#6e6e78" stroke-width="0.80"/>
<line x1="699.6" y1="339.4" x2="698.9" y2="352.9" stroke="#6e6e78" stroke-width="0.80"/>
<polygon points="686.9,356.6 699.1,349.7 699.0,351.2 686.8,358.1" fill="#77777f"/>
<polygon points="686.1,359.3 699.5,352.7 699.4,355.4 685.9,363.1" fill="#11ee11"/>
<polygon points="685.2,363.1 700.7,354.2 700.5,357.8 685.0,366.7" fill="#f8f8f8" stroke="#9a9a9a" stroke-width="0.50"/>
<polygon points="687.7,324.4 701.6,317.1 700.5,336.1 686.8,343.7" fill="#d8d8f2"/>
<polygon points="688.7,327.7 694.5,324.6 694.1,331.3 688.3,334.5" fill="#ff00ff"/>
<line x1="688.3" y1="327.0" x2="687.6" y2="340.4" stroke="#6e6e78" stroke-width="0.80"/>
<line x1="694.8" y1="323.5" x2="694.1" y2="336.9" stroke="#6e6e78" stroke-width="0.80"/>
<line x1="700.7" y1="320.3" x2="700.0" y2="333.7" stroke="#6e6e78" stroke-width="0.80"/>
<polygon points="687.8,337.2 700.1,330.5 700.1,332.0 687.7,338.7" fill="#77777f"/>
<polygon points="687.0,339.9 700.6,333.5 700.5,336.1 686.8,343.7" fill="#11ee11"/>
<polygon points="686.1,343.7 701.8,335.0 701.6,338.6 686.0,347.3" fill="#f8f8f8" stroke="#9a9a9a" stroke-width="0.50"/>
<polygon points="688.6,305.2 702.7,298.0 701.6,317.1 687.7,324.4" fill="#d8d8f2"/>
<polygon points="689.6,308.5 695.5,305.5 695.2,312.2 689.3,315.3" fill="#ff00ff"/>
<line x1="689.2" y1="307.7" x2="688.6" y2="321.2" stroke="#6e6e78" stroke-width="0.80"/>
<line x1="695.8" y1="304.4" x2="695.1" y2="317.8" stroke="#6e6e78" stroke-width="0.80"/>
<line x1="701.8" y1="301.3" x2="701.1" y2="314.6" stroke="#6e6e78" stroke-width="0.80"/>
<polygon points="688.7,318.0 701.2,311.4 701.1,312.9 688.6,319.5" fill="#77777f"/>
<polygon points="687.9,320.6 701.7,314.5 701.6,317.1 687.7,324.4" fill="#11ee11"/>
<polygon points="687.0,324.4 703.0,316.0 702.7,319.6 686.9,328.0" fill="#f8f8f8" stroke="#9a9a9a" stroke-width="0.50"/>
<polygon points="689.5,286.7 703.7,279.7 702.7,298.0 688.6,305.2" fill="#d8d8f2"/>
<polygon points="690.5,289.8 696.5,286.9 696.1,293.4 690.2,296.3" fill="#ff00ff"/>
<line x1="690.1" y1="289.1" x2="689.5" y2="302.1" stroke="#6e6e78" stroke-width="0.80"/>
<line x1="696.8" y1="285.8" x2="696.1" y2="298.7" stroke="#6e6e78" stroke-width="0.80"/>
<line x1="702.9" y1="282.8" x2="702.1" y2="295.7" stroke="#6e6e78" stroke-width="0.80"/>
<polygon points="689.6,299.0 702.3,292.6 702.2,294.0 689.6,300.4" fill="#77777f"/>
<polygon points="688.8,301.5 702.8,295.5 702.7,298.0 688.6,305.2" fill="#11ee11"/>
<polygon points="687.9,305.2 704.1,297.0 703.9,300.4 687.8,308.7" fill="#f8f8f8" stroke="#9a9a9a" stroke-width="0.50"/>
<polygon points="690.5,266.0 704.9,259.3 703.7,279.7 689.5,286.7" fill="#d8d8f2"/>
<polygon points="691.5,269.6 697.5,266.8 697.2,274.0 691.1,276.9" fill="#ff00ff"/>
<line x1="691.1" y1="268.8" x2="690.4" y2="283.3" stroke="#6e6e78" stroke-width="0.80"/>
<line x1="697.9" y1="265.6" x2="697.1" y2="280.0" stroke="#6e6e78" stroke-width="0.80"/>
<line x1="704.0" y1="262.7" x2="703.2" y2="277.0" stroke="#6e6e78" stroke-width="0.80"/>
<polygon points="690.6,279.8 703.4,273.6 703.3,275.2 690.5,281.4" fill="#77777f"/>
<polygon points="689.7,282.6 703.9,276.9 703.7,279.7 689.5,286.7" fill="#11ee11"/>
<polygon points="688.8,286.6 705.1,278.6 704.9,282.5 688.6,290.5" fill="#f8f8f8" stroke="#9a9a9a" stroke-width="0.50"/>
<polygon points="690.9,258.7 705.3,252.1 704.8,260.2 690.5,266.9" fill="#f6f6f6" stroke="#999" stroke-width="0.40"/>
<polygon points="527.9,339.8 536.0,336.0 551.6,583.6 549.8,582.7" fill="#eeeeee" stroke="#8a8a8a" stroke-width="0.50"/>
<polygon points="704.7,262.8 708.0,263.8 695.1,479.5 692.0,483.6" fill="#e6e6e6" stroke="#8a8a8a" stroke-width="0.50"/>
<polygon points="552.9,577.2 571.3,564.2 571.5,569.4 553.2,582.4" fill="#ff00ff"/>
<polygon points="624.9,526.3 642.1,514.1 642.1,519.2 624.8,531.4" fill="#ff00ff"/>
<polygon points="681.2,486.5 691.7,479.1 691.4,484.0 681.0,491.5" fill="#ff00ff"/>
<polygon points="486.5,305.0 490.0,301.0 502.0,297.0 506.0,297.0 522.0,290.0 522.0,284.0 539.0,277.5 545.0,270.0 587.5,255.4 604.8,247.7 614.0,249.0 632.6,242.5 635.5,237.5 644.6,234.2 701.0,253.7 705.0,256.0 705.0,260.0 691.0,266.0 636.5,283.7 558.0,323.8 558.0,331.0 538.0,339.0 536.0,338.0" fill="#f4f4f4" stroke="#9a9a9a" stroke-width="0.60"/>
<line x1="503.3" y1="314.7" x2="544.6" y2="297.9" stroke="#9a9a9a" stroke-width="2.20"/>
<line x1="503.3" y1="314.7" x2="544.6" y2="297.9" stroke="#11ee11" stroke-width="1.30"/>
<line x1="508.0" y1="298.3" x2="522.5" y2="306.0" stroke="#9a9a9a" stroke-width="2.20"/>
<line x1="508.0" y1="298.3" x2="522.5" y2="306.0" stroke="#d000d0" stroke-width="1.30"/>
<line x1="523.4" y1="307.0" x2="540.0" y2="315.5" stroke="#9a9a9a" stroke-width="2.20"/>
<line x1="523.4" y1="307.0" x2="540.0" y2="315.5" stroke="#11ee11" stroke-width="1.30"/>
<line x1="540.0" y1="315.5" x2="556.1" y2="323.8" stroke="#9a9a9a" stroke-width="2.20"/>
<line x1="540.0" y1="315.5" x2="556.1" y2="323.8" stroke="#d000d0" stroke-width="1.30"/>
<line x1="531.1" y1="285.4" x2="560.0" y2="300.5" stroke="#9a9a9a" stroke-width="2.20"/>
<line x1="531.1" y1="285.4" x2="560.0" y2="300.5" stroke="#11ee11" stroke-width="1.30"/>
<line x1="560.0" y1="300.5" x2="568.0" y2="305.0" stroke="#9a9a9a" stroke-width="2.20"/>
<line x1="560.0" y1="300.5" x2="568.0" y2="305.0" stroke="#d000d0" stroke-width="1.30"/>
<line x1="568.0" y1="305.0" x2="574.3" y2="313.2" stroke="#9a9a9a" stroke-width="2.20"/>
<line x1="568.0" y1="305.0" x2="574.3" y2="313.2" stroke="#11ee11" stroke-width="1.30"/>
<line x1="533.0" y1="286.3" x2="550.3" y2="279.1" stroke="#9a9a9a" stroke-width="2.20"/>
<line x1="533.0" y1="286.3" x2="550.3" y2="279.1" stroke="#11ee11" stroke-width="1.30"/>
<line x1="550.3" y1="278.6" x2="566.7" y2="285.4" stroke="#9a9a9a" stroke-width="2.20"/>
<line x1="550.3" y1="278.6" x2="566.7" y2="285.4" stroke="#d000d0" stroke-width="1.30"/>
<line x1="571.5" y1="284.4" x2="585.0" y2="278.6" stroke="#9a9a9a" stroke-width="2.20"/>
<line x1="571.5" y1="284.4" x2="585.0" y2="278.6" stroke="#11ee11" stroke-width="1.30"/>
<line x1="573.4" y1="284.4" x2="585.0" y2="291.1" stroke="#9a9a9a" stroke-width="2.20"/>
<line x1="573.4" y1="284.4" x2="585.0" y2="291.1" stroke="#11ee11" stroke-width="1.30"/>
<line x1="574.3" y1="313.2" x2="585.0" y2="307.5" stroke="#9a9a9a" stroke-width="2.20"/>
<line x1="574.3" y1="313.2" x2="585.0" y2="307.5" stroke="#11ee11" stroke-width="1.30"/>
<line x1="587.5" y1="255.4" x2="604.8" y2="247.7" stroke="#9a9a9a" stroke-width="2.20"/>
<line x1="587.5" y1="255.4" x2="604.8" y2="247.7" stroke="#11ee11" stroke-width="1.30"/>
<line x1="644.6" y1="235.6" x2="701.0" y2="253.7" stroke="#9a9a9a" stroke-width="2.20"/>
<line x1="644.6" y1="235.6" x2="701.0" y2="253.7" stroke="#d000d0" stroke-width="1.30"/>
<line x1="634.6" y1="242.4" x2="648.0" y2="248.7" stroke="#9a9a9a" stroke-width="2.20"/>
<line x1="634.6" y1="242.4" x2="648.0" y2="248.7" stroke="#d000d0" stroke-width="1.30"/>
<line x1="648.0" y1="248.7" x2="662.0" y2="253.9" stroke="#9a9a9a" stroke-width="2.20"/>
<line x1="648.0" y1="248.7" x2="662.0" y2="253.9" stroke="#11ee11" stroke-width="1.30"/>
<line x1="662.0" y1="253.9" x2="675.0" y2="258.7" stroke="#9a9a9a" stroke-width="2.20"/>
<line x1="662.0" y1="253.9" x2="675.0" y2="258.7" stroke="#d000d0" stroke-width="1.30"/>
<line x1="675.0" y1="258.7" x2="690.0" y2="264.0" stroke="#9a9a9a" stroke-width="2.20"/>
<line x1="675.0" y1="258.7" x2="690.0" y2="264.0" stroke="#11ee11" stroke-width="1.30"/>
<line x1="631.7" y1="256.8" x2="663.4" y2="243.4" stroke="#9a9a9a" stroke-width="2.20"/>
<line x1="631.7" y1="256.8" x2="663.4" y2="243.4" stroke="#11ee11" stroke-width="1.30"/>
<line x1="611.5" y1="251.5" x2="629.8" y2="257.8" stroke="#9a9a9a" stroke-width="2.20"/>
<line x1="611.5" y1="251.5" x2="629.8" y2="257.8" stroke="#11ee11" stroke-width="1.30"/>
<line x1="585.0" y1="258.0" x2="611.5" y2="251.5" stroke="#9a9a9a" stroke-width="2.20"/>
<line x1="585.0" y1="258.0" x2="611.5" y2="251.5" stroke="#11ee11" stroke-width="1.30"/>
<line x1="598.0" y1="259.7" x2="626.0" y2="274.8" stroke="#9a9a9a" stroke-width="2.20"/>
<line x1="598.0" y1="259.7" x2="626.0" y2="274.8" stroke="#11ee11" stroke-width="1.30"/>
<line x1="626.0" y1="274.8" x2="637.4" y2="280.8" stroke="#9a9a9a" stroke-width="2.20"/>
<line x1="626.0" y1="274.8" x2="637.4" y2="280.8" stroke="#d000d0" stroke-width="1.30"/>
<line x1="575.0" y1="283.7" x2="608.6" y2="268.3" stroke="#9a9a9a" stroke-width="2.20"/>
<line x1="575.0" y1="283.7" x2="608.6" y2="268.3" stroke="#11ee11" stroke-width="1.30"/>
<line x1="590.4" y1="276.0" x2="620.1" y2="290.4" stroke="#9a9a9a" stroke-width="2.20"/>
<line x1="590.4" y1="276.0" x2="620.1" y2="290.4" stroke="#11ee11" stroke-width="1.30"/>
<line x1="632.6" y1="256.8" x2="652.0" y2="264.5" stroke="#9a9a9a" stroke-width="2.20"/>
<line x1="632.6" y1="256.8" x2="652.0" y2="264.5" stroke="#11ee11" stroke-width="1.30"/>
<line x1="652.0" y1="264.5" x2="661.5" y2="268.5" stroke="#9a9a9a" stroke-width="2.20"/>
<line x1="652.0" y1="264.5" x2="661.5" y2="268.5" stroke="#d000d0" stroke-width="1.30"/>
<line x1="661.5" y1="268.5" x2="676.0" y2="274.5" stroke="#9a9a9a" stroke-width="2.20"/>
<line x1="661.5" y1="268.5" x2="676.0" y2="274.5" stroke="#11ee11" stroke-width="1.30"/>
<line x1="585.0" y1="307.5" x2="618.0" y2="291.0" stroke="#9a9a9a" stroke-width="2.20"/>
<line x1="585.0" y1="307.5" x2="618.0" y2="291.0" stroke="#11ee11" stroke-width="1.30"/>
<line x1="618.0" y1="291.0" x2="660.0" y2="272.5" stroke="#9a9a9a" stroke-width="2.20"/>
<line x1="618.0" y1="291.0" x2="660.0" y2="272.5" stroke="#11ee11" stroke-width="1.30"/>
<line x1="575.0" y1="285.6" x2="599.0" y2="298.0" stroke="#9a9a9a" stroke-width="2.20"/>
<line x1="575.0" y1="285.6" x2="599.0" y2="298.0" stroke="#11ee11" stroke-width="1.30"/>
<line x1="620.0" y1="290.4" x2="641.0" y2="281.0" stroke="#9a9a9a" stroke-width="2.20"/>
<line x1="620.0" y1="290.4" x2="641.0" y2="281.0" stroke="#11ee11" stroke-width="1.30"/>
<polyline points="515.0,312.0 527.0,318.0 514.0,325.0" fill="none" stroke="#999" stroke-width="0.60"/>
<polyline points="660.0,244.0 672.0,250.0 682.0,246.0" fill="none" stroke="#999" stroke-width="0.60"/>
<line x1="490.3" y1="301.5" x2="502.3" y2="297.6" stroke="#11ee11" stroke-width="3.50"/>
<line x1="506.1" y1="297.2" x2="528.2" y2="289.5" stroke="#11ee11" stroke-width="3.20"/>
<line x1="522.0" y1="284.5" x2="538.8" y2="277.8" stroke="#11ee11" stroke-width="4.00"/>
<line x1="614.4" y1="250.2" x2="632.6" y2="243.4" stroke="#11ee11" stroke-width="3.00"/>
<line x1="635.5" y1="239.1" x2="644.6" y2="236.2" stroke="#11ee11" stroke-width="4.00"/>
<polygon points="538.3,331.5 558.0,323.5 558.0,331.0 538.3,339.0" fill="#11ee11" stroke="#2a8a2a" stroke-width="0.40"/>
<line x1="558.0" y1="324.8" x2="636.5" y2="284.8" stroke="#11ee11" stroke-width="2.40"/>
<line x1="641.3" y1="282.3" x2="691.0" y2="263.0" stroke="#11ee11" stroke-width="2.40"/>
<polygon points="690.0,258.9 704.2,253.3 704.2,260.5 690.0,266.5" fill="#11ee11" stroke="#2a8a2a" stroke-width="0.40"/>
<polygon points="636.5,283.7 641.5,281.5 641.5,288.0 636.5,290.0" fill="#11ee11"/>
<polygon points="537.4,260.4 553.8,255.9 572.0,264.0 556.0,270.5" fill="#11ee11"/>
<polygon points="541.0,263.0 553.0,259.6 566.0,265.0 556.0,268.2" fill="#f0f0e0"/>
<polygon points="553.0,261.5 558.0,258.6 564.5,260.2 562.5,264.5 556.0,266.0" fill="#3c3c30"/>
<polygon points="536.1,250.5 553.0,245.2 553.8,255.9 537.4,260.4" fill="#ffff00" stroke="#8a8a8a" stroke-width="0.40"/>
<polygon points="536.1,246.4 553.0,240.2 553.0,245.2 536.1,250.5" fill="#11ee11"/>
<polygon points="541.0,248.0 549.7,246.8 549.7,256.7 541.9,259.6" fill="#c4c8f0" stroke="#444" stroke-width="0.60"/>
<line opacity="0" x1="536.0" y1="336.0" x2="536.0" y2="336.0" stroke="#000" stroke-width="0.00"/>
<polygon points="538.2,266.0 549.7,262.5 549.7,277.0 542.3,277.0" fill="#ff00ff"/>
<polygon points="534.5,258.4 538.2,258.0 538.2,276.5 534.5,276.8" fill="#eeeeee" stroke="#8a8a8a" stroke-width="0.40"/>
<polygon points="549.7,266.6 555.5,265.2 555.5,277.3 549.7,277.5" fill="#eeeeee" stroke="#8a8a8a" stroke-width="0.40"/>
<polygon points="555.5,268.5 562.0,271.5 562.0,275.7 555.5,276.5" fill="#ffff00"/>
<polygon points="573.6,259.2 582.7,255.5 584.3,265.0" fill="#ff00ff"/>
<polygon points="583.9,254.2 587.6,253.6 587.6,265.8 583.9,266.2" fill="#eeeeee" stroke="#8a8a8a" stroke-width="0.40"/></g></svg><div class="badge" style="top:171px">v1</div></div>
</div><div class="abs" style="left:20px;top:403px;width:320px;height:1px;background:#dadada"></div>
</div>
<div id="shadow"></div><div id="hdr">
<div id="title">21#结构 - 建筑.rvt</div>
<div id="ver"><span>v1</span>
<svg class="abs" style="left:39px;top:10px" width="13" height="8" viewBox="0 0 13 8"><path d="M1 1.2 L6.5 6.5 L12 1.2" fill="none" stroke="#fff" stroke-width="1.6"/></svg>
</div>
<div id="upl">上传新版本</div>
<!-- list icon -->
<svg class="abs" style="left:844px;top:16px" width="17" height="17" viewBox="0 0 17 17"><rect x="1.7" y="1.5" width="13.6" height="14" rx="2.6" fill="none" stroke="#fff" stroke-width="1.4"/><path d="M4.6 5.6H12.4M4.6 8.5H12.4M4.6 11.4H12.4" stroke="#fff" stroke-width="1.3"/></svg>
<div id="actbg"></div>
<div id="redtop"></div>
<!-- camera -->
<svg class="abs" style="left:895px;top:16px" width="23" height="18" viewBox="0 0 23 18"><path d="M2.5 4.5H7L8.2 2.2H14.8L16 4.5H20.5Q21.5 4.5 21.5 5.5V15.5Q21.5 16.5 20.5 16.5H2.5Q1.5 16.5 1.5 15.5V5.5Q1.5 4.5 2.5 4.5Z" fill="none" stroke="#fff" stroke-width="1.2"/><circle cx="11.5" cy="10.3" r="4.3" fill="none" stroke="#fff" stroke-width="1.3"/><circle cx="18.2" cy="6.9" r="0.9" fill="#fff"/></svg>
<!-- pen -->
<svg class="abs" style="left:952px;top:16px" width="17" height="17" viewBox="0 0 17 17"><path d="M3.5 12.5L4.2 9.6L11.8 2L14.2 4.4L6.6 12Z" fill="#fff"/><rect x="1.2" y="14.4" width="14.4" height="1.9" fill="#fff"/></svg>
<div class="abs" style="left:985px;top:17px;width:1px;height:16px;background:rgba(255,255,255,.3)"></div>
<!-- link -->
<svg class="abs" style="left:1004px;top:15px" width="21" height="20" viewBox="0 0 21 20"><g transform="rotate(-45 10.7 10.1)" fill="none" stroke="#fff" stroke-width="1.7"><path d="M8.6 13.2H4.3Q1.2 13.2 1.2 10.1Q1.2 7 4.3 7H9.2Q12.3 7 12.3 10.1"/><path d="M12.8 7H17.1Q20.2 7 20.2 10.1Q20.2 13.2 17.1 13.2H12.2Q9.1 13.2 9.1 10.1"/></g></svg>
<!-- download -->
<svg class="abs" style="left:1063px;top:17px" width="13" height="15" viewBox="0 0 13 15"><path d="M4.4 1H8.6V5.6H11.6L6.5 10.6L1.4 5.6H4.4Z" fill="#fff"/><rect x="0.6" y="12.2" width="11.8" height="2" fill="#fff"/></svg>
<!-- share -->
<svg class="abs" style="left:1115px;top:16px" width="17" height="16" viewBox="0 0 17 16"><path d="M3.5 8L13 3M3.5 8L13 13" stroke="#fff" stroke-width="1.6"/><circle cx="3.6" cy="8" r="2.8" fill="#fff"/><circle cx="13.1" cy="3.3" r="2.6" fill="#fff"/><circle cx="13.1" cy="12.7" r="2.6" fill="#fff"/></svg>
<!-- star -->
<svg class="abs" style="left:1168px;top:15px" width="17" height="17" viewBox="0 0 17 17"><path d="M8.5 1.3L10.6 6.1L15.8 6.5L11.9 9.9L13.1 15L8.5 12.3L3.9 15L5.1 9.9L1.2 6.5L6.4 6.1Z" fill="none" stroke="#fff" stroke-width="1.2" stroke-linejoin="round"/></svg>
</div>
</body></html>
